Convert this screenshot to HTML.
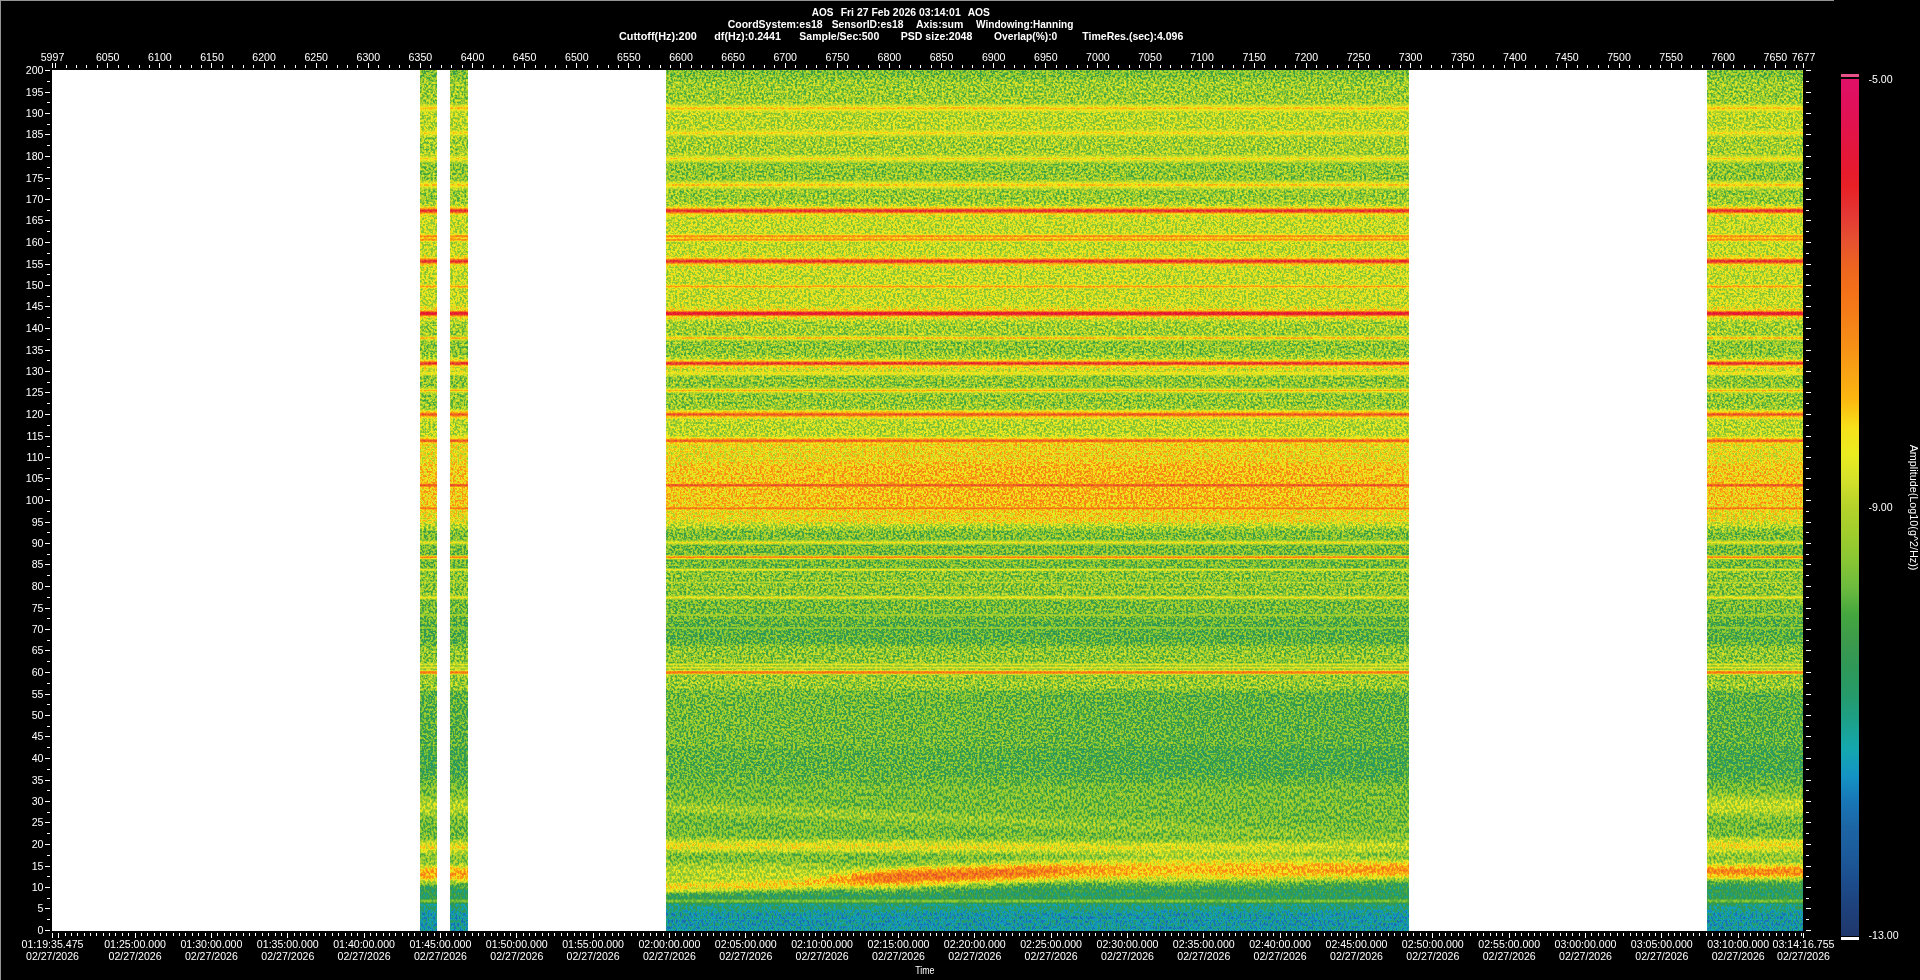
<!DOCTYPE html>
<html lang="en"><head><meta charset="utf-8"><title>AOS spectrogram</title>
<style>html,body{margin:0;padding:0;background:#000;overflow:hidden}svg{display:block;font-family:"Liberation Sans",sans-serif}</style></head>
<body>
<svg width="1920" height="980" viewBox="0 0 1920 980" shape-rendering="crispEdges">
<defs>
<linearGradient id="gU" gradientUnits="userSpaceOnUse" x1="0" y1="70" x2="0" y2="781"><stop offset="0.0007" stop-color="rgb(113,0,0)"/><stop offset="0.0077" stop-color="rgb(113,0,0)"/><stop offset="0.0176" stop-color="rgb(120,0,0)"/><stop offset="0.0359" stop-color="rgb(120,0,0)"/><stop offset="0.0373" stop-color="rgb(120,8,0)"/><stop offset="0.0387" stop-color="rgb(120,29,0)"/><stop offset="0.0401" stop-color="rgb(120,49,0)"/><stop offset="0.0415" stop-color="rgb(120,67,0)"/><stop offset="0.0429" stop-color="rgb(120,83,0)"/><stop offset="0.0443" stop-color="rgb(120,97,0)"/><stop offset="0.0457" stop-color="rgb(120,109,0)"/><stop offset="0.0471" stop-color="rgb(120,119,0)"/><stop offset="0.0485" stop-color="rgb(121,128,0)"/><stop offset="0.0499" stop-color="rgb(122,134,0)"/><stop offset="0.0513" stop-color="rgb(123,138,0)"/><stop offset="0.0527" stop-color="rgb(123,149,0)"/><stop offset="0.0541" stop-color="rgb(124,153,0)"/><stop offset="0.0556" stop-color="rgb(125,143,0)"/><stop offset="0.0584" stop-color="rgb(127,132,0)"/><stop offset="0.0598" stop-color="rgb(127,125,0)"/><stop offset="0.0612" stop-color="rgb(127,116,0)"/><stop offset="0.0626" stop-color="rgb(127,105,0)"/><stop offset="0.0640" stop-color="rgb(127,92,0)"/><stop offset="0.0654" stop-color="rgb(127,77,0)"/><stop offset="0.0668" stop-color="rgb(127,60,0)"/><stop offset="0.0682" stop-color="rgb(127,42,0)"/><stop offset="0.0710" stop-color="rgb(127,0,0)"/><stop offset="0.0724" stop-color="rgb(127,0,0)"/><stop offset="0.0738" stop-color="rgb(127,13,0)"/><stop offset="0.0752" stop-color="rgb(127,36,0)"/><stop offset="0.0767" stop-color="rgb(127,56,0)"/><stop offset="0.0781" stop-color="rgb(127,75,0)"/><stop offset="0.0795" stop-color="rgb(127,91,0)"/><stop offset="0.0809" stop-color="rgb(127,104,0)"/><stop offset="0.0823" stop-color="rgb(127,116,0)"/><stop offset="0.0837" stop-color="rgb(127,125,0)"/><stop offset="0.0851" stop-color="rgb(126,132,0)"/><stop offset="0.0865" stop-color="rgb(125,136,0)"/><stop offset="0.0879" stop-color="rgb(125,146,0)"/><stop offset="0.0893" stop-color="rgb(124,146,0)"/><stop offset="0.0907" stop-color="rgb(123,136,0)"/><stop offset="0.0921" stop-color="rgb(123,132,0)"/><stop offset="0.0935" stop-color="rgb(122,125,0)"/><stop offset="0.0949" stop-color="rgb(122,116,0)"/><stop offset="0.0963" stop-color="rgb(122,104,0)"/><stop offset="0.0977" stop-color="rgb(122,91,0)"/><stop offset="0.0992" stop-color="rgb(122,75,0)"/><stop offset="0.1006" stop-color="rgb(122,56,0)"/><stop offset="0.1020" stop-color="rgb(122,36,0)"/><stop offset="0.1034" stop-color="rgb(122,13,0)"/><stop offset="0.1048" stop-color="rgb(122,0,0)"/><stop offset="0.1076" stop-color="rgb(122,0,0)"/><stop offset="0.1090" stop-color="rgb(122,8,0)"/><stop offset="0.1104" stop-color="rgb(122,30,0)"/><stop offset="0.1118" stop-color="rgb(122,50,0)"/><stop offset="0.1132" stop-color="rgb(122,69,0)"/><stop offset="0.1146" stop-color="rgb(122,85,0)"/><stop offset="0.1160" stop-color="rgb(122,99,0)"/><stop offset="0.1174" stop-color="rgb(122,111,0)"/><stop offset="0.1188" stop-color="rgb(122,121,0)"/><stop offset="0.1203" stop-color="rgb(121,128,0)"/><stop offset="0.1217" stop-color="rgb(120,134,0)"/><stop offset="0.1231" stop-color="rgb(120,137,0)"/><stop offset="0.1245" stop-color="rgb(119,148,0)"/><stop offset="0.1259" stop-color="rgb(119,142,0)"/><stop offset="0.1273" stop-color="rgb(118,136,0)"/><stop offset="0.1287" stop-color="rgb(118,131,0)"/><stop offset="0.1301" stop-color="rgb(117,124,0)"/><stop offset="0.1315" stop-color="rgb(117,115,0)"/><stop offset="0.1329" stop-color="rgb(117,104,0)"/><stop offset="0.1343" stop-color="rgb(117,91,0)"/><stop offset="0.1357" stop-color="rgb(117,75,0)"/><stop offset="0.1371" stop-color="rgb(117,58,0)"/><stop offset="0.1385" stop-color="rgb(117,39,0)"/><stop offset="0.1399" stop-color="rgb(117,17,0)"/><stop offset="0.1414" stop-color="rgb(117,0,0)"/><stop offset="0.1442" stop-color="rgb(117,0,0)"/><stop offset="0.1456" stop-color="rgb(117,3,0)"/><stop offset="0.1470" stop-color="rgb(117,26,0)"/><stop offset="0.1484" stop-color="rgb(117,47,0)"/><stop offset="0.1498" stop-color="rgb(117,66,0)"/><stop offset="0.1512" stop-color="rgb(117,83,0)"/><stop offset="0.1526" stop-color="rgb(117,97,0)"/><stop offset="0.1540" stop-color="rgb(117,110,0)"/><stop offset="0.1554" stop-color="rgb(117,120,0)"/><stop offset="0.1568" stop-color="rgb(117,129,0)"/><stop offset="0.1582" stop-color="rgb(117,135,0)"/><stop offset="0.1596" stop-color="rgb(118,139,0)"/><stop offset="0.1610" stop-color="rgb(118,151,0)"/><stop offset="0.1624" stop-color="rgb(118,151,0)"/><stop offset="0.1639" stop-color="rgb(119,139,0)"/><stop offset="0.1653" stop-color="rgb(119,135,0)"/><stop offset="0.1667" stop-color="rgb(119,129,0)"/><stop offset="0.1681" stop-color="rgb(119,120,0)"/><stop offset="0.1695" stop-color="rgb(119,110,0)"/><stop offset="0.1709" stop-color="rgb(119,97,0)"/><stop offset="0.1723" stop-color="rgb(119,83,0)"/><stop offset="0.1737" stop-color="rgb(119,66,0)"/><stop offset="0.1751" stop-color="rgb(119,47,0)"/><stop offset="0.1765" stop-color="rgb(119,26,0)"/><stop offset="0.1779" stop-color="rgb(119,3,0)"/><stop offset="0.1793" stop-color="rgb(119,0,0)"/><stop offset="0.1835" stop-color="rgb(120,0,0)"/><stop offset="0.1850" stop-color="rgb(120,19,0)"/><stop offset="0.1864" stop-color="rgb(121,49,0)"/><stop offset="0.1878" stop-color="rgb(123,76,0)"/><stop offset="0.1892" stop-color="rgb(126,99,0)"/><stop offset="0.1906" stop-color="rgb(129,119,0)"/><stop offset="0.1920" stop-color="rgb(132,135,0)"/><stop offset="0.1934" stop-color="rgb(136,148,0)"/><stop offset="0.1948" stop-color="rgb(138,160,0)"/><stop offset="0.1962" stop-color="rgb(140,187,0)"/><stop offset="0.1976" stop-color="rgb(141,199,0)"/><stop offset="0.1990" stop-color="rgb(141,196,0)"/><stop offset="0.2004" stop-color="rgb(140,178,0)"/><stop offset="0.2018" stop-color="rgb(139,155,0)"/><stop offset="0.2032" stop-color="rgb(137,144,0)"/><stop offset="0.2046" stop-color="rgb(135,129,0)"/><stop offset="0.2060" stop-color="rgb(134,112,0)"/><stop offset="0.2075" stop-color="rgb(132,90,0)"/><stop offset="0.2089" stop-color="rgb(131,66,0)"/><stop offset="0.2103" stop-color="rgb(131,38,0)"/><stop offset="0.2117" stop-color="rgb(130,6,0)"/><stop offset="0.2131" stop-color="rgb(130,0,0)"/><stop offset="0.2229" stop-color="rgb(130,0,0)"/><stop offset="0.2243" stop-color="rgb(130,34,0)"/><stop offset="0.2257" stop-color="rgb(130,65,0)"/><stop offset="0.2271" stop-color="rgb(130,91,0)"/><stop offset="0.2286" stop-color="rgb(130,112,0)"/><stop offset="0.2300" stop-color="rgb(130,129,0)"/><stop offset="0.2314" stop-color="rgb(130,140,0)"/><stop offset="0.2328" stop-color="rgb(130,161,0)"/><stop offset="0.2342" stop-color="rgb(130,168,0)"/><stop offset="0.2356" stop-color="rgb(130,152,0)"/><stop offset="0.2370" stop-color="rgb(130,152,0)"/><stop offset="0.2384" stop-color="rgb(130,166,0)"/><stop offset="0.2398" stop-color="rgb(130,157,0)"/><stop offset="0.2412" stop-color="rgb(130,136,0)"/><stop offset="0.2426" stop-color="rgb(130,125,0)"/><stop offset="0.2440" stop-color="rgb(130,108,0)"/><stop offset="0.2454" stop-color="rgb(130,86,0)"/><stop offset="0.2468" stop-color="rgb(130,60,0)"/><stop offset="0.2482" stop-color="rgb(130,28,0)"/><stop offset="0.2496" stop-color="rgb(130,0,0)"/><stop offset="0.2539" stop-color="rgb(130,0,0)"/><stop offset="0.2553" stop-color="rgb(130,3,0)"/><stop offset="0.2567" stop-color="rgb(131,35,0)"/><stop offset="0.2581" stop-color="rgb(131,63,0)"/><stop offset="0.2595" stop-color="rgb(132,88,0)"/><stop offset="0.2609" stop-color="rgb(134,110,0)"/><stop offset="0.2623" stop-color="rgb(136,128,0)"/><stop offset="0.2637" stop-color="rgb(138,142,0)"/><stop offset="0.2651" stop-color="rgb(140,154,0)"/><stop offset="0.2665" stop-color="rgb(141,175,0)"/><stop offset="0.2679" stop-color="rgb(142,195,0)"/><stop offset="0.2693" stop-color="rgb(142,200,0)"/><stop offset="0.2707" stop-color="rgb(142,189,0)"/><stop offset="0.2722" stop-color="rgb(141,163,0)"/><stop offset="0.2750" stop-color="rgb(137,137,0)"/><stop offset="0.2764" stop-color="rgb(135,121,0)"/><stop offset="0.2778" stop-color="rgb(133,101,0)"/><stop offset="0.2792" stop-color="rgb(132,78,0)"/><stop offset="0.2806" stop-color="rgb(131,52,0)"/><stop offset="0.2820" stop-color="rgb(130,22,0)"/><stop offset="0.2834" stop-color="rgb(130,0,0)"/><stop offset="0.2932" stop-color="rgb(130,0,0)"/><stop offset="0.2947" stop-color="rgb(130,4,0)"/><stop offset="0.2961" stop-color="rgb(130,41,0)"/><stop offset="0.2975" stop-color="rgb(130,72,0)"/><stop offset="0.2989" stop-color="rgb(130,98,0)"/><stop offset="0.3003" stop-color="rgb(130,117,0)"/><stop offset="0.3017" stop-color="rgb(130,132,0)"/><stop offset="0.3031" stop-color="rgb(130,150,0)"/><stop offset="0.3045" stop-color="rgb(130,163,0)"/><stop offset="0.3059" stop-color="rgb(130,150,0)"/><stop offset="0.3073" stop-color="rgb(130,132,0)"/><stop offset="0.3087" stop-color="rgb(130,117,0)"/><stop offset="0.3101" stop-color="rgb(130,98,0)"/><stop offset="0.3115" stop-color="rgb(130,72,0)"/><stop offset="0.3129" stop-color="rgb(130,41,0)"/><stop offset="0.3143" stop-color="rgb(130,4,0)"/><stop offset="0.3158" stop-color="rgb(130,0,0)"/><stop offset="0.3284" stop-color="rgb(130,0,0)"/><stop offset="0.3298" stop-color="rgb(131,14,0)"/><stop offset="0.3312" stop-color="rgb(132,47,0)"/><stop offset="0.3326" stop-color="rgb(134,76,0)"/><stop offset="0.3340" stop-color="rgb(137,101,0)"/><stop offset="0.3354" stop-color="rgb(140,122,0)"/><stop offset="0.3368" stop-color="rgb(143,139,0)"/><stop offset="0.3383" stop-color="rgb(146,152,0)"/><stop offset="0.3397" stop-color="rgb(148,176,0)"/><stop offset="0.3411" stop-color="rgb(149,202,0)"/><stop offset="0.3425" stop-color="rgb(149,210,0)"/><stop offset="0.3439" stop-color="rgb(149,202,0)"/><stop offset="0.3453" stop-color="rgb(147,176,0)"/><stop offset="0.3467" stop-color="rgb(145,152,0)"/><stop offset="0.3481" stop-color="rgb(141,139,0)"/><stop offset="0.3495" stop-color="rgb(137,122,0)"/><stop offset="0.3509" stop-color="rgb(133,101,0)"/><stop offset="0.3523" stop-color="rgb(129,76,0)"/><stop offset="0.3537" stop-color="rgb(125,47,0)"/><stop offset="0.3551" stop-color="rgb(123,14,0)"/><stop offset="0.3565" stop-color="rgb(122,0,0)"/><stop offset="0.3650" stop-color="rgb(121,0,0)"/><stop offset="0.3664" stop-color="rgb(121,2,0)"/><stop offset="0.3678" stop-color="rgb(121,36,0)"/><stop offset="0.3692" stop-color="rgb(121,66,0)"/><stop offset="0.3706" stop-color="rgb(121,90,0)"/><stop offset="0.3720" stop-color="rgb(120,110,0)"/><stop offset="0.3734" stop-color="rgb(120,125,0)"/><stop offset="0.3748" stop-color="rgb(119,135,0)"/><stop offset="0.3762" stop-color="rgb(119,153,0)"/><stop offset="0.3776" stop-color="rgb(118,153,0)"/><stop offset="0.3790" stop-color="rgb(118,135,0)"/><stop offset="0.3805" stop-color="rgb(118,125,0)"/><stop offset="0.3819" stop-color="rgb(117,110,0)"/><stop offset="0.3833" stop-color="rgb(117,90,0)"/><stop offset="0.3847" stop-color="rgb(117,66,0)"/><stop offset="0.3861" stop-color="rgb(117,36,0)"/><stop offset="0.3875" stop-color="rgb(117,2,0)"/><stop offset="0.3889" stop-color="rgb(117,0,0)"/><stop offset="0.3987" stop-color="rgb(117,0,0)"/><stop offset="0.4001" stop-color="rgb(118,12,0)"/><stop offset="0.4015" stop-color="rgb(120,44,0)"/><stop offset="0.4030" stop-color="rgb(122,72,0)"/><stop offset="0.4044" stop-color="rgb(125,97,0)"/><stop offset="0.4058" stop-color="rgb(128,117,0)"/><stop offset="0.4072" stop-color="rgb(132,134,0)"/><stop offset="0.4086" stop-color="rgb(135,147,0)"/><stop offset="0.4100" stop-color="rgb(138,163,0)"/><stop offset="0.4114" stop-color="rgb(140,191,0)"/><stop offset="0.4128" stop-color="rgb(141,199,0)"/><stop offset="0.4142" stop-color="rgb(141,187,0)"/><stop offset="0.4156" stop-color="rgb(141,156,0)"/><stop offset="0.4170" stop-color="rgb(139,145,0)"/><stop offset="0.4184" stop-color="rgb(138,131,0)"/><stop offset="0.4198" stop-color="rgb(136,113,0)"/><stop offset="0.4212" stop-color="rgb(134,100,0)"/><stop offset="0.4226" stop-color="rgb(133,116,0)"/><stop offset="0.4241" stop-color="rgb(132,130,0)"/><stop offset="0.4255" stop-color="rgb(129,140,0)"/><stop offset="0.4269" stop-color="rgb(126,143,0)"/><stop offset="0.4283" stop-color="rgb(123,137,0)"/><stop offset="0.4311" stop-color="rgb(118,110,0)"/><stop offset="0.4325" stop-color="rgb(117,92,0)"/><stop offset="0.4339" stop-color="rgb(117,69,0)"/><stop offset="0.4353" stop-color="rgb(117,41,0)"/><stop offset="0.4367" stop-color="rgb(117,8,0)"/><stop offset="0.4381" stop-color="rgb(117,0,0)"/><stop offset="0.4395" stop-color="rgb(117,0,0)"/><stop offset="0.4409" stop-color="rgb(117,20,0)"/><stop offset="0.4423" stop-color="rgb(117,52,0)"/><stop offset="0.4437" stop-color="rgb(117,79,0)"/><stop offset="0.4451" stop-color="rgb(117,101,0)"/><stop offset="0.4466" stop-color="rgb(117,118,0)"/><stop offset="0.4480" stop-color="rgb(117,130,0)"/><stop offset="0.4494" stop-color="rgb(117,144,0)"/><stop offset="0.4508" stop-color="rgb(117,156,0)"/><stop offset="0.4522" stop-color="rgb(118,144,0)"/><stop offset="0.4536" stop-color="rgb(118,130,0)"/><stop offset="0.4550" stop-color="rgb(118,118,0)"/><stop offset="0.4564" stop-color="rgb(118,101,0)"/><stop offset="0.4578" stop-color="rgb(118,79,0)"/><stop offset="0.4592" stop-color="rgb(118,52,0)"/><stop offset="0.4606" stop-color="rgb(118,20,0)"/><stop offset="0.4620" stop-color="rgb(118,0,0)"/><stop offset="0.4705" stop-color="rgb(118,0,0)"/><stop offset="0.4719" stop-color="rgb(119,25,0)"/><stop offset="0.4733" stop-color="rgb(119,54,0)"/><stop offset="0.4747" stop-color="rgb(120,80,0)"/><stop offset="0.4761" stop-color="rgb(121,102,0)"/><stop offset="0.4775" stop-color="rgb(123,121,0)"/><stop offset="0.4789" stop-color="rgb(126,136,0)"/><stop offset="0.4803" stop-color="rgb(128,148,0)"/><stop offset="0.4817" stop-color="rgb(130,156,0)"/><stop offset="0.4831" stop-color="rgb(131,177,0)"/><stop offset="0.4845" stop-color="rgb(132,189,0)"/><stop offset="0.4859" stop-color="rgb(132,177,0)"/><stop offset="0.4873" stop-color="rgb(132,156,0)"/><stop offset="0.4887" stop-color="rgb(131,148,0)"/><stop offset="0.4902" stop-color="rgb(131,136,0)"/><stop offset="0.4916" stop-color="rgb(130,121,0)"/><stop offset="0.4930" stop-color="rgb(129,102,0)"/><stop offset="0.4944" stop-color="rgb(128,80,0)"/><stop offset="0.4958" stop-color="rgb(127,54,0)"/><stop offset="0.4972" stop-color="rgb(127,25,0)"/><stop offset="0.4986" stop-color="rgb(127,0,0)"/><stop offset="0.5070" stop-color="rgb(127,0,0)"/><stop offset="0.5084" stop-color="rgb(127,13,0)"/><stop offset="0.5098" stop-color="rgb(127,43,0)"/><stop offset="0.5113" stop-color="rgb(128,70,0)"/><stop offset="0.5127" stop-color="rgb(128,93,0)"/><stop offset="0.5141" stop-color="rgb(129,113,0)"/><stop offset="0.5155" stop-color="rgb(130,129,0)"/><stop offset="0.5169" stop-color="rgb(132,142,0)"/><stop offset="0.5183" stop-color="rgb(134,152,0)"/><stop offset="0.5197" stop-color="rgb(135,167,0)"/><stop offset="0.5211" stop-color="rgb(137,185,0)"/><stop offset="0.5225" stop-color="rgb(138,181,0)"/><stop offset="0.5239" stop-color="rgb(139,156,0)"/><stop offset="0.5253" stop-color="rgb(139,148,0)"/><stop offset="0.5267" stop-color="rgb(140,137,0)"/><stop offset="0.5281" stop-color="rgb(141,123,0)"/><stop offset="0.5295" stop-color="rgb(140,105,0)"/><stop offset="0.5309" stop-color="rgb(140,84,0)"/><stop offset="0.5323" stop-color="rgb(140,59,0)"/><stop offset="0.5338" stop-color="rgb(140,31,0)"/><stop offset="0.5352" stop-color="rgb(140,0,0)"/><stop offset="0.5478" stop-color="rgb(140,0,0)"/><stop offset="0.5577" stop-color="rgb(149,0,0)"/><stop offset="0.5717" stop-color="rgb(149,0,0)"/><stop offset="0.5731" stop-color="rgb(149,17,0)"/><stop offset="0.5745" stop-color="rgb(149,53,0)"/><stop offset="0.5759" stop-color="rgb(149,83,0)"/><stop offset="0.5774" stop-color="rgb(149,109,0)"/><stop offset="0.5788" stop-color="rgb(150,130,0)"/><stop offset="0.5802" stop-color="rgb(150,145,0)"/><stop offset="0.5816" stop-color="rgb(150,156,0)"/><stop offset="0.5830" stop-color="rgb(150,183,0)"/><stop offset="0.5844" stop-color="rgb(150,188,0)"/><stop offset="0.5858" stop-color="rgb(150,170,0)"/><stop offset="0.5872" stop-color="rgb(150,150,0)"/><stop offset="0.5886" stop-color="rgb(150,136,0)"/><stop offset="0.5900" stop-color="rgb(149,118,0)"/><stop offset="0.5914" stop-color="rgb(149,94,0)"/><stop offset="0.5928" stop-color="rgb(149,66,0)"/><stop offset="0.5942" stop-color="rgb(149,32,0)"/><stop offset="0.5956" stop-color="rgb(149,0,0)"/><stop offset="0.6069" stop-color="rgb(149,0,0)"/><stop offset="0.6083" stop-color="rgb(149,19,0)"/><stop offset="0.6097" stop-color="rgb(149,61,0)"/><stop offset="0.6111" stop-color="rgb(149,95,0)"/><stop offset="0.6125" stop-color="rgb(148,121,0)"/><stop offset="0.6139" stop-color="rgb(147,139,0)"/><stop offset="0.6153" stop-color="rgb(146,164,0)"/><stop offset="0.6167" stop-color="rgb(144,178,0)"/><stop offset="0.6181" stop-color="rgb(143,156,0)"/><stop offset="0.6210" stop-color="rgb(141,116,0)"/><stop offset="0.6224" stop-color="rgb(141,88,0)"/><stop offset="0.6238" stop-color="rgb(141,53,0)"/><stop offset="0.6252" stop-color="rgb(141,10,0)"/><stop offset="0.6266" stop-color="rgb(141,0,0)"/><stop offset="0.6322" stop-color="rgb(141,0,0)"/><stop offset="0.6336" stop-color="rgb(140,0,0)"/><stop offset="0.6491" stop-color="rgb(114,0,0)"/><stop offset="0.6505" stop-color="rgb(113,0,0)"/><stop offset="0.6547" stop-color="rgb(113,0,0)"/><stop offset="0.6561" stop-color="rgb(113,16,0)"/><stop offset="0.6575" stop-color="rgb(113,52,0)"/><stop offset="0.6589" stop-color="rgb(113,81,0)"/><stop offset="0.6603" stop-color="rgb(113,104,0)"/><stop offset="0.6617" stop-color="rgb(113,121,0)"/><stop offset="0.6632" stop-color="rgb(112,131,0)"/><stop offset="0.6646" stop-color="rgb(112,144,0)"/><stop offset="0.6660" stop-color="rgb(111,131,0)"/><stop offset="0.6674" stop-color="rgb(111,121,0)"/><stop offset="0.6688" stop-color="rgb(111,104,0)"/><stop offset="0.6702" stop-color="rgb(111,81,0)"/><stop offset="0.6716" stop-color="rgb(111,52,0)"/><stop offset="0.6730" stop-color="rgb(111,16,0)"/><stop offset="0.6744" stop-color="rgb(111,0,0)"/><stop offset="0.6772" stop-color="rgb(111,0,0)"/><stop offset="0.6786" stop-color="rgb(111,35,0)"/><stop offset="0.6800" stop-color="rgb(111,74,0)"/><stop offset="0.6814" stop-color="rgb(111,104,0)"/><stop offset="0.6828" stop-color="rgb(111,125,0)"/><stop offset="0.6842" stop-color="rgb(111,159,0)"/><stop offset="0.6857" stop-color="rgb(111,170,0)"/><stop offset="0.6885" stop-color="rgb(111,118,0)"/><stop offset="0.6899" stop-color="rgb(111,93,0)"/><stop offset="0.6913" stop-color="rgb(111,60,0)"/><stop offset="0.6927" stop-color="rgb(111,17,0)"/><stop offset="0.6941" stop-color="rgb(111,0,0)"/><stop offset="0.6955" stop-color="rgb(111,0,0)"/><stop offset="0.6969" stop-color="rgb(111,26,0)"/><stop offset="0.6983" stop-color="rgb(111,69,0)"/><stop offset="0.6997" stop-color="rgb(111,100,0)"/><stop offset="0.7025" stop-color="rgb(113,140,0)"/><stop offset="0.7039" stop-color="rgb(114,134,0)"/><stop offset="0.7053" stop-color="rgb(115,113,0)"/><stop offset="0.7068" stop-color="rgb(116,88,0)"/><stop offset="0.7082" stop-color="rgb(116,53,0)"/><stop offset="0.7096" stop-color="rgb(116,7,0)"/><stop offset="0.7110" stop-color="rgb(116,0,0)"/><stop offset="0.7138" stop-color="rgb(116,0,0)"/><stop offset="0.7152" stop-color="rgb(116,36,0)"/><stop offset="0.7166" stop-color="rgb(116,73,0)"/><stop offset="0.7180" stop-color="rgb(116,100,0)"/><stop offset="0.7194" stop-color="rgb(116,115,0)"/><stop offset="0.7208" stop-color="rgb(116,127,0)"/><stop offset="0.7222" stop-color="rgb(116,113,0)"/><stop offset="0.7236" stop-color="rgb(116,95,0)"/><stop offset="0.7250" stop-color="rgb(116,67,0)"/><stop offset="0.7264" stop-color="rgb(116,27,0)"/><stop offset="0.7278" stop-color="rgb(116,0,0)"/><stop offset="0.7335" stop-color="rgb(116,0,0)"/><stop offset="0.7349" stop-color="rgb(116,38,0)"/><stop offset="0.7363" stop-color="rgb(116,72,0)"/><stop offset="0.7377" stop-color="rgb(116,99,0)"/><stop offset="0.7391" stop-color="rgb(115,119,0)"/><stop offset="0.7419" stop-color="rgb(113,144,0)"/><stop offset="0.7447" stop-color="rgb(112,119,0)"/><stop offset="0.7461" stop-color="rgb(111,99,0)"/><stop offset="0.7475" stop-color="rgb(111,72,0)"/><stop offset="0.7489" stop-color="rgb(111,38,0)"/><stop offset="0.7504" stop-color="rgb(111,0,0)"/><stop offset="0.7588" stop-color="rgb(111,0,0)"/><stop offset="0.7602" stop-color="rgb(111,5,0)"/><stop offset="0.7616" stop-color="rgb(111,50,0)"/><stop offset="0.7630" stop-color="rgb(111,83,0)"/><stop offset="0.7644" stop-color="rgb(111,105,0)"/><stop offset="0.7658" stop-color="rgb(111,121,0)"/><stop offset="0.7672" stop-color="rgb(111,121,0)"/><stop offset="0.7686" stop-color="rgb(111,105,0)"/><stop offset="0.7700" stop-color="rgb(109,83,0)"/><stop offset="0.7714" stop-color="rgb(108,50,0)"/><stop offset="0.7729" stop-color="rgb(107,5,0)"/><stop offset="0.7743" stop-color="rgb(106,0,0)"/><stop offset="0.7785" stop-color="rgb(104,0,0)"/><stop offset="0.7799" stop-color="rgb(104,44,0)"/><stop offset="0.7813" stop-color="rgb(104,78,0)"/><stop offset="0.7827" stop-color="rgb(104,100,0)"/><stop offset="0.7841" stop-color="rgb(104,116,0)"/><stop offset="0.7855" stop-color="rgb(104,116,0)"/><stop offset="0.7869" stop-color="rgb(104,100,0)"/><stop offset="0.7883" stop-color="rgb(104,78,0)"/><stop offset="0.7897" stop-color="rgb(104,44,0)"/><stop offset="0.7911" stop-color="rgb(104,0,0)"/><stop offset="0.8038" stop-color="rgb(104,0,0)"/><stop offset="0.8052" stop-color="rgb(105,0,0)"/><stop offset="0.8122" stop-color="rgb(116,0,0)"/><stop offset="0.8136" stop-color="rgb(117,0,0)"/><stop offset="0.8291" stop-color="rgb(117,0,0)"/><stop offset="0.8305" stop-color="rgb(117,43,0)"/><stop offset="0.8319" stop-color="rgb(117,81,0)"/><stop offset="0.8333" stop-color="rgb(117,108,0)"/><stop offset="0.8347" stop-color="rgb(117,125,0)"/><stop offset="0.8361" stop-color="rgb(117,138,0)"/><stop offset="0.8376" stop-color="rgb(117,121,0)"/><stop offset="0.8390" stop-color="rgb(117,123,0)"/><stop offset="0.8404" stop-color="rgb(117,140,0)"/><stop offset="0.8418" stop-color="rgb(118,128,0)"/><stop offset="0.8432" stop-color="rgb(118,118,0)"/><stop offset="0.8446" stop-color="rgb(118,135,0)"/><stop offset="0.8460" stop-color="rgb(118,167,0)"/><stop offset="0.8474" stop-color="rgb(119,176,0)"/><stop offset="0.8488" stop-color="rgb(119,162,0)"/><stop offset="0.8502" stop-color="rgb(119,131,0)"/><stop offset="0.8516" stop-color="rgb(119,114,0)"/><stop offset="0.8530" stop-color="rgb(119,90,0)"/><stop offset="0.8544" stop-color="rgb(119,60,0)"/><stop offset="0.8558" stop-color="rgb(119,24,0)"/><stop offset="0.8572" stop-color="rgb(119,0,0)"/><stop offset="0.8685" stop-color="rgb(119,0,0)"/><stop offset="0.8699" stop-color="rgb(118,0,0)"/><stop offset="0.8769" stop-color="rgb(105,0,0)"/><stop offset="0.8783" stop-color="rgb(104,0,0)"/><stop offset="0.9487" stop-color="rgb(104,0,0)"/><stop offset="0.9571" stop-color="rgb(99,0,0)"/><stop offset="0.9909" stop-color="rgb(99,0,0)"/><stop offset="0.9993" stop-color="rgb(105,0,0)"/></linearGradient>
<linearGradient id="gS" gradientUnits="userSpaceOnUse" x1="0" y1="780" x2="0" y2="931"><stop offset="0.0033" stop-color="rgb(105,0,0)"/><stop offset="0.0430" stop-color="rgb(111,0,0)"/><stop offset="0.0762" stop-color="rgb(111,0,0)"/><stop offset="0.0960" stop-color="rgb(112,0,0)"/><stop offset="0.1159" stop-color="rgb(116,0,0)"/><stop offset="0.1556" stop-color="rgb(126,0,0)"/><stop offset="0.1755" stop-color="rgb(128,0,0)"/><stop offset="0.1887" stop-color="rgb(127,0,0)"/><stop offset="0.2020" stop-color="rgb(126,0,0)"/><stop offset="0.2483" stop-color="rgb(114,0,0)"/><stop offset="0.2682" stop-color="rgb(111,0,0)"/><stop offset="0.3013" stop-color="rgb(110,0,0)"/><stop offset="0.3742" stop-color="rgb(111,0,0)"/><stop offset="0.3874" stop-color="rgb(113,0,0)"/><stop offset="0.3940" stop-color="rgb(116,0,0)"/><stop offset="0.4205" stop-color="rgb(134,0,0)"/><stop offset="0.4338" stop-color="rgb(140,0,0)"/><stop offset="0.4404" stop-color="rgb(141,0,0)"/><stop offset="0.4470" stop-color="rgb(141,0,0)"/><stop offset="0.4603" stop-color="rgb(138,0,0)"/><stop offset="0.4669" stop-color="rgb(134,0,0)"/><stop offset="0.4868" stop-color="rgb(122,0,0)"/><stop offset="0.4934" stop-color="rgb(118,0,0)"/><stop offset="0.5000" stop-color="rgb(116,0,0)"/><stop offset="0.5132" stop-color="rgb(115,0,0)"/><stop offset="0.5331" stop-color="rgb(116,0,0)"/><stop offset="0.5464" stop-color="rgb(118,0,0)"/><stop offset="0.5530" stop-color="rgb(120,0,0)"/><stop offset="0.5596" stop-color="rgb(124,0,0)"/><stop offset="0.5662" stop-color="rgb(129,0,0)"/><stop offset="0.5861" stop-color="rgb(147,0,0)"/><stop offset="0.5927" stop-color="rgb(152,0,0)"/><stop offset="0.6060" stop-color="rgb(159,0,0)"/><stop offset="0.6192" stop-color="rgb(161,0,0)"/><stop offset="0.6325" stop-color="rgb(159,0,0)"/><stop offset="0.6457" stop-color="rgb(152,0,0)"/><stop offset="0.6589" stop-color="rgb(141,0,0)"/><stop offset="0.6987" stop-color="rgb(103,0,0)"/><stop offset="0.7053" stop-color="rgb(98,0,0)"/><stop offset="0.7119" stop-color="rgb(95,0,0)"/><stop offset="0.7252" stop-color="rgb(91,0,0)"/><stop offset="0.7384" stop-color="rgb(90,0,0)"/><stop offset="0.7583" stop-color="rgb(89,1,0)"/><stop offset="0.7649" stop-color="rgb(89,30,0)"/><stop offset="0.7715" stop-color="rgb(89,55,0)"/><stop offset="0.7781" stop-color="rgb(89,74,0)"/><stop offset="0.7914" stop-color="rgb(87,104,0)"/><stop offset="0.7980" stop-color="rgb(86,111,0)"/><stop offset="0.8046" stop-color="rgb(84,111,0)"/><stop offset="0.8113" stop-color="rgb(82,104,0)"/><stop offset="0.8245" stop-color="rgb(80,74,0)"/><stop offset="0.8311" stop-color="rgb(80,55,0)"/><stop offset="0.8377" stop-color="rgb(80,30,0)"/><stop offset="0.8444" stop-color="rgb(80,1,0)"/><stop offset="0.8576" stop-color="rgb(79,0,0)"/><stop offset="0.8775" stop-color="rgb(72,0,0)"/><stop offset="0.8907" stop-color="rgb(69,0,0)"/><stop offset="0.9967" stop-color="rgb(69,0,0)"/></linearGradient>
<linearGradient id="gR" gradientUnits="userSpaceOnUse" x1="0" y1="780" x2="0" y2="931"><stop offset="0.0033" stop-color="rgb(105,0,0)"/><stop offset="0.0364" stop-color="rgb(110,0,0)"/><stop offset="0.0828" stop-color="rgb(113,0,0)"/><stop offset="0.1026" stop-color="rgb(117,0,0)"/><stop offset="0.1424" stop-color="rgb(127,0,0)"/><stop offset="0.1689" stop-color="rgb(130,0,0)"/><stop offset="0.1821" stop-color="rgb(129,0,0)"/><stop offset="0.2020" stop-color="rgb(127,0,0)"/><stop offset="0.2483" stop-color="rgb(115,0,0)"/><stop offset="0.2682" stop-color="rgb(112,0,0)"/><stop offset="0.3013" stop-color="rgb(111,0,0)"/><stop offset="0.3609" stop-color="rgb(111,0,0)"/><stop offset="0.3742" stop-color="rgb(114,0,0)"/><stop offset="0.3808" stop-color="rgb(118,0,0)"/><stop offset="0.4007" stop-color="rgb(131,0,0)"/><stop offset="0.4139" stop-color="rgb(138,0,0)"/><stop offset="0.4272" stop-color="rgb(142,0,0)"/><stop offset="0.4338" stop-color="rgb(142,0,0)"/><stop offset="0.4404" stop-color="rgb(142,0,0)"/><stop offset="0.4536" stop-color="rgb(138,0,0)"/><stop offset="0.4801" stop-color="rgb(124,0,0)"/><stop offset="0.4934" stop-color="rgb(119,0,0)"/><stop offset="0.5132" stop-color="rgb(118,0,0)"/><stop offset="0.5331" stop-color="rgb(119,0,0)"/><stop offset="0.5464" stop-color="rgb(123,0,0)"/><stop offset="0.5530" stop-color="rgb(127,0,0)"/><stop offset="0.5596" stop-color="rgb(133,0,0)"/><stop offset="0.5795" stop-color="rgb(156,0,0)"/><stop offset="0.5861" stop-color="rgb(161,0,0)"/><stop offset="0.5927" stop-color="rgb(166,0,0)"/><stop offset="0.5993" stop-color="rgb(168,0,0)"/><stop offset="0.6060" stop-color="rgb(169,0,0)"/><stop offset="0.6126" stop-color="rgb(168,0,0)"/><stop offset="0.6192" stop-color="rgb(166,0,0)"/><stop offset="0.6258" stop-color="rgb(161,0,0)"/><stop offset="0.6325" stop-color="rgb(156,0,0)"/><stop offset="0.6589" stop-color="rgb(125,0,0)"/><stop offset="0.6788" stop-color="rgb(104,0,0)"/><stop offset="0.6854" stop-color="rgb(98,0,0)"/><stop offset="0.6921" stop-color="rgb(94,0,0)"/><stop offset="0.6987" stop-color="rgb(92,0,0)"/><stop offset="0.7119" stop-color="rgb(90,0,0)"/><stop offset="0.7583" stop-color="rgb(89,1,0)"/><stop offset="0.7649" stop-color="rgb(89,30,0)"/><stop offset="0.7715" stop-color="rgb(89,55,0)"/><stop offset="0.7781" stop-color="rgb(89,74,0)"/><stop offset="0.7914" stop-color="rgb(87,104,0)"/><stop offset="0.7980" stop-color="rgb(86,111,0)"/><stop offset="0.8046" stop-color="rgb(84,111,0)"/><stop offset="0.8113" stop-color="rgb(82,104,0)"/><stop offset="0.8245" stop-color="rgb(80,74,0)"/><stop offset="0.8311" stop-color="rgb(80,55,0)"/><stop offset="0.8377" stop-color="rgb(80,30,0)"/><stop offset="0.8444" stop-color="rgb(80,1,0)"/><stop offset="0.8576" stop-color="rgb(79,0,0)"/><stop offset="0.8775" stop-color="rgb(72,0,0)"/><stop offset="0.8907" stop-color="rgb(69,0,0)"/><stop offset="0.9967" stop-color="rgb(69,0,0)"/></linearGradient>
<linearGradient id="gM0" gradientUnits="userSpaceOnUse" x1="0" y1="780" x2="0" y2="931"><stop offset="0.0033" stop-color="rgb(105,0,0)"/><stop offset="0.0430" stop-color="rgb(111,0,0)"/><stop offset="0.1026" stop-color="rgb(110,0,0)"/><stop offset="0.1225" stop-color="rgb(111,0,0)"/><stop offset="0.1358" stop-color="rgb(113,0,0)"/><stop offset="0.1689" stop-color="rgb(121,0,0)"/><stop offset="0.1821" stop-color="rgb(122,0,0)"/><stop offset="0.1954" stop-color="rgb(121,0,0)"/><stop offset="0.2285" stop-color="rgb(113,0,0)"/><stop offset="0.2483" stop-color="rgb(111,0,0)"/><stop offset="0.3675" stop-color="rgb(111,0,0)"/><stop offset="0.3808" stop-color="rgb(114,0,0)"/><stop offset="0.3874" stop-color="rgb(117,0,0)"/><stop offset="0.4139" stop-color="rgb(135,0,0)"/><stop offset="0.4272" stop-color="rgb(140,0,0)"/><stop offset="0.4338" stop-color="rgb(141,0,0)"/><stop offset="0.4404" stop-color="rgb(141,0,0)"/><stop offset="0.4536" stop-color="rgb(137,0,0)"/><stop offset="0.4669" stop-color="rgb(130,0,0)"/><stop offset="0.4868" stop-color="rgb(116,0,0)"/><stop offset="0.4934" stop-color="rgb(114,0,0)"/><stop offset="0.5000" stop-color="rgb(112,0,0)"/><stop offset="0.5132" stop-color="rgb(112,0,0)"/><stop offset="0.5331" stop-color="rgb(114,0,0)"/><stop offset="0.5795" stop-color="rgb(124,0,0)"/><stop offset="0.5993" stop-color="rgb(127,0,0)"/><stop offset="0.6192" stop-color="rgb(128,0,0)"/><stop offset="0.6589" stop-color="rgb(124,0,0)"/><stop offset="0.6656" stop-color="rgb(125,0,0)"/><stop offset="0.6722" stop-color="rgb(127,0,0)"/><stop offset="0.6921" stop-color="rgb(139,0,0)"/><stop offset="0.6987" stop-color="rgb(142,0,0)"/><stop offset="0.7053" stop-color="rgb(143,0,0)"/><stop offset="0.7119" stop-color="rgb(143,0,0)"/><stop offset="0.7185" stop-color="rgb(140,0,0)"/><stop offset="0.7252" stop-color="rgb(137,0,0)"/><stop offset="0.7318" stop-color="rgb(131,0,0)"/><stop offset="0.7384" stop-color="rgb(124,0,0)"/><stop offset="0.7517" stop-color="rgb(108,0,0)"/><stop offset="0.7583" stop-color="rgb(100,1,0)"/><stop offset="0.7649" stop-color="rgb(96,30,0)"/><stop offset="0.7715" stop-color="rgb(93,55,0)"/><stop offset="0.7781" stop-color="rgb(91,74,0)"/><stop offset="0.7914" stop-color="rgb(88,104,0)"/><stop offset="0.7980" stop-color="rgb(86,111,0)"/><stop offset="0.8046" stop-color="rgb(84,111,0)"/><stop offset="0.8113" stop-color="rgb(82,104,0)"/><stop offset="0.8245" stop-color="rgb(80,74,0)"/><stop offset="0.8311" stop-color="rgb(80,55,0)"/><stop offset="0.8377" stop-color="rgb(80,30,0)"/><stop offset="0.8444" stop-color="rgb(80,1,0)"/><stop offset="0.8576" stop-color="rgb(79,0,0)"/><stop offset="0.8841" stop-color="rgb(70,0,0)"/><stop offset="0.8907" stop-color="rgb(69,0,0)"/><stop offset="0.9967" stop-color="rgb(69,0,0)"/></linearGradient>
<linearGradient id="gM1" gradientUnits="userSpaceOnUse" x1="0" y1="780" x2="0" y2="931"><stop offset="0.0033" stop-color="rgb(105,0,0)"/><stop offset="0.0430" stop-color="rgb(111,0,0)"/><stop offset="0.1093" stop-color="rgb(110,0,0)"/><stop offset="0.1291" stop-color="rgb(111,0,0)"/><stop offset="0.1424" stop-color="rgb(113,0,0)"/><stop offset="0.1755" stop-color="rgb(121,0,0)"/><stop offset="0.1887" stop-color="rgb(122,0,0)"/><stop offset="0.2020" stop-color="rgb(121,0,0)"/><stop offset="0.2351" stop-color="rgb(113,0,0)"/><stop offset="0.2550" stop-color="rgb(111,0,0)"/><stop offset="0.3675" stop-color="rgb(111,0,0)"/><stop offset="0.3808" stop-color="rgb(114,0,0)"/><stop offset="0.3874" stop-color="rgb(117,0,0)"/><stop offset="0.4139" stop-color="rgb(135,0,0)"/><stop offset="0.4272" stop-color="rgb(140,0,0)"/><stop offset="0.4338" stop-color="rgb(141,0,0)"/><stop offset="0.4404" stop-color="rgb(141,0,0)"/><stop offset="0.4536" stop-color="rgb(137,0,0)"/><stop offset="0.4669" stop-color="rgb(130,0,0)"/><stop offset="0.4868" stop-color="rgb(117,0,0)"/><stop offset="0.4934" stop-color="rgb(114,0,0)"/><stop offset="0.5000" stop-color="rgb(112,0,0)"/><stop offset="0.5132" stop-color="rgb(112,0,0)"/><stop offset="0.5331" stop-color="rgb(114,0,0)"/><stop offset="0.5795" stop-color="rgb(124,0,0)"/><stop offset="0.5993" stop-color="rgb(127,0,0)"/><stop offset="0.6192" stop-color="rgb(128,0,0)"/><stop offset="0.6589" stop-color="rgb(125,0,0)"/><stop offset="0.6656" stop-color="rgb(127,0,0)"/><stop offset="0.6921" stop-color="rgb(142,0,0)"/><stop offset="0.6987" stop-color="rgb(144,0,0)"/><stop offset="0.7053" stop-color="rgb(144,0,0)"/><stop offset="0.7119" stop-color="rgb(142,0,0)"/><stop offset="0.7185" stop-color="rgb(139,0,0)"/><stop offset="0.7252" stop-color="rgb(135,0,0)"/><stop offset="0.7318" stop-color="rgb(129,0,0)"/><stop offset="0.7517" stop-color="rgb(105,0,0)"/><stop offset="0.7583" stop-color="rgb(98,1,0)"/><stop offset="0.7649" stop-color="rgb(94,30,0)"/><stop offset="0.7715" stop-color="rgb(92,55,0)"/><stop offset="0.7781" stop-color="rgb(91,74,0)"/><stop offset="0.7914" stop-color="rgb(88,104,0)"/><stop offset="0.7980" stop-color="rgb(86,111,0)"/><stop offset="0.8046" stop-color="rgb(84,111,0)"/><stop offset="0.8113" stop-color="rgb(82,104,0)"/><stop offset="0.8245" stop-color="rgb(80,74,0)"/><stop offset="0.8311" stop-color="rgb(80,55,0)"/><stop offset="0.8377" stop-color="rgb(80,30,0)"/><stop offset="0.8444" stop-color="rgb(80,1,0)"/><stop offset="0.8576" stop-color="rgb(79,0,0)"/><stop offset="0.8841" stop-color="rgb(70,0,0)"/><stop offset="0.8907" stop-color="rgb(69,0,0)"/><stop offset="0.9967" stop-color="rgb(69,0,0)"/></linearGradient>
<linearGradient id="gM2" gradientUnits="userSpaceOnUse" x1="0" y1="780" x2="0" y2="931"><stop offset="0.0033" stop-color="rgb(105,0,0)"/><stop offset="0.0430" stop-color="rgb(111,0,0)"/><stop offset="0.1159" stop-color="rgb(110,0,0)"/><stop offset="0.1358" stop-color="rgb(111,0,0)"/><stop offset="0.1490" stop-color="rgb(113,0,0)"/><stop offset="0.1821" stop-color="rgb(121,0,0)"/><stop offset="0.1954" stop-color="rgb(122,0,0)"/><stop offset="0.2086" stop-color="rgb(121,0,0)"/><stop offset="0.2417" stop-color="rgb(113,0,0)"/><stop offset="0.2550" stop-color="rgb(111,0,0)"/><stop offset="0.2881" stop-color="rgb(110,0,0)"/><stop offset="0.3675" stop-color="rgb(111,0,0)"/><stop offset="0.3808" stop-color="rgb(114,0,0)"/><stop offset="0.3874" stop-color="rgb(117,0,0)"/><stop offset="0.4139" stop-color="rgb(134,0,0)"/><stop offset="0.4272" stop-color="rgb(139,0,0)"/><stop offset="0.4338" stop-color="rgb(140,0,0)"/><stop offset="0.4404" stop-color="rgb(140,0,0)"/><stop offset="0.4536" stop-color="rgb(137,0,0)"/><stop offset="0.4669" stop-color="rgb(130,0,0)"/><stop offset="0.4868" stop-color="rgb(117,0,0)"/><stop offset="0.4934" stop-color="rgb(114,0,0)"/><stop offset="0.5000" stop-color="rgb(112,0,0)"/><stop offset="0.5132" stop-color="rgb(112,0,0)"/><stop offset="0.5331" stop-color="rgb(114,0,0)"/><stop offset="0.5795" stop-color="rgb(124,0,0)"/><stop offset="0.5993" stop-color="rgb(127,0,0)"/><stop offset="0.6192" stop-color="rgb(128,0,0)"/><stop offset="0.6523" stop-color="rgb(126,0,0)"/><stop offset="0.6589" stop-color="rgb(127,0,0)"/><stop offset="0.6656" stop-color="rgb(130,0,0)"/><stop offset="0.6854" stop-color="rgb(141,0,0)"/><stop offset="0.6921" stop-color="rgb(144,0,0)"/><stop offset="0.6987" stop-color="rgb(145,0,0)"/><stop offset="0.7053" stop-color="rgb(144,0,0)"/><stop offset="0.7119" stop-color="rgb(142,0,0)"/><stop offset="0.7185" stop-color="rgb(138,0,0)"/><stop offset="0.7252" stop-color="rgb(133,0,0)"/><stop offset="0.7318" stop-color="rgb(126,0,0)"/><stop offset="0.7517" stop-color="rgb(102,0,0)"/><stop offset="0.7583" stop-color="rgb(97,1,0)"/><stop offset="0.7649" stop-color="rgb(94,30,0)"/><stop offset="0.7715" stop-color="rgb(92,55,0)"/><stop offset="0.7781" stop-color="rgb(90,74,0)"/><stop offset="0.7914" stop-color="rgb(88,104,0)"/><stop offset="0.7980" stop-color="rgb(86,111,0)"/><stop offset="0.8046" stop-color="rgb(84,111,0)"/><stop offset="0.8113" stop-color="rgb(82,104,0)"/><stop offset="0.8245" stop-color="rgb(80,74,0)"/><stop offset="0.8311" stop-color="rgb(80,55,0)"/><stop offset="0.8377" stop-color="rgb(80,30,0)"/><stop offset="0.8444" stop-color="rgb(80,1,0)"/><stop offset="0.8576" stop-color="rgb(79,0,0)"/><stop offset="0.8841" stop-color="rgb(70,0,0)"/><stop offset="0.8907" stop-color="rgb(69,0,0)"/><stop offset="0.9967" stop-color="rgb(69,0,0)"/></linearGradient>
<linearGradient id="gM3" gradientUnits="userSpaceOnUse" x1="0" y1="780" x2="0" y2="931"><stop offset="0.0033" stop-color="rgb(105,0,0)"/><stop offset="0.0430" stop-color="rgb(111,0,0)"/><stop offset="0.1159" stop-color="rgb(110,0,0)"/><stop offset="0.1424" stop-color="rgb(111,0,0)"/><stop offset="0.1556" stop-color="rgb(113,0,0)"/><stop offset="0.1887" stop-color="rgb(121,0,0)"/><stop offset="0.2020" stop-color="rgb(121,0,0)"/><stop offset="0.2152" stop-color="rgb(120,0,0)"/><stop offset="0.2483" stop-color="rgb(113,0,0)"/><stop offset="0.2616" stop-color="rgb(111,0,0)"/><stop offset="0.2881" stop-color="rgb(110,0,0)"/><stop offset="0.3675" stop-color="rgb(111,0,0)"/><stop offset="0.3808" stop-color="rgb(113,0,0)"/><stop offset="0.3874" stop-color="rgb(116,0,0)"/><stop offset="0.4139" stop-color="rgb(134,0,0)"/><stop offset="0.4272" stop-color="rgb(139,0,0)"/><stop offset="0.4338" stop-color="rgb(140,0,0)"/><stop offset="0.4404" stop-color="rgb(140,0,0)"/><stop offset="0.4536" stop-color="rgb(137,0,0)"/><stop offset="0.4603" stop-color="rgb(134,0,0)"/><stop offset="0.4868" stop-color="rgb(117,0,0)"/><stop offset="0.4934" stop-color="rgb(114,0,0)"/><stop offset="0.5000" stop-color="rgb(112,0,0)"/><stop offset="0.5132" stop-color="rgb(112,0,0)"/><stop offset="0.5331" stop-color="rgb(114,0,0)"/><stop offset="0.5728" stop-color="rgb(123,0,0)"/><stop offset="0.5927" stop-color="rgb(126,0,0)"/><stop offset="0.6126" stop-color="rgb(128,0,0)"/><stop offset="0.6457" stop-color="rgb(127,0,0)"/><stop offset="0.6523" stop-color="rgb(127,0,0)"/><stop offset="0.6589" stop-color="rgb(129,0,0)"/><stop offset="0.6788" stop-color="rgb(141,0,0)"/><stop offset="0.6854" stop-color="rgb(144,0,0)"/><stop offset="0.6921" stop-color="rgb(145,0,0)"/><stop offset="0.6987" stop-color="rgb(145,0,0)"/><stop offset="0.7053" stop-color="rgb(144,0,0)"/><stop offset="0.7119" stop-color="rgb(141,0,0)"/><stop offset="0.7185" stop-color="rgb(136,0,0)"/><stop offset="0.7252" stop-color="rgb(130,0,0)"/><stop offset="0.7318" stop-color="rgb(123,0,0)"/><stop offset="0.7450" stop-color="rgb(106,0,0)"/><stop offset="0.7517" stop-color="rgb(100,0,0)"/><stop offset="0.7583" stop-color="rgb(96,1,0)"/><stop offset="0.7649" stop-color="rgb(93,30,0)"/><stop offset="0.7715" stop-color="rgb(91,55,0)"/><stop offset="0.7781" stop-color="rgb(90,74,0)"/><stop offset="0.7914" stop-color="rgb(87,104,0)"/><stop offset="0.7980" stop-color="rgb(86,111,0)"/><stop offset="0.8046" stop-color="rgb(84,111,0)"/><stop offset="0.8113" stop-color="rgb(82,104,0)"/><stop offset="0.8245" stop-color="rgb(80,74,0)"/><stop offset="0.8311" stop-color="rgb(80,55,0)"/><stop offset="0.8377" stop-color="rgb(80,30,0)"/><stop offset="0.8444" stop-color="rgb(80,1,0)"/><stop offset="0.8576" stop-color="rgb(79,0,0)"/><stop offset="0.8841" stop-color="rgb(70,0,0)"/><stop offset="0.8907" stop-color="rgb(69,0,0)"/><stop offset="0.9967" stop-color="rgb(69,0,0)"/></linearGradient>
<linearGradient id="gM4" gradientUnits="userSpaceOnUse" x1="0" y1="780" x2="0" y2="931"><stop offset="0.0033" stop-color="rgb(105,0,0)"/><stop offset="0.0430" stop-color="rgb(111,0,0)"/><stop offset="0.1225" stop-color="rgb(110,0,0)"/><stop offset="0.1490" stop-color="rgb(111,0,0)"/><stop offset="0.1623" stop-color="rgb(113,0,0)"/><stop offset="0.1954" stop-color="rgb(120,0,0)"/><stop offset="0.2086" stop-color="rgb(121,0,0)"/><stop offset="0.2219" stop-color="rgb(120,0,0)"/><stop offset="0.2550" stop-color="rgb(113,0,0)"/><stop offset="0.2682" stop-color="rgb(111,0,0)"/><stop offset="0.2947" stop-color="rgb(110,0,0)"/><stop offset="0.3675" stop-color="rgb(111,0,0)"/><stop offset="0.3808" stop-color="rgb(113,0,0)"/><stop offset="0.3874" stop-color="rgb(116,0,0)"/><stop offset="0.4073" stop-color="rgb(129,0,0)"/><stop offset="0.4205" stop-color="rgb(137,0,0)"/><stop offset="0.4338" stop-color="rgb(140,0,0)"/><stop offset="0.4404" stop-color="rgb(140,0,0)"/><stop offset="0.4470" stop-color="rgb(139,0,0)"/><stop offset="0.4603" stop-color="rgb(134,0,0)"/><stop offset="0.4868" stop-color="rgb(117,0,0)"/><stop offset="0.4934" stop-color="rgb(114,0,0)"/><stop offset="0.5000" stop-color="rgb(112,0,0)"/><stop offset="0.5132" stop-color="rgb(112,0,0)"/><stop offset="0.5331" stop-color="rgb(114,0,0)"/><stop offset="0.5728" stop-color="rgb(123,0,0)"/><stop offset="0.5927" stop-color="rgb(126,0,0)"/><stop offset="0.6126" stop-color="rgb(128,0,0)"/><stop offset="0.6457" stop-color="rgb(128,0,0)"/><stop offset="0.6523" stop-color="rgb(129,0,0)"/><stop offset="0.6589" stop-color="rgb(132,0,0)"/><stop offset="0.6788" stop-color="rgb(143,0,0)"/><stop offset="0.6854" stop-color="rgb(145,0,0)"/><stop offset="0.6921" stop-color="rgb(146,0,0)"/><stop offset="0.6987" stop-color="rgb(145,0,0)"/><stop offset="0.7053" stop-color="rgb(143,0,0)"/><stop offset="0.7119" stop-color="rgb(139,0,0)"/><stop offset="0.7185" stop-color="rgb(134,0,0)"/><stop offset="0.7252" stop-color="rgb(127,0,0)"/><stop offset="0.7450" stop-color="rgb(104,0,0)"/><stop offset="0.7517" stop-color="rgb(98,0,0)"/><stop offset="0.7583" stop-color="rgb(95,1,0)"/><stop offset="0.7649" stop-color="rgb(92,30,0)"/><stop offset="0.7715" stop-color="rgb(91,55,0)"/><stop offset="0.7781" stop-color="rgb(90,74,0)"/><stop offset="0.7914" stop-color="rgb(87,104,0)"/><stop offset="0.7980" stop-color="rgb(86,111,0)"/><stop offset="0.8046" stop-color="rgb(84,111,0)"/><stop offset="0.8113" stop-color="rgb(82,104,0)"/><stop offset="0.8245" stop-color="rgb(80,74,0)"/><stop offset="0.8311" stop-color="rgb(80,55,0)"/><stop offset="0.8377" stop-color="rgb(80,30,0)"/><stop offset="0.8444" stop-color="rgb(80,1,0)"/><stop offset="0.8576" stop-color="rgb(79,0,0)"/><stop offset="0.8841" stop-color="rgb(70,0,0)"/><stop offset="0.8907" stop-color="rgb(69,0,0)"/><stop offset="0.9967" stop-color="rgb(69,0,0)"/></linearGradient>
<linearGradient id="gM5" gradientUnits="userSpaceOnUse" x1="0" y1="780" x2="0" y2="931"><stop offset="0.0033" stop-color="rgb(105,0,0)"/><stop offset="0.0430" stop-color="rgb(111,0,0)"/><stop offset="0.1291" stop-color="rgb(110,0,0)"/><stop offset="0.1556" stop-color="rgb(111,0,0)"/><stop offset="0.1689" stop-color="rgb(113,0,0)"/><stop offset="0.2020" stop-color="rgb(120,0,0)"/><stop offset="0.2152" stop-color="rgb(121,0,0)"/><stop offset="0.2285" stop-color="rgb(120,0,0)"/><stop offset="0.2616" stop-color="rgb(113,0,0)"/><stop offset="0.2748" stop-color="rgb(111,0,0)"/><stop offset="0.3675" stop-color="rgb(111,0,0)"/><stop offset="0.3808" stop-color="rgb(113,0,0)"/><stop offset="0.3874" stop-color="rgb(116,0,0)"/><stop offset="0.4073" stop-color="rgb(129,0,0)"/><stop offset="0.4205" stop-color="rgb(136,0,0)"/><stop offset="0.4338" stop-color="rgb(140,0,0)"/><stop offset="0.4404" stop-color="rgb(140,0,0)"/><stop offset="0.4470" stop-color="rgb(139,0,0)"/><stop offset="0.4603" stop-color="rgb(135,0,0)"/><stop offset="0.4868" stop-color="rgb(118,0,0)"/><stop offset="0.4934" stop-color="rgb(114,0,0)"/><stop offset="0.5000" stop-color="rgb(113,0,0)"/><stop offset="0.5132" stop-color="rgb(112,0,0)"/><stop offset="0.5331" stop-color="rgb(114,0,0)"/><stop offset="0.5927" stop-color="rgb(126,0,0)"/><stop offset="0.6391" stop-color="rgb(128,0,0)"/><stop offset="0.6457" stop-color="rgb(130,0,0)"/><stop offset="0.6523" stop-color="rgb(133,0,0)"/><stop offset="0.6722" stop-color="rgb(144,0,0)"/><stop offset="0.6788" stop-color="rgb(147,0,0)"/><stop offset="0.6854" stop-color="rgb(148,0,0)"/><stop offset="0.6921" stop-color="rgb(147,0,0)"/><stop offset="0.6987" stop-color="rgb(145,0,0)"/><stop offset="0.7053" stop-color="rgb(142,0,0)"/><stop offset="0.7119" stop-color="rgb(137,0,0)"/><stop offset="0.7185" stop-color="rgb(131,0,0)"/><stop offset="0.7384" stop-color="rgb(108,0,0)"/><stop offset="0.7450" stop-color="rgb(101,0,0)"/><stop offset="0.7517" stop-color="rgb(97,0,0)"/><stop offset="0.7583" stop-color="rgb(94,1,0)"/><stop offset="0.7649" stop-color="rgb(92,30,0)"/><stop offset="0.7715" stop-color="rgb(91,55,0)"/><stop offset="0.7781" stop-color="rgb(90,74,0)"/><stop offset="0.7914" stop-color="rgb(87,104,0)"/><stop offset="0.7980" stop-color="rgb(86,111,0)"/><stop offset="0.8046" stop-color="rgb(84,111,0)"/><stop offset="0.8113" stop-color="rgb(82,104,0)"/><stop offset="0.8245" stop-color="rgb(80,74,0)"/><stop offset="0.8311" stop-color="rgb(80,55,0)"/><stop offset="0.8377" stop-color="rgb(80,30,0)"/><stop offset="0.8444" stop-color="rgb(80,1,0)"/><stop offset="0.8576" stop-color="rgb(79,0,0)"/><stop offset="0.8775" stop-color="rgb(72,0,0)"/><stop offset="0.8907" stop-color="rgb(69,0,0)"/><stop offset="0.9967" stop-color="rgb(69,0,0)"/></linearGradient>
<linearGradient id="gM6" gradientUnits="userSpaceOnUse" x1="0" y1="780" x2="0" y2="931"><stop offset="0.0033" stop-color="rgb(105,0,0)"/><stop offset="0.0430" stop-color="rgb(111,0,0)"/><stop offset="0.1358" stop-color="rgb(110,0,0)"/><stop offset="0.1623" stop-color="rgb(111,0,0)"/><stop offset="0.1755" stop-color="rgb(113,0,0)"/><stop offset="0.2086" stop-color="rgb(120,0,0)"/><stop offset="0.2219" stop-color="rgb(121,0,0)"/><stop offset="0.2351" stop-color="rgb(120,0,0)"/><stop offset="0.2682" stop-color="rgb(113,0,0)"/><stop offset="0.2815" stop-color="rgb(111,0,0)"/><stop offset="0.3675" stop-color="rgb(111,0,0)"/><stop offset="0.3808" stop-color="rgb(113,0,0)"/><stop offset="0.3874" stop-color="rgb(115,0,0)"/><stop offset="0.4139" stop-color="rgb(132,0,0)"/><stop offset="0.4205" stop-color="rgb(136,0,0)"/><stop offset="0.4338" stop-color="rgb(140,0,0)"/><stop offset="0.4404" stop-color="rgb(140,0,0)"/><stop offset="0.4470" stop-color="rgb(139,0,0)"/><stop offset="0.4603" stop-color="rgb(135,0,0)"/><stop offset="0.4868" stop-color="rgb(118,0,0)"/><stop offset="0.4934" stop-color="rgb(114,0,0)"/><stop offset="0.5066" stop-color="rgb(112,0,0)"/><stop offset="0.5199" stop-color="rgb(112,0,0)"/><stop offset="0.5397" stop-color="rgb(114,0,0)"/><stop offset="0.5861" stop-color="rgb(123,0,0)"/><stop offset="0.6192" stop-color="rgb(127,0,0)"/><stop offset="0.6258" stop-color="rgb(129,0,0)"/><stop offset="0.6325" stop-color="rgb(132,0,0)"/><stop offset="0.6523" stop-color="rgb(146,0,0)"/><stop offset="0.6589" stop-color="rgb(149,0,0)"/><stop offset="0.6656" stop-color="rgb(152,0,0)"/><stop offset="0.6722" stop-color="rgb(153,0,0)"/><stop offset="0.6788" stop-color="rgb(152,0,0)"/><stop offset="0.6854" stop-color="rgb(151,0,0)"/><stop offset="0.6921" stop-color="rgb(148,0,0)"/><stop offset="0.6987" stop-color="rgb(143,0,0)"/><stop offset="0.7119" stop-color="rgb(132,0,0)"/><stop offset="0.7318" stop-color="rgb(109,0,0)"/><stop offset="0.7384" stop-color="rgb(102,0,0)"/><stop offset="0.7450" stop-color="rgb(98,0,0)"/><stop offset="0.7583" stop-color="rgb(92,1,0)"/><stop offset="0.7649" stop-color="rgb(91,30,0)"/><stop offset="0.7715" stop-color="rgb(90,55,0)"/><stop offset="0.7781" stop-color="rgb(90,74,0)"/><stop offset="0.7914" stop-color="rgb(87,104,0)"/><stop offset="0.7980" stop-color="rgb(86,111,0)"/><stop offset="0.8046" stop-color="rgb(84,111,0)"/><stop offset="0.8113" stop-color="rgb(82,104,0)"/><stop offset="0.8245" stop-color="rgb(80,74,0)"/><stop offset="0.8311" stop-color="rgb(80,55,0)"/><stop offset="0.8377" stop-color="rgb(80,30,0)"/><stop offset="0.8444" stop-color="rgb(80,1,0)"/><stop offset="0.8576" stop-color="rgb(79,0,0)"/><stop offset="0.8775" stop-color="rgb(72,0,0)"/><stop offset="0.8907" stop-color="rgb(69,0,0)"/><stop offset="0.9967" stop-color="rgb(69,0,0)"/></linearGradient>
<linearGradient id="gM7" gradientUnits="userSpaceOnUse" x1="0" y1="780" x2="0" y2="931"><stop offset="0.0033" stop-color="rgb(105,0,0)"/><stop offset="0.0430" stop-color="rgb(111,0,0)"/><stop offset="0.1424" stop-color="rgb(110,0,0)"/><stop offset="0.1689" stop-color="rgb(111,0,0)"/><stop offset="0.1821" stop-color="rgb(113,0,0)"/><stop offset="0.2152" stop-color="rgb(120,0,0)"/><stop offset="0.2285" stop-color="rgb(121,0,0)"/><stop offset="0.2417" stop-color="rgb(120,0,0)"/><stop offset="0.2748" stop-color="rgb(113,0,0)"/><stop offset="0.2881" stop-color="rgb(111,0,0)"/><stop offset="0.3675" stop-color="rgb(111,0,0)"/><stop offset="0.3808" stop-color="rgb(113,0,0)"/><stop offset="0.3874" stop-color="rgb(115,0,0)"/><stop offset="0.4139" stop-color="rgb(132,0,0)"/><stop offset="0.4205" stop-color="rgb(135,0,0)"/><stop offset="0.4338" stop-color="rgb(139,0,0)"/><stop offset="0.4404" stop-color="rgb(140,0,0)"/><stop offset="0.4470" stop-color="rgb(139,0,0)"/><stop offset="0.4603" stop-color="rgb(135,0,0)"/><stop offset="0.4669" stop-color="rgb(131,0,0)"/><stop offset="0.4868" stop-color="rgb(118,0,0)"/><stop offset="0.4934" stop-color="rgb(115,0,0)"/><stop offset="0.5066" stop-color="rgb(112,0,0)"/><stop offset="0.5265" stop-color="rgb(112,0,0)"/><stop offset="0.5596" stop-color="rgb(117,0,0)"/><stop offset="0.5993" stop-color="rgb(125,0,0)"/><stop offset="0.6060" stop-color="rgb(127,0,0)"/><stop offset="0.6126" stop-color="rgb(131,0,0)"/><stop offset="0.6325" stop-color="rgb(147,0,0)"/><stop offset="0.6457" stop-color="rgb(156,0,0)"/><stop offset="0.6523" stop-color="rgb(158,0,0)"/><stop offset="0.6589" stop-color="rgb(160,0,0)"/><stop offset="0.6656" stop-color="rgb(160,0,0)"/><stop offset="0.6722" stop-color="rgb(159,0,0)"/><stop offset="0.6788" stop-color="rgb(156,0,0)"/><stop offset="0.6854" stop-color="rgb(153,0,0)"/><stop offset="0.6987" stop-color="rgb(142,0,0)"/><stop offset="0.7053" stop-color="rgb(135,0,0)"/><stop offset="0.7252" stop-color="rgb(113,0,0)"/><stop offset="0.7318" stop-color="rgb(106,0,0)"/><stop offset="0.7450" stop-color="rgb(97,0,0)"/><stop offset="0.7583" stop-color="rgb(92,1,0)"/><stop offset="0.7649" stop-color="rgb(91,30,0)"/><stop offset="0.7715" stop-color="rgb(90,55,0)"/><stop offset="0.7781" stop-color="rgb(90,74,0)"/><stop offset="0.7914" stop-color="rgb(87,104,0)"/><stop offset="0.7980" stop-color="rgb(86,111,0)"/><stop offset="0.8046" stop-color="rgb(84,111,0)"/><stop offset="0.8113" stop-color="rgb(82,104,0)"/><stop offset="0.8245" stop-color="rgb(80,74,0)"/><stop offset="0.8311" stop-color="rgb(80,55,0)"/><stop offset="0.8377" stop-color="rgb(80,30,0)"/><stop offset="0.8444" stop-color="rgb(80,1,0)"/><stop offset="0.8576" stop-color="rgb(79,0,0)"/><stop offset="0.8775" stop-color="rgb(72,0,0)"/><stop offset="0.8907" stop-color="rgb(69,0,0)"/><stop offset="0.9967" stop-color="rgb(69,0,0)"/></linearGradient>
<linearGradient id="gM8" gradientUnits="userSpaceOnUse" x1="0" y1="780" x2="0" y2="931"><stop offset="0.0033" stop-color="rgb(105,0,0)"/><stop offset="0.0430" stop-color="rgb(111,0,0)"/><stop offset="0.1490" stop-color="rgb(110,0,0)"/><stop offset="0.1755" stop-color="rgb(111,0,0)"/><stop offset="0.1887" stop-color="rgb(113,0,0)"/><stop offset="0.2219" stop-color="rgb(120,0,0)"/><stop offset="0.2351" stop-color="rgb(121,0,0)"/><stop offset="0.2483" stop-color="rgb(119,0,0)"/><stop offset="0.2748" stop-color="rgb(114,0,0)"/><stop offset="0.2947" stop-color="rgb(111,0,0)"/><stop offset="0.3477" stop-color="rgb(110,0,0)"/><stop offset="0.3742" stop-color="rgb(111,0,0)"/><stop offset="0.3874" stop-color="rgb(115,0,0)"/><stop offset="0.4205" stop-color="rgb(135,0,0)"/><stop offset="0.4338" stop-color="rgb(139,0,0)"/><stop offset="0.4404" stop-color="rgb(140,0,0)"/><stop offset="0.4470" stop-color="rgb(139,0,0)"/><stop offset="0.4603" stop-color="rgb(135,0,0)"/><stop offset="0.4669" stop-color="rgb(131,0,0)"/><stop offset="0.4868" stop-color="rgb(118,0,0)"/><stop offset="0.4934" stop-color="rgb(115,0,0)"/><stop offset="0.5000" stop-color="rgb(113,0,0)"/><stop offset="0.5132" stop-color="rgb(111,0,0)"/><stop offset="0.5331" stop-color="rgb(112,0,0)"/><stop offset="0.5530" stop-color="rgb(115,0,0)"/><stop offset="0.5662" stop-color="rgb(118,0,0)"/><stop offset="0.5795" stop-color="rgb(123,0,0)"/><stop offset="0.5861" stop-color="rgb(126,0,0)"/><stop offset="0.5993" stop-color="rgb(136,0,0)"/><stop offset="0.6192" stop-color="rgb(155,0,0)"/><stop offset="0.6258" stop-color="rgb(161,0,0)"/><stop offset="0.6391" stop-color="rgb(169,0,0)"/><stop offset="0.6523" stop-color="rgb(172,0,0)"/><stop offset="0.6589" stop-color="rgb(172,0,0)"/><stop offset="0.6656" stop-color="rgb(170,0,0)"/><stop offset="0.6722" stop-color="rgb(168,0,0)"/><stop offset="0.6854" stop-color="rgb(159,0,0)"/><stop offset="0.6987" stop-color="rgb(147,0,0)"/><stop offset="0.7185" stop-color="rgb(124,0,0)"/><stop offset="0.7318" stop-color="rgb(111,0,0)"/><stop offset="0.7450" stop-color="rgb(101,0,0)"/><stop offset="0.7583" stop-color="rgb(94,1,0)"/><stop offset="0.7649" stop-color="rgb(92,30,0)"/><stop offset="0.7715" stop-color="rgb(91,55,0)"/><stop offset="0.7781" stop-color="rgb(90,74,0)"/><stop offset="0.7914" stop-color="rgb(87,104,0)"/><stop offset="0.7980" stop-color="rgb(86,111,0)"/><stop offset="0.8046" stop-color="rgb(84,111,0)"/><stop offset="0.8113" stop-color="rgb(82,104,0)"/><stop offset="0.8245" stop-color="rgb(80,74,0)"/><stop offset="0.8311" stop-color="rgb(80,55,0)"/><stop offset="0.8377" stop-color="rgb(80,30,0)"/><stop offset="0.8444" stop-color="rgb(80,1,0)"/><stop offset="0.8576" stop-color="rgb(79,0,0)"/><stop offset="0.8775" stop-color="rgb(72,0,0)"/><stop offset="0.8907" stop-color="rgb(69,0,0)"/><stop offset="0.9967" stop-color="rgb(69,0,0)"/></linearGradient>
<linearGradient id="gM9" gradientUnits="userSpaceOnUse" x1="0" y1="780" x2="0" y2="931"><stop offset="0.0033" stop-color="rgb(105,0,0)"/><stop offset="0.0430" stop-color="rgb(111,0,0)"/><stop offset="0.1556" stop-color="rgb(110,0,0)"/><stop offset="0.1821" stop-color="rgb(111,0,0)"/><stop offset="0.1954" stop-color="rgb(113,0,0)"/><stop offset="0.2219" stop-color="rgb(119,0,0)"/><stop offset="0.2351" stop-color="rgb(120,0,0)"/><stop offset="0.2550" stop-color="rgb(119,0,0)"/><stop offset="0.2815" stop-color="rgb(114,0,0)"/><stop offset="0.3013" stop-color="rgb(111,0,0)"/><stop offset="0.3477" stop-color="rgb(110,0,0)"/><stop offset="0.3742" stop-color="rgb(111,0,0)"/><stop offset="0.3874" stop-color="rgb(114,0,0)"/><stop offset="0.4205" stop-color="rgb(135,0,0)"/><stop offset="0.4338" stop-color="rgb(139,0,0)"/><stop offset="0.4404" stop-color="rgb(140,0,0)"/><stop offset="0.4470" stop-color="rgb(139,0,0)"/><stop offset="0.4603" stop-color="rgb(135,0,0)"/><stop offset="0.4669" stop-color="rgb(132,0,0)"/><stop offset="0.4868" stop-color="rgb(118,0,0)"/><stop offset="0.4934" stop-color="rgb(115,0,0)"/><stop offset="0.5000" stop-color="rgb(113,0,0)"/><stop offset="0.5132" stop-color="rgb(111,0,0)"/><stop offset="0.5397" stop-color="rgb(112,0,0)"/><stop offset="0.5530" stop-color="rgb(114,0,0)"/><stop offset="0.5596" stop-color="rgb(117,0,0)"/><stop offset="0.5728" stop-color="rgb(124,0,0)"/><stop offset="0.5861" stop-color="rgb(135,0,0)"/><stop offset="0.6060" stop-color="rgb(156,0,0)"/><stop offset="0.6192" stop-color="rgb(167,0,0)"/><stop offset="0.6325" stop-color="rgb(175,0,0)"/><stop offset="0.6457" stop-color="rgb(177,0,0)"/><stop offset="0.6589" stop-color="rgb(175,0,0)"/><stop offset="0.6722" stop-color="rgb(169,0,0)"/><stop offset="0.6854" stop-color="rgb(158,0,0)"/><stop offset="0.7119" stop-color="rgb(129,0,0)"/><stop offset="0.7252" stop-color="rgb(116,0,0)"/><stop offset="0.7450" stop-color="rgb(100,0,0)"/><stop offset="0.7583" stop-color="rgb(94,1,0)"/><stop offset="0.7649" stop-color="rgb(92,30,0)"/><stop offset="0.7715" stop-color="rgb(90,55,0)"/><stop offset="0.7781" stop-color="rgb(90,74,0)"/><stop offset="0.7914" stop-color="rgb(87,104,0)"/><stop offset="0.7980" stop-color="rgb(86,111,0)"/><stop offset="0.8046" stop-color="rgb(84,111,0)"/><stop offset="0.8113" stop-color="rgb(82,104,0)"/><stop offset="0.8245" stop-color="rgb(80,74,0)"/><stop offset="0.8311" stop-color="rgb(80,55,0)"/><stop offset="0.8377" stop-color="rgb(80,30,0)"/><stop offset="0.8444" stop-color="rgb(80,1,0)"/><stop offset="0.8576" stop-color="rgb(79,0,0)"/><stop offset="0.8775" stop-color="rgb(72,0,0)"/><stop offset="0.8907" stop-color="rgb(69,0,0)"/><stop offset="0.9967" stop-color="rgb(69,0,0)"/></linearGradient>
<linearGradient id="gM10" gradientUnits="userSpaceOnUse" x1="0" y1="780" x2="0" y2="931"><stop offset="0.0033" stop-color="rgb(105,0,0)"/><stop offset="0.0430" stop-color="rgb(111,0,0)"/><stop offset="0.1623" stop-color="rgb(110,0,0)"/><stop offset="0.1887" stop-color="rgb(111,0,0)"/><stop offset="0.2020" stop-color="rgb(113,0,0)"/><stop offset="0.2285" stop-color="rgb(119,0,0)"/><stop offset="0.2417" stop-color="rgb(120,0,0)"/><stop offset="0.2616" stop-color="rgb(119,0,0)"/><stop offset="0.2881" stop-color="rgb(113,0,0)"/><stop offset="0.3079" stop-color="rgb(111,0,0)"/><stop offset="0.3477" stop-color="rgb(110,0,0)"/><stop offset="0.3742" stop-color="rgb(111,0,0)"/><stop offset="0.3874" stop-color="rgb(114,0,0)"/><stop offset="0.3940" stop-color="rgb(118,0,0)"/><stop offset="0.4205" stop-color="rgb(134,0,0)"/><stop offset="0.4338" stop-color="rgb(139,0,0)"/><stop offset="0.4404" stop-color="rgb(139,0,0)"/><stop offset="0.4470" stop-color="rgb(139,0,0)"/><stop offset="0.4603" stop-color="rgb(135,0,0)"/><stop offset="0.4669" stop-color="rgb(132,0,0)"/><stop offset="0.4868" stop-color="rgb(119,0,0)"/><stop offset="0.4934" stop-color="rgb(115,0,0)"/><stop offset="0.5000" stop-color="rgb(113,0,0)"/><stop offset="0.5132" stop-color="rgb(111,0,0)"/><stop offset="0.5331" stop-color="rgb(112,0,0)"/><stop offset="0.5464" stop-color="rgb(115,0,0)"/><stop offset="0.5596" stop-color="rgb(120,0,0)"/><stop offset="0.5728" stop-color="rgb(130,0,0)"/><stop offset="0.5993" stop-color="rgb(158,0,0)"/><stop offset="0.6126" stop-color="rgb(169,0,0)"/><stop offset="0.6258" stop-color="rgb(176,0,0)"/><stop offset="0.6391" stop-color="rgb(179,0,0)"/><stop offset="0.6523" stop-color="rgb(177,0,0)"/><stop offset="0.6656" stop-color="rgb(170,0,0)"/><stop offset="0.6788" stop-color="rgb(159,0,0)"/><stop offset="0.7119" stop-color="rgb(123,0,0)"/><stop offset="0.7252" stop-color="rgb(111,0,0)"/><stop offset="0.7384" stop-color="rgb(101,0,0)"/><stop offset="0.7450" stop-color="rgb(97,0,0)"/><stop offset="0.7583" stop-color="rgb(92,1,0)"/><stop offset="0.7649" stop-color="rgb(90,30,0)"/><stop offset="0.7715" stop-color="rgb(90,55,0)"/><stop offset="0.7781" stop-color="rgb(89,74,0)"/><stop offset="0.7914" stop-color="rgb(87,104,0)"/><stop offset="0.7980" stop-color="rgb(86,111,0)"/><stop offset="0.8046" stop-color="rgb(84,111,0)"/><stop offset="0.8113" stop-color="rgb(82,104,0)"/><stop offset="0.8245" stop-color="rgb(80,74,0)"/><stop offset="0.8311" stop-color="rgb(80,55,0)"/><stop offset="0.8377" stop-color="rgb(80,30,0)"/><stop offset="0.8444" stop-color="rgb(80,1,0)"/><stop offset="0.8576" stop-color="rgb(79,0,0)"/><stop offset="0.8775" stop-color="rgb(72,0,0)"/><stop offset="0.8907" stop-color="rgb(69,0,0)"/><stop offset="0.9967" stop-color="rgb(69,0,0)"/></linearGradient>
<linearGradient id="gM11" gradientUnits="userSpaceOnUse" x1="0" y1="780" x2="0" y2="931"><stop offset="0.0033" stop-color="rgb(105,0,0)"/><stop offset="0.0430" stop-color="rgb(111,0,0)"/><stop offset="0.1689" stop-color="rgb(110,0,0)"/><stop offset="0.1954" stop-color="rgb(111,0,0)"/><stop offset="0.2086" stop-color="rgb(113,0,0)"/><stop offset="0.2351" stop-color="rgb(118,0,0)"/><stop offset="0.2483" stop-color="rgb(120,0,0)"/><stop offset="0.2682" stop-color="rgb(119,0,0)"/><stop offset="0.2947" stop-color="rgb(113,0,0)"/><stop offset="0.3146" stop-color="rgb(111,0,0)"/><stop offset="0.3742" stop-color="rgb(111,0,0)"/><stop offset="0.3874" stop-color="rgb(114,0,0)"/><stop offset="0.3940" stop-color="rgb(117,0,0)"/><stop offset="0.4205" stop-color="rgb(134,0,0)"/><stop offset="0.4338" stop-color="rgb(139,0,0)"/><stop offset="0.4404" stop-color="rgb(139,0,0)"/><stop offset="0.4470" stop-color="rgb(139,0,0)"/><stop offset="0.4603" stop-color="rgb(135,0,0)"/><stop offset="0.4735" stop-color="rgb(128,0,0)"/><stop offset="0.4868" stop-color="rgb(119,0,0)"/><stop offset="0.4934" stop-color="rgb(115,0,0)"/><stop offset="0.5000" stop-color="rgb(113,0,0)"/><stop offset="0.5132" stop-color="rgb(111,0,0)"/><stop offset="0.5265" stop-color="rgb(112,0,0)"/><stop offset="0.5397" stop-color="rgb(114,0,0)"/><stop offset="0.5464" stop-color="rgb(117,0,0)"/><stop offset="0.5596" stop-color="rgb(124,0,0)"/><stop offset="0.5728" stop-color="rgb(135,0,0)"/><stop offset="0.5927" stop-color="rgb(157,0,0)"/><stop offset="0.6060" stop-color="rgb(168,0,0)"/><stop offset="0.6192" stop-color="rgb(175,0,0)"/><stop offset="0.6325" stop-color="rgb(178,0,0)"/><stop offset="0.6457" stop-color="rgb(176,0,0)"/><stop offset="0.6589" stop-color="rgb(170,0,0)"/><stop offset="0.6722" stop-color="rgb(159,0,0)"/><stop offset="0.7053" stop-color="rgb(123,0,0)"/><stop offset="0.7185" stop-color="rgb(111,0,0)"/><stop offset="0.7318" stop-color="rgb(101,0,0)"/><stop offset="0.7384" stop-color="rgb(97,0,0)"/><stop offset="0.7450" stop-color="rgb(94,0,0)"/><stop offset="0.7583" stop-color="rgb(90,1,0)"/><stop offset="0.7649" stop-color="rgb(90,30,0)"/><stop offset="0.7715" stop-color="rgb(90,55,0)"/><stop offset="0.7781" stop-color="rgb(89,74,0)"/><stop offset="0.7914" stop-color="rgb(87,104,0)"/><stop offset="0.7980" stop-color="rgb(86,111,0)"/><stop offset="0.8046" stop-color="rgb(84,111,0)"/><stop offset="0.8113" stop-color="rgb(82,104,0)"/><stop offset="0.8245" stop-color="rgb(80,74,0)"/><stop offset="0.8311" stop-color="rgb(80,55,0)"/><stop offset="0.8377" stop-color="rgb(80,30,0)"/><stop offset="0.8444" stop-color="rgb(80,1,0)"/><stop offset="0.8576" stop-color="rgb(79,0,0)"/><stop offset="0.8775" stop-color="rgb(72,0,0)"/><stop offset="0.8907" stop-color="rgb(69,0,0)"/><stop offset="0.9967" stop-color="rgb(69,0,0)"/></linearGradient>
<linearGradient id="gM12" gradientUnits="userSpaceOnUse" x1="0" y1="780" x2="0" y2="931"><stop offset="0.0033" stop-color="rgb(105,0,0)"/><stop offset="0.0430" stop-color="rgb(111,0,0)"/><stop offset="0.1954" stop-color="rgb(111,0,0)"/><stop offset="0.2152" stop-color="rgb(113,0,0)"/><stop offset="0.2417" stop-color="rgb(118,0,0)"/><stop offset="0.2550" stop-color="rgb(120,0,0)"/><stop offset="0.2748" stop-color="rgb(119,0,0)"/><stop offset="0.3013" stop-color="rgb(113,0,0)"/><stop offset="0.3146" stop-color="rgb(111,0,0)"/><stop offset="0.3411" stop-color="rgb(110,0,0)"/><stop offset="0.3742" stop-color="rgb(111,0,0)"/><stop offset="0.3874" stop-color="rgb(114,0,0)"/><stop offset="0.3940" stop-color="rgb(117,0,0)"/><stop offset="0.4139" stop-color="rgb(130,0,0)"/><stop offset="0.4272" stop-color="rgb(136,0,0)"/><stop offset="0.4404" stop-color="rgb(139,0,0)"/><stop offset="0.4470" stop-color="rgb(139,0,0)"/><stop offset="0.4603" stop-color="rgb(135,0,0)"/><stop offset="0.4735" stop-color="rgb(128,0,0)"/><stop offset="0.4868" stop-color="rgb(119,0,0)"/><stop offset="0.4934" stop-color="rgb(116,0,0)"/><stop offset="0.5000" stop-color="rgb(113,0,0)"/><stop offset="0.5066" stop-color="rgb(112,0,0)"/><stop offset="0.5199" stop-color="rgb(112,0,0)"/><stop offset="0.5331" stop-color="rgb(114,0,0)"/><stop offset="0.5397" stop-color="rgb(116,0,0)"/><stop offset="0.5530" stop-color="rgb(123,0,0)"/><stop offset="0.5662" stop-color="rgb(134,0,0)"/><stop offset="0.5861" stop-color="rgb(156,0,0)"/><stop offset="0.5993" stop-color="rgb(167,0,0)"/><stop offset="0.6126" stop-color="rgb(175,0,0)"/><stop offset="0.6258" stop-color="rgb(178,0,0)"/><stop offset="0.6391" stop-color="rgb(176,0,0)"/><stop offset="0.6457" stop-color="rgb(173,0,0)"/><stop offset="0.6589" stop-color="rgb(164,0,0)"/><stop offset="0.6722" stop-color="rgb(152,0,0)"/><stop offset="0.6921" stop-color="rgb(130,0,0)"/><stop offset="0.7053" stop-color="rgb(116,0,0)"/><stop offset="0.7119" stop-color="rgb(110,0,0)"/><stop offset="0.7252" stop-color="rgb(101,0,0)"/><stop offset="0.7384" stop-color="rgb(94,0,0)"/><stop offset="0.7450" stop-color="rgb(92,0,0)"/><stop offset="0.7583" stop-color="rgb(90,1,0)"/><stop offset="0.7649" stop-color="rgb(90,30,0)"/><stop offset="0.7715" stop-color="rgb(89,55,0)"/><stop offset="0.7781" stop-color="rgb(89,74,0)"/><stop offset="0.7914" stop-color="rgb(87,104,0)"/><stop offset="0.7980" stop-color="rgb(86,111,0)"/><stop offset="0.8046" stop-color="rgb(84,111,0)"/><stop offset="0.8113" stop-color="rgb(82,104,0)"/><stop offset="0.8245" stop-color="rgb(80,74,0)"/><stop offset="0.8311" stop-color="rgb(80,55,0)"/><stop offset="0.8377" stop-color="rgb(80,30,0)"/><stop offset="0.8444" stop-color="rgb(80,1,0)"/><stop offset="0.8576" stop-color="rgb(79,0,0)"/><stop offset="0.8775" stop-color="rgb(72,0,0)"/><stop offset="0.8907" stop-color="rgb(69,0,0)"/><stop offset="0.9967" stop-color="rgb(69,0,0)"/></linearGradient>
<linearGradient id="gM13" gradientUnits="userSpaceOnUse" x1="0" y1="780" x2="0" y2="931"><stop offset="0.0033" stop-color="rgb(105,0,0)"/><stop offset="0.0430" stop-color="rgb(111,0,0)"/><stop offset="0.2020" stop-color="rgb(111,0,0)"/><stop offset="0.2219" stop-color="rgb(113,0,0)"/><stop offset="0.2483" stop-color="rgb(118,0,0)"/><stop offset="0.2616" stop-color="rgb(120,0,0)"/><stop offset="0.2815" stop-color="rgb(118,0,0)"/><stop offset="0.3079" stop-color="rgb(113,0,0)"/><stop offset="0.3212" stop-color="rgb(111,0,0)"/><stop offset="0.3477" stop-color="rgb(110,0,0)"/><stop offset="0.3742" stop-color="rgb(111,0,0)"/><stop offset="0.3874" stop-color="rgb(113,0,0)"/><stop offset="0.3940" stop-color="rgb(116,0,0)"/><stop offset="0.4205" stop-color="rgb(133,0,0)"/><stop offset="0.4338" stop-color="rgb(138,0,0)"/><stop offset="0.4404" stop-color="rgb(139,0,0)"/><stop offset="0.4470" stop-color="rgb(139,0,0)"/><stop offset="0.4603" stop-color="rgb(135,0,0)"/><stop offset="0.4669" stop-color="rgb(132,0,0)"/><stop offset="0.4934" stop-color="rgb(116,0,0)"/><stop offset="0.5000" stop-color="rgb(113,0,0)"/><stop offset="0.5066" stop-color="rgb(112,0,0)"/><stop offset="0.5199" stop-color="rgb(113,0,0)"/><stop offset="0.5331" stop-color="rgb(116,0,0)"/><stop offset="0.5464" stop-color="rgb(122,0,0)"/><stop offset="0.5596" stop-color="rgb(133,0,0)"/><stop offset="0.5795" stop-color="rgb(155,0,0)"/><stop offset="0.5927" stop-color="rgb(166,0,0)"/><stop offset="0.6060" stop-color="rgb(174,0,0)"/><stop offset="0.6192" stop-color="rgb(177,0,0)"/><stop offset="0.6325" stop-color="rgb(175,0,0)"/><stop offset="0.6391" stop-color="rgb(172,0,0)"/><stop offset="0.6523" stop-color="rgb(164,0,0)"/><stop offset="0.6656" stop-color="rgb(151,0,0)"/><stop offset="0.6987" stop-color="rgb(116,0,0)"/><stop offset="0.7053" stop-color="rgb(110,0,0)"/><stop offset="0.7185" stop-color="rgb(100,0,0)"/><stop offset="0.7318" stop-color="rgb(94,0,0)"/><stop offset="0.7384" stop-color="rgb(92,0,0)"/><stop offset="0.7583" stop-color="rgb(89,1,0)"/><stop offset="0.7649" stop-color="rgb(89,30,0)"/><stop offset="0.7715" stop-color="rgb(89,55,0)"/><stop offset="0.7781" stop-color="rgb(89,74,0)"/><stop offset="0.7914" stop-color="rgb(87,104,0)"/><stop offset="0.7980" stop-color="rgb(86,111,0)"/><stop offset="0.8046" stop-color="rgb(84,111,0)"/><stop offset="0.8113" stop-color="rgb(82,104,0)"/><stop offset="0.8245" stop-color="rgb(80,74,0)"/><stop offset="0.8311" stop-color="rgb(80,55,0)"/><stop offset="0.8377" stop-color="rgb(80,30,0)"/><stop offset="0.8444" stop-color="rgb(80,1,0)"/><stop offset="0.8576" stop-color="rgb(79,0,0)"/><stop offset="0.8775" stop-color="rgb(72,0,0)"/><stop offset="0.8907" stop-color="rgb(69,0,0)"/><stop offset="0.9967" stop-color="rgb(69,0,0)"/></linearGradient>
<linearGradient id="gM14" gradientUnits="userSpaceOnUse" x1="0" y1="780" x2="0" y2="931"><stop offset="0.0033" stop-color="rgb(105,0,0)"/><stop offset="0.0430" stop-color="rgb(111,0,0)"/><stop offset="0.2086" stop-color="rgb(111,0,0)"/><stop offset="0.2285" stop-color="rgb(113,0,0)"/><stop offset="0.2550" stop-color="rgb(118,0,0)"/><stop offset="0.2682" stop-color="rgb(119,0,0)"/><stop offset="0.2881" stop-color="rgb(118,0,0)"/><stop offset="0.3146" stop-color="rgb(113,0,0)"/><stop offset="0.3278" stop-color="rgb(111,0,0)"/><stop offset="0.3742" stop-color="rgb(111,0,0)"/><stop offset="0.3874" stop-color="rgb(113,0,0)"/><stop offset="0.3940" stop-color="rgb(116,0,0)"/><stop offset="0.4205" stop-color="rgb(133,0,0)"/><stop offset="0.4338" stop-color="rgb(138,0,0)"/><stop offset="0.4404" stop-color="rgb(139,0,0)"/><stop offset="0.4470" stop-color="rgb(139,0,0)"/><stop offset="0.4603" stop-color="rgb(136,0,0)"/><stop offset="0.4735" stop-color="rgb(129,0,0)"/><stop offset="0.4934" stop-color="rgb(116,0,0)"/><stop offset="0.5000" stop-color="rgb(114,0,0)"/><stop offset="0.5132" stop-color="rgb(113,0,0)"/><stop offset="0.5265" stop-color="rgb(116,0,0)"/><stop offset="0.5397" stop-color="rgb(122,0,0)"/><stop offset="0.5530" stop-color="rgb(133,0,0)"/><stop offset="0.5728" stop-color="rgb(154,0,0)"/><stop offset="0.5861" stop-color="rgb(165,0,0)"/><stop offset="0.5993" stop-color="rgb(173,0,0)"/><stop offset="0.6126" stop-color="rgb(176,0,0)"/><stop offset="0.6258" stop-color="rgb(175,0,0)"/><stop offset="0.6325" stop-color="rgb(172,0,0)"/><stop offset="0.6457" stop-color="rgb(163,0,0)"/><stop offset="0.6589" stop-color="rgb(151,0,0)"/><stop offset="0.6921" stop-color="rgb(116,0,0)"/><stop offset="0.6987" stop-color="rgb(110,0,0)"/><stop offset="0.7119" stop-color="rgb(100,0,0)"/><stop offset="0.7252" stop-color="rgb(94,0,0)"/><stop offset="0.7318" stop-color="rgb(92,0,0)"/><stop offset="0.7450" stop-color="rgb(90,0,0)"/><stop offset="0.7583" stop-color="rgb(89,1,0)"/><stop offset="0.7649" stop-color="rgb(89,30,0)"/><stop offset="0.7715" stop-color="rgb(89,55,0)"/><stop offset="0.7781" stop-color="rgb(89,74,0)"/><stop offset="0.7914" stop-color="rgb(87,104,0)"/><stop offset="0.7980" stop-color="rgb(86,111,0)"/><stop offset="0.8046" stop-color="rgb(84,111,0)"/><stop offset="0.8113" stop-color="rgb(82,104,0)"/><stop offset="0.8245" stop-color="rgb(80,74,0)"/><stop offset="0.8311" stop-color="rgb(80,55,0)"/><stop offset="0.8377" stop-color="rgb(80,30,0)"/><stop offset="0.8444" stop-color="rgb(80,1,0)"/><stop offset="0.8576" stop-color="rgb(79,0,0)"/><stop offset="0.8775" stop-color="rgb(72,0,0)"/><stop offset="0.8907" stop-color="rgb(69,0,0)"/><stop offset="0.9967" stop-color="rgb(69,0,0)"/></linearGradient>
<linearGradient id="gM15" gradientUnits="userSpaceOnUse" x1="0" y1="780" x2="0" y2="931"><stop offset="0.0033" stop-color="rgb(105,0,0)"/><stop offset="0.0298" stop-color="rgb(109,0,0)"/><stop offset="0.0497" stop-color="rgb(111,0,0)"/><stop offset="0.2152" stop-color="rgb(111,0,0)"/><stop offset="0.2351" stop-color="rgb(113,0,0)"/><stop offset="0.2616" stop-color="rgb(118,0,0)"/><stop offset="0.2748" stop-color="rgb(119,0,0)"/><stop offset="0.2947" stop-color="rgb(118,0,0)"/><stop offset="0.3212" stop-color="rgb(113,0,0)"/><stop offset="0.3344" stop-color="rgb(111,0,0)"/><stop offset="0.3742" stop-color="rgb(111,0,0)"/><stop offset="0.3874" stop-color="rgb(113,0,0)"/><stop offset="0.3940" stop-color="rgb(116,0,0)"/><stop offset="0.4205" stop-color="rgb(132,0,0)"/><stop offset="0.4338" stop-color="rgb(138,0,0)"/><stop offset="0.4404" stop-color="rgb(139,0,0)"/><stop offset="0.4470" stop-color="rgb(139,0,0)"/><stop offset="0.4603" stop-color="rgb(136,0,0)"/><stop offset="0.4735" stop-color="rgb(129,0,0)"/><stop offset="0.4934" stop-color="rgb(117,0,0)"/><stop offset="0.5000" stop-color="rgb(114,0,0)"/><stop offset="0.5066" stop-color="rgb(114,0,0)"/><stop offset="0.5132" stop-color="rgb(114,0,0)"/><stop offset="0.5265" stop-color="rgb(118,0,0)"/><stop offset="0.5397" stop-color="rgb(126,0,0)"/><stop offset="0.5464" stop-color="rgb(132,0,0)"/><stop offset="0.5728" stop-color="rgb(159,0,0)"/><stop offset="0.5861" stop-color="rgb(169,0,0)"/><stop offset="0.5993" stop-color="rgb(174,0,0)"/><stop offset="0.6060" stop-color="rgb(175,0,0)"/><stop offset="0.6192" stop-color="rgb(174,0,0)"/><stop offset="0.6258" stop-color="rgb(171,0,0)"/><stop offset="0.6391" stop-color="rgb(163,0,0)"/><stop offset="0.6523" stop-color="rgb(151,0,0)"/><stop offset="0.6788" stop-color="rgb(123,0,0)"/><stop offset="0.6921" stop-color="rgb(110,0,0)"/><stop offset="0.6987" stop-color="rgb(105,0,0)"/><stop offset="0.7119" stop-color="rgb(96,0,0)"/><stop offset="0.7185" stop-color="rgb(93,0,0)"/><stop offset="0.7318" stop-color="rgb(90,0,0)"/><stop offset="0.7583" stop-color="rgb(89,1,0)"/><stop offset="0.7649" stop-color="rgb(89,30,0)"/><stop offset="0.7715" stop-color="rgb(89,55,0)"/><stop offset="0.7781" stop-color="rgb(89,74,0)"/><stop offset="0.7914" stop-color="rgb(87,104,0)"/><stop offset="0.7980" stop-color="rgb(86,111,0)"/><stop offset="0.8046" stop-color="rgb(84,111,0)"/><stop offset="0.8113" stop-color="rgb(82,104,0)"/><stop offset="0.8245" stop-color="rgb(80,74,0)"/><stop offset="0.8311" stop-color="rgb(80,55,0)"/><stop offset="0.8377" stop-color="rgb(80,30,0)"/><stop offset="0.8444" stop-color="rgb(80,1,0)"/><stop offset="0.8576" stop-color="rgb(79,0,0)"/><stop offset="0.8775" stop-color="rgb(72,0,0)"/><stop offset="0.8907" stop-color="rgb(69,0,0)"/><stop offset="0.9967" stop-color="rgb(69,0,0)"/></linearGradient>
<linearGradient id="gM16" gradientUnits="userSpaceOnUse" x1="0" y1="780" x2="0" y2="931"><stop offset="0.0033" stop-color="rgb(105,0,0)"/><stop offset="0.0298" stop-color="rgb(109,0,0)"/><stop offset="0.0497" stop-color="rgb(111,0,0)"/><stop offset="0.2219" stop-color="rgb(111,0,0)"/><stop offset="0.2417" stop-color="rgb(113,0,0)"/><stop offset="0.2682" stop-color="rgb(118,0,0)"/><stop offset="0.2815" stop-color="rgb(119,0,0)"/><stop offset="0.3013" stop-color="rgb(118,0,0)"/><stop offset="0.3278" stop-color="rgb(113,0,0)"/><stop offset="0.3411" stop-color="rgb(111,0,0)"/><stop offset="0.3742" stop-color="rgb(111,0,0)"/><stop offset="0.3874" stop-color="rgb(113,0,0)"/><stop offset="0.3940" stop-color="rgb(115,0,0)"/><stop offset="0.4205" stop-color="rgb(132,0,0)"/><stop offset="0.4338" stop-color="rgb(137,0,0)"/><stop offset="0.4404" stop-color="rgb(138,0,0)"/><stop offset="0.4470" stop-color="rgb(139,0,0)"/><stop offset="0.4603" stop-color="rgb(136,0,0)"/><stop offset="0.4669" stop-color="rgb(133,0,0)"/><stop offset="0.4934" stop-color="rgb(117,0,0)"/><stop offset="0.5000" stop-color="rgb(115,0,0)"/><stop offset="0.5066" stop-color="rgb(115,0,0)"/><stop offset="0.5199" stop-color="rgb(117,0,0)"/><stop offset="0.5331" stop-color="rgb(124,0,0)"/><stop offset="0.5397" stop-color="rgb(129,0,0)"/><stop offset="0.5662" stop-color="rgb(155,0,0)"/><stop offset="0.5795" stop-color="rgb(164,0,0)"/><stop offset="0.5927" stop-color="rgb(170,0,0)"/><stop offset="0.6060" stop-color="rgb(171,0,0)"/><stop offset="0.6192" stop-color="rgb(168,0,0)"/><stop offset="0.6325" stop-color="rgb(162,0,0)"/><stop offset="0.6457" stop-color="rgb(151,0,0)"/><stop offset="0.6854" stop-color="rgb(111,0,0)"/><stop offset="0.6921" stop-color="rgb(106,0,0)"/><stop offset="0.7053" stop-color="rgb(98,0,0)"/><stop offset="0.7119" stop-color="rgb(95,0,0)"/><stop offset="0.7252" stop-color="rgb(91,0,0)"/><stop offset="0.7384" stop-color="rgb(90,0,0)"/><stop offset="0.7583" stop-color="rgb(89,1,0)"/><stop offset="0.7649" stop-color="rgb(89,30,0)"/><stop offset="0.7715" stop-color="rgb(89,55,0)"/><stop offset="0.7781" stop-color="rgb(89,74,0)"/><stop offset="0.7914" stop-color="rgb(87,104,0)"/><stop offset="0.7980" stop-color="rgb(86,111,0)"/><stop offset="0.8046" stop-color="rgb(84,111,0)"/><stop offset="0.8113" stop-color="rgb(82,104,0)"/><stop offset="0.8245" stop-color="rgb(80,74,0)"/><stop offset="0.8311" stop-color="rgb(80,55,0)"/><stop offset="0.8377" stop-color="rgb(80,30,0)"/><stop offset="0.8444" stop-color="rgb(80,1,0)"/><stop offset="0.8576" stop-color="rgb(79,0,0)"/><stop offset="0.8775" stop-color="rgb(72,0,0)"/><stop offset="0.8907" stop-color="rgb(69,0,0)"/><stop offset="0.9967" stop-color="rgb(69,0,0)"/></linearGradient>
<linearGradient id="gM17" gradientUnits="userSpaceOnUse" x1="0" y1="780" x2="0" y2="931"><stop offset="0.0033" stop-color="rgb(105,0,0)"/><stop offset="0.0298" stop-color="rgb(109,0,0)"/><stop offset="0.0497" stop-color="rgb(111,0,0)"/><stop offset="0.2285" stop-color="rgb(111,0,0)"/><stop offset="0.2417" stop-color="rgb(112,0,0)"/><stop offset="0.2748" stop-color="rgb(118,0,0)"/><stop offset="0.2881" stop-color="rgb(119,0,0)"/><stop offset="0.3079" stop-color="rgb(117,0,0)"/><stop offset="0.3411" stop-color="rgb(112,0,0)"/><stop offset="0.3742" stop-color="rgb(111,0,0)"/><stop offset="0.3874" stop-color="rgb(113,0,0)"/><stop offset="0.3940" stop-color="rgb(115,0,0)"/><stop offset="0.4205" stop-color="rgb(131,0,0)"/><stop offset="0.4272" stop-color="rgb(135,0,0)"/><stop offset="0.4404" stop-color="rgb(138,0,0)"/><stop offset="0.4470" stop-color="rgb(138,0,0)"/><stop offset="0.4536" stop-color="rgb(137,0,0)"/><stop offset="0.4669" stop-color="rgb(133,0,0)"/><stop offset="0.4934" stop-color="rgb(118,0,0)"/><stop offset="0.5000" stop-color="rgb(116,0,0)"/><stop offset="0.5066" stop-color="rgb(116,0,0)"/><stop offset="0.5199" stop-color="rgb(119,0,0)"/><stop offset="0.5265" stop-color="rgb(122,0,0)"/><stop offset="0.5397" stop-color="rgb(131,0,0)"/><stop offset="0.5596" stop-color="rgb(148,0,0)"/><stop offset="0.5728" stop-color="rgb(157,0,0)"/><stop offset="0.5861" stop-color="rgb(163,0,0)"/><stop offset="0.5993" stop-color="rgb(165,0,0)"/><stop offset="0.6126" stop-color="rgb(163,0,0)"/><stop offset="0.6192" stop-color="rgb(161,0,0)"/><stop offset="0.6325" stop-color="rgb(154,0,0)"/><stop offset="0.6523" stop-color="rgb(139,0,0)"/><stop offset="0.6788" stop-color="rgb(113,0,0)"/><stop offset="0.6854" stop-color="rgb(108,0,0)"/><stop offset="0.6987" stop-color="rgb(100,0,0)"/><stop offset="0.7119" stop-color="rgb(94,0,0)"/><stop offset="0.7252" stop-color="rgb(91,0,0)"/><stop offset="0.7583" stop-color="rgb(89,1,0)"/><stop offset="0.7649" stop-color="rgb(89,30,0)"/><stop offset="0.7715" stop-color="rgb(89,55,0)"/><stop offset="0.7781" stop-color="rgb(89,74,0)"/><stop offset="0.7914" stop-color="rgb(87,104,0)"/><stop offset="0.7980" stop-color="rgb(86,111,0)"/><stop offset="0.8046" stop-color="rgb(84,111,0)"/><stop offset="0.8113" stop-color="rgb(82,104,0)"/><stop offset="0.8245" stop-color="rgb(80,74,0)"/><stop offset="0.8311" stop-color="rgb(80,55,0)"/><stop offset="0.8377" stop-color="rgb(80,30,0)"/><stop offset="0.8444" stop-color="rgb(80,1,0)"/><stop offset="0.8576" stop-color="rgb(79,0,0)"/><stop offset="0.8775" stop-color="rgb(72,0,0)"/><stop offset="0.8907" stop-color="rgb(69,0,0)"/><stop offset="0.9967" stop-color="rgb(69,0,0)"/></linearGradient>
<linearGradient id="gM18" gradientUnits="userSpaceOnUse" x1="0" y1="780" x2="0" y2="931"><stop offset="0.0033" stop-color="rgb(105,0,0)"/><stop offset="0.0298" stop-color="rgb(109,0,0)"/><stop offset="0.0497" stop-color="rgb(111,0,0)"/><stop offset="0.2351" stop-color="rgb(111,0,0)"/><stop offset="0.2483" stop-color="rgb(112,0,0)"/><stop offset="0.2815" stop-color="rgb(117,0,0)"/><stop offset="0.2947" stop-color="rgb(119,0,0)"/><stop offset="0.3146" stop-color="rgb(117,0,0)"/><stop offset="0.3477" stop-color="rgb(112,0,0)"/><stop offset="0.3742" stop-color="rgb(111,0,0)"/><stop offset="0.3874" stop-color="rgb(113,0,0)"/><stop offset="0.3940" stop-color="rgb(115,0,0)"/><stop offset="0.4272" stop-color="rgb(134,0,0)"/><stop offset="0.4404" stop-color="rgb(138,0,0)"/><stop offset="0.4470" stop-color="rgb(138,0,0)"/><stop offset="0.4536" stop-color="rgb(137,0,0)"/><stop offset="0.4669" stop-color="rgb(133,0,0)"/><stop offset="0.4934" stop-color="rgb(119,0,0)"/><stop offset="0.5000" stop-color="rgb(118,0,0)"/><stop offset="0.5066" stop-color="rgb(117,0,0)"/><stop offset="0.5132" stop-color="rgb(119,0,0)"/><stop offset="0.5265" stop-color="rgb(124,0,0)"/><stop offset="0.5596" stop-color="rgb(148,0,0)"/><stop offset="0.5728" stop-color="rgb(155,0,0)"/><stop offset="0.5861" stop-color="rgb(160,0,0)"/><stop offset="0.5993" stop-color="rgb(161,0,0)"/><stop offset="0.6126" stop-color="rgb(159,0,0)"/><stop offset="0.6192" stop-color="rgb(157,0,0)"/><stop offset="0.6325" stop-color="rgb(151,0,0)"/><stop offset="0.6523" stop-color="rgb(137,0,0)"/><stop offset="0.6788" stop-color="rgb(113,0,0)"/><stop offset="0.6854" stop-color="rgb(108,0,0)"/><stop offset="0.6987" stop-color="rgb(100,0,0)"/><stop offset="0.7119" stop-color="rgb(95,0,0)"/><stop offset="0.7252" stop-color="rgb(92,0,0)"/><stop offset="0.7384" stop-color="rgb(90,0,0)"/><stop offset="0.7583" stop-color="rgb(89,1,0)"/><stop offset="0.7649" stop-color="rgb(89,30,0)"/><stop offset="0.7715" stop-color="rgb(89,55,0)"/><stop offset="0.7781" stop-color="rgb(89,74,0)"/><stop offset="0.7914" stop-color="rgb(87,104,0)"/><stop offset="0.7980" stop-color="rgb(86,111,0)"/><stop offset="0.8046" stop-color="rgb(84,111,0)"/><stop offset="0.8113" stop-color="rgb(82,104,0)"/><stop offset="0.8245" stop-color="rgb(80,74,0)"/><stop offset="0.8311" stop-color="rgb(80,55,0)"/><stop offset="0.8377" stop-color="rgb(80,30,0)"/><stop offset="0.8444" stop-color="rgb(80,1,0)"/><stop offset="0.8576" stop-color="rgb(79,0,0)"/><stop offset="0.8775" stop-color="rgb(72,0,0)"/><stop offset="0.8907" stop-color="rgb(69,0,0)"/><stop offset="0.9967" stop-color="rgb(69,0,0)"/></linearGradient>
<linearGradient id="gM19" gradientUnits="userSpaceOnUse" x1="0" y1="780" x2="0" y2="931"><stop offset="0.0033" stop-color="rgb(105,0,0)"/><stop offset="0.0298" stop-color="rgb(109,0,0)"/><stop offset="0.0497" stop-color="rgb(111,0,0)"/><stop offset="0.2417" stop-color="rgb(111,0,0)"/><stop offset="0.2550" stop-color="rgb(112,0,0)"/><stop offset="0.2881" stop-color="rgb(117,0,0)"/><stop offset="0.3013" stop-color="rgb(118,0,0)"/><stop offset="0.3146" stop-color="rgb(118,0,0)"/><stop offset="0.3543" stop-color="rgb(112,0,0)"/><stop offset="0.3808" stop-color="rgb(111,0,0)"/><stop offset="0.3940" stop-color="rgb(114,0,0)"/><stop offset="0.4272" stop-color="rgb(133,0,0)"/><stop offset="0.4404" stop-color="rgb(137,0,0)"/><stop offset="0.4470" stop-color="rgb(138,0,0)"/><stop offset="0.4603" stop-color="rgb(135,0,0)"/><stop offset="0.4934" stop-color="rgb(120,0,0)"/><stop offset="0.5000" stop-color="rgb(119,0,0)"/><stop offset="0.5066" stop-color="rgb(119,0,0)"/><stop offset="0.5132" stop-color="rgb(121,0,0)"/><stop offset="0.5265" stop-color="rgb(126,0,0)"/><stop offset="0.5596" stop-color="rgb(147,0,0)"/><stop offset="0.5728" stop-color="rgb(154,0,0)"/><stop offset="0.5861" stop-color="rgb(157,0,0)"/><stop offset="0.5993" stop-color="rgb(158,0,0)"/><stop offset="0.6126" stop-color="rgb(157,0,0)"/><stop offset="0.6192" stop-color="rgb(155,0,0)"/><stop offset="0.6325" stop-color="rgb(149,0,0)"/><stop offset="0.6523" stop-color="rgb(136,0,0)"/><stop offset="0.6854" stop-color="rgb(108,0,0)"/><stop offset="0.6921" stop-color="rgb(104,0,0)"/><stop offset="0.7053" stop-color="rgb(98,0,0)"/><stop offset="0.7252" stop-color="rgb(92,0,0)"/><stop offset="0.7384" stop-color="rgb(90,0,0)"/><stop offset="0.7583" stop-color="rgb(89,1,0)"/><stop offset="0.7649" stop-color="rgb(89,30,0)"/><stop offset="0.7715" stop-color="rgb(89,55,0)"/><stop offset="0.7781" stop-color="rgb(89,74,0)"/><stop offset="0.7914" stop-color="rgb(87,104,0)"/><stop offset="0.7980" stop-color="rgb(86,111,0)"/><stop offset="0.8046" stop-color="rgb(84,111,0)"/><stop offset="0.8113" stop-color="rgb(82,104,0)"/><stop offset="0.8245" stop-color="rgb(80,74,0)"/><stop offset="0.8311" stop-color="rgb(80,55,0)"/><stop offset="0.8377" stop-color="rgb(80,30,0)"/><stop offset="0.8444" stop-color="rgb(80,1,0)"/><stop offset="0.8576" stop-color="rgb(79,0,0)"/><stop offset="0.8775" stop-color="rgb(72,0,0)"/><stop offset="0.8907" stop-color="rgb(69,0,0)"/><stop offset="0.9967" stop-color="rgb(69,0,0)"/></linearGradient>
<linearGradient id="gM20" gradientUnits="userSpaceOnUse" x1="0" y1="780" x2="0" y2="931"><stop offset="0.0033" stop-color="rgb(105,0,0)"/><stop offset="0.0298" stop-color="rgb(109,0,0)"/><stop offset="0.0497" stop-color="rgb(111,0,0)"/><stop offset="0.2483" stop-color="rgb(111,0,0)"/><stop offset="0.2616" stop-color="rgb(112,0,0)"/><stop offset="0.2947" stop-color="rgb(117,0,0)"/><stop offset="0.3079" stop-color="rgb(118,0,0)"/><stop offset="0.3212" stop-color="rgb(118,0,0)"/><stop offset="0.3609" stop-color="rgb(112,0,0)"/><stop offset="0.3808" stop-color="rgb(111,0,0)"/><stop offset="0.3940" stop-color="rgb(114,0,0)"/><stop offset="0.4007" stop-color="rgb(117,0,0)"/><stop offset="0.4272" stop-color="rgb(133,0,0)"/><stop offset="0.4404" stop-color="rgb(137,0,0)"/><stop offset="0.4470" stop-color="rgb(137,0,0)"/><stop offset="0.4603" stop-color="rgb(135,0,0)"/><stop offset="0.4868" stop-color="rgb(124,0,0)"/><stop offset="0.4934" stop-color="rgb(122,0,0)"/><stop offset="0.5066" stop-color="rgb(122,0,0)"/><stop offset="0.5132" stop-color="rgb(123,0,0)"/><stop offset="0.5265" stop-color="rgb(128,0,0)"/><stop offset="0.5530" stop-color="rgb(143,0,0)"/><stop offset="0.5662" stop-color="rgb(150,0,0)"/><stop offset="0.5861" stop-color="rgb(155,0,0)"/><stop offset="0.5993" stop-color="rgb(156,0,0)"/><stop offset="0.6060" stop-color="rgb(155,0,0)"/><stop offset="0.6192" stop-color="rgb(152,0,0)"/><stop offset="0.6391" stop-color="rgb(144,0,0)"/><stop offset="0.6589" stop-color="rgb(130,0,0)"/><stop offset="0.6854" stop-color="rgb(109,0,0)"/><stop offset="0.6921" stop-color="rgb(105,0,0)"/><stop offset="0.7053" stop-color="rgb(99,0,0)"/><stop offset="0.7185" stop-color="rgb(94,0,0)"/><stop offset="0.7318" stop-color="rgb(92,0,0)"/><stop offset="0.7583" stop-color="rgb(90,1,0)"/><stop offset="0.7649" stop-color="rgb(89,30,0)"/><stop offset="0.7715" stop-color="rgb(89,55,0)"/><stop offset="0.7781" stop-color="rgb(89,74,0)"/><stop offset="0.7914" stop-color="rgb(87,104,0)"/><stop offset="0.7980" stop-color="rgb(86,111,0)"/><stop offset="0.8046" stop-color="rgb(84,111,0)"/><stop offset="0.8113" stop-color="rgb(82,104,0)"/><stop offset="0.8245" stop-color="rgb(80,74,0)"/><stop offset="0.8311" stop-color="rgb(80,55,0)"/><stop offset="0.8377" stop-color="rgb(80,30,0)"/><stop offset="0.8444" stop-color="rgb(80,1,0)"/><stop offset="0.8576" stop-color="rgb(79,0,0)"/><stop offset="0.8775" stop-color="rgb(72,0,0)"/><stop offset="0.8907" stop-color="rgb(69,0,0)"/><stop offset="0.9967" stop-color="rgb(69,0,0)"/></linearGradient>
<linearGradient id="gM21" gradientUnits="userSpaceOnUse" x1="0" y1="780" x2="0" y2="931"><stop offset="0.0033" stop-color="rgb(105,0,0)"/><stop offset="0.0298" stop-color="rgb(109,0,0)"/><stop offset="0.0497" stop-color="rgb(111,0,0)"/><stop offset="0.2550" stop-color="rgb(111,0,0)"/><stop offset="0.2682" stop-color="rgb(112,0,0)"/><stop offset="0.3013" stop-color="rgb(117,0,0)"/><stop offset="0.3146" stop-color="rgb(118,0,0)"/><stop offset="0.3278" stop-color="rgb(117,0,0)"/><stop offset="0.3609" stop-color="rgb(112,0,0)"/><stop offset="0.3808" stop-color="rgb(112,0,0)"/><stop offset="0.3940" stop-color="rgb(114,0,0)"/><stop offset="0.4007" stop-color="rgb(117,0,0)"/><stop offset="0.4272" stop-color="rgb(132,0,0)"/><stop offset="0.4404" stop-color="rgb(136,0,0)"/><stop offset="0.4536" stop-color="rgb(137,0,0)"/><stop offset="0.4669" stop-color="rgb(133,0,0)"/><stop offset="0.4868" stop-color="rgb(125,0,0)"/><stop offset="0.4934" stop-color="rgb(124,0,0)"/><stop offset="0.5066" stop-color="rgb(124,0,0)"/><stop offset="0.5132" stop-color="rgb(125,0,0)"/><stop offset="0.5265" stop-color="rgb(130,0,0)"/><stop offset="0.5530" stop-color="rgb(143,0,0)"/><stop offset="0.5662" stop-color="rgb(149,0,0)"/><stop offset="0.5861" stop-color="rgb(153,0,0)"/><stop offset="0.5993" stop-color="rgb(154,0,0)"/><stop offset="0.6192" stop-color="rgb(151,0,0)"/><stop offset="0.6391" stop-color="rgb(142,0,0)"/><stop offset="0.6523" stop-color="rgb(135,0,0)"/><stop offset="0.6854" stop-color="rgb(109,0,0)"/><stop offset="0.7053" stop-color="rgb(99,0,0)"/><stop offset="0.7185" stop-color="rgb(95,0,0)"/><stop offset="0.7318" stop-color="rgb(92,0,0)"/><stop offset="0.7583" stop-color="rgb(90,1,0)"/><stop offset="0.7649" stop-color="rgb(90,30,0)"/><stop offset="0.7715" stop-color="rgb(89,55,0)"/><stop offset="0.7781" stop-color="rgb(89,74,0)"/><stop offset="0.7914" stop-color="rgb(87,104,0)"/><stop offset="0.7980" stop-color="rgb(86,111,0)"/><stop offset="0.8046" stop-color="rgb(84,111,0)"/><stop offset="0.8113" stop-color="rgb(82,104,0)"/><stop offset="0.8245" stop-color="rgb(80,74,0)"/><stop offset="0.8311" stop-color="rgb(80,55,0)"/><stop offset="0.8377" stop-color="rgb(80,30,0)"/><stop offset="0.8444" stop-color="rgb(80,1,0)"/><stop offset="0.8576" stop-color="rgb(79,0,0)"/><stop offset="0.8775" stop-color="rgb(72,0,0)"/><stop offset="0.8907" stop-color="rgb(69,0,0)"/><stop offset="0.9967" stop-color="rgb(69,0,0)"/></linearGradient>
<linearGradient id="gM22" gradientUnits="userSpaceOnUse" x1="0" y1="780" x2="0" y2="931"><stop offset="0.0033" stop-color="rgb(105,0,0)"/><stop offset="0.0298" stop-color="rgb(109,0,0)"/><stop offset="0.0497" stop-color="rgb(111,0,0)"/><stop offset="0.2616" stop-color="rgb(111,0,0)"/><stop offset="0.2748" stop-color="rgb(112,0,0)"/><stop offset="0.3079" stop-color="rgb(117,0,0)"/><stop offset="0.3212" stop-color="rgb(118,0,0)"/><stop offset="0.3344" stop-color="rgb(117,0,0)"/><stop offset="0.3675" stop-color="rgb(112,0,0)"/><stop offset="0.3808" stop-color="rgb(112,0,0)"/><stop offset="0.3940" stop-color="rgb(114,0,0)"/><stop offset="0.4007" stop-color="rgb(117,0,0)"/><stop offset="0.4272" stop-color="rgb(132,0,0)"/><stop offset="0.4404" stop-color="rgb(136,0,0)"/><stop offset="0.4470" stop-color="rgb(137,0,0)"/><stop offset="0.4603" stop-color="rgb(135,0,0)"/><stop offset="0.4868" stop-color="rgb(125,0,0)"/><stop offset="0.4934" stop-color="rgb(123,0,0)"/><stop offset="0.5066" stop-color="rgb(123,0,0)"/><stop offset="0.5132" stop-color="rgb(125,0,0)"/><stop offset="0.5265" stop-color="rgb(130,0,0)"/><stop offset="0.5530" stop-color="rgb(144,0,0)"/><stop offset="0.5662" stop-color="rgb(149,0,0)"/><stop offset="0.5861" stop-color="rgb(154,0,0)"/><stop offset="0.5993" stop-color="rgb(155,0,0)"/><stop offset="0.6192" stop-color="rgb(151,0,0)"/><stop offset="0.6391" stop-color="rgb(142,0,0)"/><stop offset="0.6523" stop-color="rgb(134,0,0)"/><stop offset="0.6854" stop-color="rgb(109,0,0)"/><stop offset="0.6921" stop-color="rgb(105,0,0)"/><stop offset="0.7053" stop-color="rgb(99,0,0)"/><stop offset="0.7185" stop-color="rgb(94,0,0)"/><stop offset="0.7318" stop-color="rgb(92,0,0)"/><stop offset="0.7583" stop-color="rgb(90,1,0)"/><stop offset="0.7649" stop-color="rgb(90,30,0)"/><stop offset="0.7715" stop-color="rgb(89,55,0)"/><stop offset="0.7781" stop-color="rgb(89,74,0)"/><stop offset="0.7914" stop-color="rgb(87,104,0)"/><stop offset="0.7980" stop-color="rgb(86,111,0)"/><stop offset="0.8046" stop-color="rgb(84,111,0)"/><stop offset="0.8113" stop-color="rgb(82,104,0)"/><stop offset="0.8245" stop-color="rgb(80,74,0)"/><stop offset="0.8311" stop-color="rgb(80,55,0)"/><stop offset="0.8377" stop-color="rgb(80,30,0)"/><stop offset="0.8444" stop-color="rgb(80,1,0)"/><stop offset="0.8576" stop-color="rgb(79,0,0)"/><stop offset="0.8775" stop-color="rgb(72,0,0)"/><stop offset="0.8907" stop-color="rgb(69,0,0)"/><stop offset="0.9967" stop-color="rgb(69,0,0)"/></linearGradient>
<linearGradient id="gM23" gradientUnits="userSpaceOnUse" x1="0" y1="780" x2="0" y2="931"><stop offset="0.0033" stop-color="rgb(105,0,0)"/><stop offset="0.0298" stop-color="rgb(109,0,0)"/><stop offset="0.0497" stop-color="rgb(111,0,0)"/><stop offset="0.2682" stop-color="rgb(111,0,0)"/><stop offset="0.2815" stop-color="rgb(112,0,0)"/><stop offset="0.3146" stop-color="rgb(117,0,0)"/><stop offset="0.3278" stop-color="rgb(118,0,0)"/><stop offset="0.3411" stop-color="rgb(117,0,0)"/><stop offset="0.3675" stop-color="rgb(113,0,0)"/><stop offset="0.3808" stop-color="rgb(112,0,0)"/><stop offset="0.3940" stop-color="rgb(114,0,0)"/><stop offset="0.4007" stop-color="rgb(117,0,0)"/><stop offset="0.4272" stop-color="rgb(132,0,0)"/><stop offset="0.4404" stop-color="rgb(136,0,0)"/><stop offset="0.4470" stop-color="rgb(136,0,0)"/><stop offset="0.4603" stop-color="rgb(134,0,0)"/><stop offset="0.4868" stop-color="rgb(124,0,0)"/><stop offset="0.5000" stop-color="rgb(122,0,0)"/><stop offset="0.5066" stop-color="rgb(123,0,0)"/><stop offset="0.5199" stop-color="rgb(127,0,0)"/><stop offset="0.5530" stop-color="rgb(144,0,0)"/><stop offset="0.5662" stop-color="rgb(150,0,0)"/><stop offset="0.5861" stop-color="rgb(155,0,0)"/><stop offset="0.5993" stop-color="rgb(155,0,0)"/><stop offset="0.6192" stop-color="rgb(151,0,0)"/><stop offset="0.6391" stop-color="rgb(142,0,0)"/><stop offset="0.6523" stop-color="rgb(134,0,0)"/><stop offset="0.6854" stop-color="rgb(108,0,0)"/><stop offset="0.6921" stop-color="rgb(104,0,0)"/><stop offset="0.7053" stop-color="rgb(98,0,0)"/><stop offset="0.7185" stop-color="rgb(94,0,0)"/><stop offset="0.7318" stop-color="rgb(92,0,0)"/><stop offset="0.7583" stop-color="rgb(90,1,0)"/><stop offset="0.7649" stop-color="rgb(89,30,0)"/><stop offset="0.7715" stop-color="rgb(89,55,0)"/><stop offset="0.7781" stop-color="rgb(89,74,0)"/><stop offset="0.7914" stop-color="rgb(87,104,0)"/><stop offset="0.7980" stop-color="rgb(86,111,0)"/><stop offset="0.8046" stop-color="rgb(84,111,0)"/><stop offset="0.8113" stop-color="rgb(82,104,0)"/><stop offset="0.8245" stop-color="rgb(80,74,0)"/><stop offset="0.8311" stop-color="rgb(80,55,0)"/><stop offset="0.8377" stop-color="rgb(80,30,0)"/><stop offset="0.8444" stop-color="rgb(80,1,0)"/><stop offset="0.8576" stop-color="rgb(79,0,0)"/><stop offset="0.8775" stop-color="rgb(72,0,0)"/><stop offset="0.8907" stop-color="rgb(69,0,0)"/><stop offset="0.9967" stop-color="rgb(69,0,0)"/></linearGradient>
<linearGradient id="gM24" gradientUnits="userSpaceOnUse" x1="0" y1="780" x2="0" y2="931"><stop offset="0.0033" stop-color="rgb(105,0,0)"/><stop offset="0.0430" stop-color="rgb(111,0,0)"/><stop offset="0.2682" stop-color="rgb(111,0,0)"/><stop offset="0.2881" stop-color="rgb(112,0,0)"/><stop offset="0.3212" stop-color="rgb(116,0,0)"/><stop offset="0.3344" stop-color="rgb(117,0,0)"/><stop offset="0.3477" stop-color="rgb(117,0,0)"/><stop offset="0.3742" stop-color="rgb(113,0,0)"/><stop offset="0.3874" stop-color="rgb(113,0,0)"/><stop offset="0.3940" stop-color="rgb(115,0,0)"/><stop offset="0.4007" stop-color="rgb(118,0,0)"/><stop offset="0.4272" stop-color="rgb(132,0,0)"/><stop offset="0.4404" stop-color="rgb(135,0,0)"/><stop offset="0.4470" stop-color="rgb(136,0,0)"/><stop offset="0.4603" stop-color="rgb(133,0,0)"/><stop offset="0.4868" stop-color="rgb(123,0,0)"/><stop offset="0.5000" stop-color="rgb(122,0,0)"/><stop offset="0.5066" stop-color="rgb(123,0,0)"/><stop offset="0.5199" stop-color="rgb(127,0,0)"/><stop offset="0.5530" stop-color="rgb(145,0,0)"/><stop offset="0.5662" stop-color="rgb(151,0,0)"/><stop offset="0.5795" stop-color="rgb(154,0,0)"/><stop offset="0.5927" stop-color="rgb(156,0,0)"/><stop offset="0.5993" stop-color="rgb(156,0,0)"/><stop offset="0.6126" stop-color="rgb(154,0,0)"/><stop offset="0.6325" stop-color="rgb(146,0,0)"/><stop offset="0.6523" stop-color="rgb(134,0,0)"/><stop offset="0.6788" stop-color="rgb(112,0,0)"/><stop offset="0.6854" stop-color="rgb(108,0,0)"/><stop offset="0.6921" stop-color="rgb(104,0,0)"/><stop offset="0.7053" stop-color="rgb(98,0,0)"/><stop offset="0.7185" stop-color="rgb(94,0,0)"/><stop offset="0.7318" stop-color="rgb(91,0,0)"/><stop offset="0.7583" stop-color="rgb(90,1,0)"/><stop offset="0.7649" stop-color="rgb(89,30,0)"/><stop offset="0.7715" stop-color="rgb(89,55,0)"/><stop offset="0.7781" stop-color="rgb(89,74,0)"/><stop offset="0.7914" stop-color="rgb(87,104,0)"/><stop offset="0.7980" stop-color="rgb(86,111,0)"/><stop offset="0.8046" stop-color="rgb(84,111,0)"/><stop offset="0.8113" stop-color="rgb(82,104,0)"/><stop offset="0.8245" stop-color="rgb(80,74,0)"/><stop offset="0.8311" stop-color="rgb(80,55,0)"/><stop offset="0.8377" stop-color="rgb(80,30,0)"/><stop offset="0.8444" stop-color="rgb(80,1,0)"/><stop offset="0.8576" stop-color="rgb(79,0,0)"/><stop offset="0.8775" stop-color="rgb(72,0,0)"/><stop offset="0.8907" stop-color="rgb(69,0,0)"/><stop offset="0.9967" stop-color="rgb(69,0,0)"/></linearGradient>
<linearGradient id="gM25" gradientUnits="userSpaceOnUse" x1="0" y1="780" x2="0" y2="931"><stop offset="0.0033" stop-color="rgb(105,0,0)"/><stop offset="0.0298" stop-color="rgb(109,0,0)"/><stop offset="0.0497" stop-color="rgb(111,0,0)"/><stop offset="0.2748" stop-color="rgb(111,0,0)"/><stop offset="0.2947" stop-color="rgb(112,0,0)"/><stop offset="0.3278" stop-color="rgb(116,0,0)"/><stop offset="0.3411" stop-color="rgb(117,0,0)"/><stop offset="0.3543" stop-color="rgb(116,0,0)"/><stop offset="0.3808" stop-color="rgb(113,0,0)"/><stop offset="0.3874" stop-color="rgb(114,0,0)"/><stop offset="0.3940" stop-color="rgb(115,0,0)"/><stop offset="0.4007" stop-color="rgb(118,0,0)"/><stop offset="0.4272" stop-color="rgb(132,0,0)"/><stop offset="0.4404" stop-color="rgb(135,0,0)"/><stop offset="0.4536" stop-color="rgb(134,0,0)"/><stop offset="0.4603" stop-color="rgb(133,0,0)"/><stop offset="0.4868" stop-color="rgb(123,0,0)"/><stop offset="0.5000" stop-color="rgb(122,0,0)"/><stop offset="0.5066" stop-color="rgb(122,0,0)"/><stop offset="0.5199" stop-color="rgb(127,0,0)"/><stop offset="0.5530" stop-color="rgb(145,0,0)"/><stop offset="0.5662" stop-color="rgb(151,0,0)"/><stop offset="0.5795" stop-color="rgb(155,0,0)"/><stop offset="0.5927" stop-color="rgb(157,0,0)"/><stop offset="0.5993" stop-color="rgb(156,0,0)"/><stop offset="0.6126" stop-color="rgb(154,0,0)"/><stop offset="0.6325" stop-color="rgb(146,0,0)"/><stop offset="0.6523" stop-color="rgb(134,0,0)"/><stop offset="0.6722" stop-color="rgb(117,0,0)"/><stop offset="0.6854" stop-color="rgb(107,0,0)"/><stop offset="0.6921" stop-color="rgb(103,0,0)"/><stop offset="0.7053" stop-color="rgb(97,0,0)"/><stop offset="0.7252" stop-color="rgb(92,0,0)"/><stop offset="0.7384" stop-color="rgb(91,0,0)"/><stop offset="0.7583" stop-color="rgb(90,1,0)"/><stop offset="0.7649" stop-color="rgb(89,30,0)"/><stop offset="0.7715" stop-color="rgb(89,55,0)"/><stop offset="0.7781" stop-color="rgb(89,74,0)"/><stop offset="0.7914" stop-color="rgb(87,104,0)"/><stop offset="0.7980" stop-color="rgb(86,111,0)"/><stop offset="0.8046" stop-color="rgb(84,111,0)"/><stop offset="0.8113" stop-color="rgb(82,104,0)"/><stop offset="0.8245" stop-color="rgb(80,74,0)"/><stop offset="0.8311" stop-color="rgb(80,55,0)"/><stop offset="0.8377" stop-color="rgb(80,30,0)"/><stop offset="0.8444" stop-color="rgb(80,1,0)"/><stop offset="0.8576" stop-color="rgb(79,0,0)"/><stop offset="0.8775" stop-color="rgb(72,0,0)"/><stop offset="0.8907" stop-color="rgb(69,0,0)"/><stop offset="0.9967" stop-color="rgb(69,0,0)"/></linearGradient>
<linearGradient id="gM26" gradientUnits="userSpaceOnUse" x1="0" y1="780" x2="0" y2="931"><stop offset="0.0033" stop-color="rgb(105,0,0)"/><stop offset="0.0298" stop-color="rgb(109,0,0)"/><stop offset="0.0497" stop-color="rgb(111,0,0)"/><stop offset="0.2815" stop-color="rgb(111,0,0)"/><stop offset="0.3013" stop-color="rgb(112,0,0)"/><stop offset="0.3344" stop-color="rgb(116,0,0)"/><stop offset="0.3477" stop-color="rgb(117,0,0)"/><stop offset="0.3874" stop-color="rgb(114,0,0)"/><stop offset="0.3940" stop-color="rgb(115,0,0)"/><stop offset="0.4007" stop-color="rgb(118,0,0)"/><stop offset="0.4272" stop-color="rgb(132,0,0)"/><stop offset="0.4404" stop-color="rgb(135,0,0)"/><stop offset="0.4536" stop-color="rgb(134,0,0)"/><stop offset="0.4603" stop-color="rgb(132,0,0)"/><stop offset="0.4868" stop-color="rgb(122,0,0)"/><stop offset="0.5000" stop-color="rgb(121,0,0)"/><stop offset="0.5066" stop-color="rgb(122,0,0)"/><stop offset="0.5199" stop-color="rgb(127,0,0)"/><stop offset="0.5530" stop-color="rgb(146,0,0)"/><stop offset="0.5662" stop-color="rgb(152,0,0)"/><stop offset="0.5795" stop-color="rgb(156,0,0)"/><stop offset="0.5927" stop-color="rgb(157,0,0)"/><stop offset="0.5993" stop-color="rgb(157,0,0)"/><stop offset="0.6126" stop-color="rgb(154,0,0)"/><stop offset="0.6325" stop-color="rgb(146,0,0)"/><stop offset="0.6523" stop-color="rgb(133,0,0)"/><stop offset="0.6788" stop-color="rgb(111,0,0)"/><stop offset="0.6854" stop-color="rgb(107,0,0)"/><stop offset="0.6987" stop-color="rgb(100,0,0)"/><stop offset="0.7119" stop-color="rgb(95,0,0)"/><stop offset="0.7252" stop-color="rgb(92,0,0)"/><stop offset="0.7583" stop-color="rgb(89,1,0)"/><stop offset="0.7649" stop-color="rgb(89,30,0)"/><stop offset="0.7715" stop-color="rgb(89,55,0)"/><stop offset="0.7781" stop-color="rgb(89,74,0)"/><stop offset="0.7914" stop-color="rgb(87,104,0)"/><stop offset="0.7980" stop-color="rgb(86,111,0)"/><stop offset="0.8046" stop-color="rgb(84,111,0)"/><stop offset="0.8113" stop-color="rgb(82,104,0)"/><stop offset="0.8245" stop-color="rgb(80,74,0)"/><stop offset="0.8311" stop-color="rgb(80,55,0)"/><stop offset="0.8377" stop-color="rgb(80,30,0)"/><stop offset="0.8444" stop-color="rgb(80,1,0)"/><stop offset="0.8576" stop-color="rgb(79,0,0)"/><stop offset="0.8775" stop-color="rgb(72,0,0)"/><stop offset="0.8907" stop-color="rgb(69,0,0)"/><stop offset="0.9967" stop-color="rgb(69,0,0)"/></linearGradient>
<linearGradient id="gM27" gradientUnits="userSpaceOnUse" x1="0" y1="780" x2="0" y2="931"><stop offset="0.0033" stop-color="rgb(105,0,0)"/><stop offset="0.0298" stop-color="rgb(109,0,0)"/><stop offset="0.0497" stop-color="rgb(111,0,0)"/><stop offset="0.2815" stop-color="rgb(110,0,0)"/><stop offset="0.3079" stop-color="rgb(112,0,0)"/><stop offset="0.3477" stop-color="rgb(116,0,0)"/><stop offset="0.3874" stop-color="rgb(115,0,0)"/><stop offset="0.3940" stop-color="rgb(116,0,0)"/><stop offset="0.4007" stop-color="rgb(118,0,0)"/><stop offset="0.4272" stop-color="rgb(131,0,0)"/><stop offset="0.4404" stop-color="rgb(134,0,0)"/><stop offset="0.4470" stop-color="rgb(134,0,0)"/><stop offset="0.4603" stop-color="rgb(131,0,0)"/><stop offset="0.4868" stop-color="rgb(121,0,0)"/><stop offset="0.5000" stop-color="rgb(121,0,0)"/><stop offset="0.5066" stop-color="rgb(122,0,0)"/><stop offset="0.5199" stop-color="rgb(126,0,0)"/><stop offset="0.5530" stop-color="rgb(146,0,0)"/><stop offset="0.5662" stop-color="rgb(153,0,0)"/><stop offset="0.5795" stop-color="rgb(157,0,0)"/><stop offset="0.5927" stop-color="rgb(158,0,0)"/><stop offset="0.5993" stop-color="rgb(158,0,0)"/><stop offset="0.6126" stop-color="rgb(155,0,0)"/><stop offset="0.6192" stop-color="rgb(153,0,0)"/><stop offset="0.6325" stop-color="rgb(146,0,0)"/><stop offset="0.6523" stop-color="rgb(133,0,0)"/><stop offset="0.6788" stop-color="rgb(110,0,0)"/><stop offset="0.6854" stop-color="rgb(106,0,0)"/><stop offset="0.6987" stop-color="rgb(99,0,0)"/><stop offset="0.7119" stop-color="rgb(94,0,0)"/><stop offset="0.7252" stop-color="rgb(92,0,0)"/><stop offset="0.7583" stop-color="rgb(89,1,0)"/><stop offset="0.7649" stop-color="rgb(89,30,0)"/><stop offset="0.7715" stop-color="rgb(89,55,0)"/><stop offset="0.7781" stop-color="rgb(89,74,0)"/><stop offset="0.7914" stop-color="rgb(87,104,0)"/><stop offset="0.7980" stop-color="rgb(86,111,0)"/><stop offset="0.8046" stop-color="rgb(84,111,0)"/><stop offset="0.8113" stop-color="rgb(82,104,0)"/><stop offset="0.8245" stop-color="rgb(80,74,0)"/><stop offset="0.8311" stop-color="rgb(80,55,0)"/><stop offset="0.8377" stop-color="rgb(80,30,0)"/><stop offset="0.8444" stop-color="rgb(80,1,0)"/><stop offset="0.8576" stop-color="rgb(79,0,0)"/><stop offset="0.8775" stop-color="rgb(72,0,0)"/><stop offset="0.8907" stop-color="rgb(69,0,0)"/><stop offset="0.9967" stop-color="rgb(69,0,0)"/></linearGradient>
<linearGradient id="gM28" gradientUnits="userSpaceOnUse" x1="0" y1="780" x2="0" y2="931"><stop offset="0.0033" stop-color="rgb(105,0,0)"/><stop offset="0.0298" stop-color="rgb(109,0,0)"/><stop offset="0.0497" stop-color="rgb(111,0,0)"/><stop offset="0.2947" stop-color="rgb(111,0,0)"/><stop offset="0.3146" stop-color="rgb(111,0,0)"/><stop offset="0.3543" stop-color="rgb(116,0,0)"/><stop offset="0.3874" stop-color="rgb(116,0,0)"/><stop offset="0.4007" stop-color="rgb(118,0,0)"/><stop offset="0.4272" stop-color="rgb(130,0,0)"/><stop offset="0.4404" stop-color="rgb(133,0,0)"/><stop offset="0.4536" stop-color="rgb(132,0,0)"/><stop offset="0.4868" stop-color="rgb(120,0,0)"/><stop offset="0.5000" stop-color="rgb(119,0,0)"/><stop offset="0.5132" stop-color="rgb(122,0,0)"/><stop offset="0.5199" stop-color="rgb(125,0,0)"/><stop offset="0.5265" stop-color="rgb(129,0,0)"/><stop offset="0.5530" stop-color="rgb(147,0,0)"/><stop offset="0.5662" stop-color="rgb(154,0,0)"/><stop offset="0.5795" stop-color="rgb(158,0,0)"/><stop offset="0.5927" stop-color="rgb(160,0,0)"/><stop offset="0.6060" stop-color="rgb(158,0,0)"/><stop offset="0.6126" stop-color="rgb(156,0,0)"/><stop offset="0.6258" stop-color="rgb(151,0,0)"/><stop offset="0.6457" stop-color="rgb(137,0,0)"/><stop offset="0.6788" stop-color="rgb(109,0,0)"/><stop offset="0.6854" stop-color="rgb(104,0,0)"/><stop offset="0.6987" stop-color="rgb(98,0,0)"/><stop offset="0.7119" stop-color="rgb(93,0,0)"/><stop offset="0.7252" stop-color="rgb(91,0,0)"/><stop offset="0.7583" stop-color="rgb(89,1,0)"/><stop offset="0.7649" stop-color="rgb(89,30,0)"/><stop offset="0.7715" stop-color="rgb(89,55,0)"/><stop offset="0.7781" stop-color="rgb(89,74,0)"/><stop offset="0.7914" stop-color="rgb(87,104,0)"/><stop offset="0.7980" stop-color="rgb(86,111,0)"/><stop offset="0.8046" stop-color="rgb(84,111,0)"/><stop offset="0.8113" stop-color="rgb(82,104,0)"/><stop offset="0.8245" stop-color="rgb(80,74,0)"/><stop offset="0.8311" stop-color="rgb(80,55,0)"/><stop offset="0.8377" stop-color="rgb(80,30,0)"/><stop offset="0.8444" stop-color="rgb(80,1,0)"/><stop offset="0.8576" stop-color="rgb(79,0,0)"/><stop offset="0.8775" stop-color="rgb(72,0,0)"/><stop offset="0.8907" stop-color="rgb(69,0,0)"/><stop offset="0.9967" stop-color="rgb(69,0,0)"/></linearGradient>
<linearGradient id="gM29" gradientUnits="userSpaceOnUse" x1="0" y1="780" x2="0" y2="931"><stop offset="0.0033" stop-color="rgb(105,0,0)"/><stop offset="0.0298" stop-color="rgb(109,0,0)"/><stop offset="0.0497" stop-color="rgb(111,0,0)"/><stop offset="0.3146" stop-color="rgb(111,0,0)"/><stop offset="0.3609" stop-color="rgb(116,0,0)"/><stop offset="0.3940" stop-color="rgb(117,0,0)"/><stop offset="0.4007" stop-color="rgb(118,0,0)"/><stop offset="0.4272" stop-color="rgb(129,0,0)"/><stop offset="0.4404" stop-color="rgb(132,0,0)"/><stop offset="0.4536" stop-color="rgb(130,0,0)"/><stop offset="0.4868" stop-color="rgb(119,0,0)"/><stop offset="0.5000" stop-color="rgb(118,0,0)"/><stop offset="0.5132" stop-color="rgb(121,0,0)"/><stop offset="0.5199" stop-color="rgb(123,0,0)"/><stop offset="0.5331" stop-color="rgb(132,0,0)"/><stop offset="0.5530" stop-color="rgb(147,0,0)"/><stop offset="0.5662" stop-color="rgb(155,0,0)"/><stop offset="0.5795" stop-color="rgb(160,0,0)"/><stop offset="0.5927" stop-color="rgb(162,0,0)"/><stop offset="0.6060" stop-color="rgb(160,0,0)"/><stop offset="0.6126" stop-color="rgb(158,0,0)"/><stop offset="0.6258" stop-color="rgb(151,0,0)"/><stop offset="0.6457" stop-color="rgb(137,0,0)"/><stop offset="0.6722" stop-color="rgb(112,0,0)"/><stop offset="0.6788" stop-color="rgb(107,0,0)"/><stop offset="0.6921" stop-color="rgb(99,0,0)"/><stop offset="0.7053" stop-color="rgb(94,0,0)"/><stop offset="0.7185" stop-color="rgb(91,0,0)"/><stop offset="0.7318" stop-color="rgb(90,0,0)"/><stop offset="0.7583" stop-color="rgb(89,1,0)"/><stop offset="0.7649" stop-color="rgb(89,30,0)"/><stop offset="0.7715" stop-color="rgb(89,55,0)"/><stop offset="0.7781" stop-color="rgb(89,74,0)"/><stop offset="0.7914" stop-color="rgb(87,104,0)"/><stop offset="0.7980" stop-color="rgb(86,111,0)"/><stop offset="0.8046" stop-color="rgb(84,111,0)"/><stop offset="0.8113" stop-color="rgb(82,104,0)"/><stop offset="0.8245" stop-color="rgb(80,74,0)"/><stop offset="0.8311" stop-color="rgb(80,55,0)"/><stop offset="0.8377" stop-color="rgb(80,30,0)"/><stop offset="0.8444" stop-color="rgb(80,1,0)"/><stop offset="0.8576" stop-color="rgb(79,0,0)"/><stop offset="0.8775" stop-color="rgb(72,0,0)"/><stop offset="0.8907" stop-color="rgb(69,0,0)"/><stop offset="0.9967" stop-color="rgb(69,0,0)"/></linearGradient>
<linearGradient id="gM30" gradientUnits="userSpaceOnUse" x1="0" y1="780" x2="0" y2="931"><stop offset="0.0033" stop-color="rgb(105,0,0)"/><stop offset="0.0298" stop-color="rgb(109,0,0)"/><stop offset="0.0497" stop-color="rgb(111,0,0)"/><stop offset="0.3212" stop-color="rgb(111,0,0)"/><stop offset="0.3609" stop-color="rgb(115,0,0)"/><stop offset="0.3940" stop-color="rgb(117,0,0)"/><stop offset="0.4073" stop-color="rgb(121,0,0)"/><stop offset="0.4272" stop-color="rgb(128,0,0)"/><stop offset="0.4404" stop-color="rgb(131,0,0)"/><stop offset="0.4536" stop-color="rgb(129,0,0)"/><stop offset="0.4868" stop-color="rgb(117,0,0)"/><stop offset="0.5000" stop-color="rgb(117,0,0)"/><stop offset="0.5132" stop-color="rgb(119,0,0)"/><stop offset="0.5265" stop-color="rgb(125,0,0)"/><stop offset="0.5530" stop-color="rgb(147,0,0)"/><stop offset="0.5662" stop-color="rgb(156,0,0)"/><stop offset="0.5795" stop-color="rgb(162,0,0)"/><stop offset="0.5927" stop-color="rgb(164,0,0)"/><stop offset="0.6060" stop-color="rgb(162,0,0)"/><stop offset="0.6126" stop-color="rgb(159,0,0)"/><stop offset="0.6258" stop-color="rgb(152,0,0)"/><stop offset="0.6457" stop-color="rgb(135,0,0)"/><stop offset="0.6722" stop-color="rgb(110,0,0)"/><stop offset="0.6788" stop-color="rgb(105,0,0)"/><stop offset="0.6921" stop-color="rgb(97,0,0)"/><stop offset="0.7053" stop-color="rgb(93,0,0)"/><stop offset="0.7185" stop-color="rgb(90,0,0)"/><stop offset="0.7583" stop-color="rgb(89,1,0)"/><stop offset="0.7649" stop-color="rgb(89,30,0)"/><stop offset="0.7715" stop-color="rgb(89,55,0)"/><stop offset="0.7781" stop-color="rgb(89,74,0)"/><stop offset="0.7914" stop-color="rgb(87,104,0)"/><stop offset="0.7980" stop-color="rgb(86,111,0)"/><stop offset="0.8046" stop-color="rgb(84,111,0)"/><stop offset="0.8113" stop-color="rgb(82,104,0)"/><stop offset="0.8245" stop-color="rgb(80,74,0)"/><stop offset="0.8311" stop-color="rgb(80,55,0)"/><stop offset="0.8377" stop-color="rgb(80,30,0)"/><stop offset="0.8444" stop-color="rgb(80,1,0)"/><stop offset="0.8576" stop-color="rgb(79,0,0)"/><stop offset="0.8775" stop-color="rgb(72,0,0)"/><stop offset="0.8907" stop-color="rgb(69,0,0)"/><stop offset="0.9967" stop-color="rgb(69,0,0)"/></linearGradient>
<linearGradient id="gM31" gradientUnits="userSpaceOnUse" x1="0" y1="780" x2="0" y2="931"><stop offset="0.0033" stop-color="rgb(105,0,0)"/><stop offset="0.0298" stop-color="rgb(109,0,0)"/><stop offset="0.0497" stop-color="rgb(111,0,0)"/><stop offset="0.3278" stop-color="rgb(111,0,0)"/><stop offset="0.3940" stop-color="rgb(117,0,0)"/><stop offset="0.4073" stop-color="rgb(121,0,0)"/><stop offset="0.4272" stop-color="rgb(128,0,0)"/><stop offset="0.4404" stop-color="rgb(129,0,0)"/><stop offset="0.4536" stop-color="rgb(128,0,0)"/><stop offset="0.4868" stop-color="rgb(116,0,0)"/><stop offset="0.5000" stop-color="rgb(115,0,0)"/><stop offset="0.5132" stop-color="rgb(118,0,0)"/><stop offset="0.5265" stop-color="rgb(123,0,0)"/><stop offset="0.5331" stop-color="rgb(128,0,0)"/><stop offset="0.5530" stop-color="rgb(147,0,0)"/><stop offset="0.5662" stop-color="rgb(157,0,0)"/><stop offset="0.5795" stop-color="rgb(163,0,0)"/><stop offset="0.5927" stop-color="rgb(165,0,0)"/><stop offset="0.6060" stop-color="rgb(163,0,0)"/><stop offset="0.6192" stop-color="rgb(157,0,0)"/><stop offset="0.6325" stop-color="rgb(146,0,0)"/><stop offset="0.6722" stop-color="rgb(107,0,0)"/><stop offset="0.6788" stop-color="rgb(102,0,0)"/><stop offset="0.6921" stop-color="rgb(95,0,0)"/><stop offset="0.6987" stop-color="rgb(93,0,0)"/><stop offset="0.7119" stop-color="rgb(90,0,0)"/><stop offset="0.7583" stop-color="rgb(89,1,0)"/><stop offset="0.7649" stop-color="rgb(89,30,0)"/><stop offset="0.7715" stop-color="rgb(89,55,0)"/><stop offset="0.7781" stop-color="rgb(89,74,0)"/><stop offset="0.7914" stop-color="rgb(87,104,0)"/><stop offset="0.7980" stop-color="rgb(86,111,0)"/><stop offset="0.8046" stop-color="rgb(84,111,0)"/><stop offset="0.8113" stop-color="rgb(82,104,0)"/><stop offset="0.8245" stop-color="rgb(80,74,0)"/><stop offset="0.8311" stop-color="rgb(80,55,0)"/><stop offset="0.8377" stop-color="rgb(80,30,0)"/><stop offset="0.8444" stop-color="rgb(80,1,0)"/><stop offset="0.8576" stop-color="rgb(79,0,0)"/><stop offset="0.8775" stop-color="rgb(72,0,0)"/><stop offset="0.8907" stop-color="rgb(69,0,0)"/><stop offset="0.9967" stop-color="rgb(69,0,0)"/></linearGradient>
<filter id="spec" filterUnits="userSpaceOnUse" x="52" y="70" width="1751" height="710" color-interpolation-filters="sRGB">
<feTurbulence type="fractalNoise" baseFrequency="0.45" numOctaves="2" seed="3" result="t"/>
<feColorMatrix in="t" type="matrix" values="1 0 0 0 0 1 0 0 0 0 1 0 0 0 0 0 0 0 0 1" result="n1"/>
<feComponentTransfer in="n1" result="n2"><feFuncR type="table" tableValues="0.4251 0.4251 0.4251 0.4251 0.4251 0.4251 0.4251 0.4252 0.4252 0.4254 0.4255 0.4257 0.4260 0.4264 0.4269 0.4276 0.4284 0.4296 0.4309 0.4326 0.4346 0.4370 0.4398 0.4431 0.4469 0.4513 0.4564 0.4620 0.4685 0.4757 0.4836 0.4922 0.5008 0.5106 0.5190 0.5267 0.5336 0.5397 0.5451 0.5499 0.5540 0.5576 0.5607 0.5634 0.5657 0.5676 0.5692 0.5705 0.5716 0.5724 0.5731 0.5736 0.5740 0.5742 0.5745 0.5746 0.5747 0.5748 0.5749 0.5749 0.5749 0.5749 0.5749 0.5749 0.5749"/><feFuncG type="table" tableValues="0.4251 0.4251 0.4251 0.4251 0.4251 0.4251 0.4251 0.4252 0.4252 0.4254 0.4255 0.4257 0.4260 0.4264 0.4269 0.4276 0.4284 0.4296 0.4309 0.4326 0.4346 0.4370 0.4398 0.4431 0.4469 0.4513 0.4564 0.4620 0.4685 0.4757 0.4836 0.4922 0.5008 0.5106 0.5190 0.5267 0.5336 0.5397 0.5451 0.5499 0.5540 0.5576 0.5607 0.5634 0.5657 0.5676 0.5692 0.5705 0.5716 0.5724 0.5731 0.5736 0.5740 0.5742 0.5745 0.5746 0.5747 0.5748 0.5749 0.5749 0.5749 0.5749 0.5749 0.5749 0.5749"/><feFuncB type="table" tableValues="0.4251 0.4251 0.4251 0.4251 0.4251 0.4251 0.4251 0.4252 0.4252 0.4254 0.4255 0.4257 0.4260 0.4264 0.4269 0.4276 0.4284 0.4296 0.4309 0.4326 0.4346 0.4370 0.4398 0.4431 0.4469 0.4513 0.4564 0.4620 0.4685 0.4757 0.4836 0.4922 0.5008 0.5106 0.5190 0.5267 0.5336 0.5397 0.5451 0.5499 0.5540 0.5576 0.5607 0.5634 0.5657 0.5676 0.5692 0.5705 0.5716 0.5724 0.5731 0.5736 0.5740 0.5742 0.5745 0.5746 0.5747 0.5748 0.5749 0.5749 0.5749 0.5749 0.5749 0.5749 0.5749"/></feComponentTransfer>
<feColorMatrix in="SourceGraphic" type="matrix" values="1 0 0 0 0 1 0 0 0 0 1 0 0 0 0 0 0 0 0 1" result="base"/>
<feColorMatrix in="SourceGraphic" type="matrix" values="0 1 0 0 0 0 1 0 0 0 0 1 0 0 0 0 0 0 0 1" result="line"/>
<feComposite in="base" in2="n2" operator="arithmetic" k1="0" k2="1" k3="1" k4="-0.5" result="noisy"/>
<feComposite in="line" in2="n2" operator="arithmetic" k1="0" k2="1" k3="0.45" k4="-0.225" result="nline"/>
<feBlend in="noisy" in2="nline" mode="lighten" result="v"/>
<feComponentTransfer in="v"><feFuncR type="table" tableValues="1.000 1.000 1.000 1.000 1.000 1.000 1.000 1.000 1.000 1.000 1.000 1.000 1.000 1.000 1.000 1.000 0.125 0.124 0.122 0.120 0.118 0.116 0.114 0.112 0.110 0.110 0.110 0.110 0.110 0.110 0.110 0.110 0.110 0.106 0.102 0.098 0.094 0.090 0.086 0.082 0.078 0.078 0.078 0.078 0.078 0.086 0.094 0.102 0.110 0.120 0.129 0.139 0.149 0.157 0.165 0.173 0.180 0.194 0.208 0.222 0.235 0.243 0.251 0.259 0.267 0.306 0.345 0.384 0.424 0.451 0.478 0.506 0.533 0.557 0.580 0.604 0.627 0.647 0.667 0.686 0.706 0.737 0.769 0.800 0.831 0.853 0.875 0.896 0.918 0.929 0.941 0.953 0.965 0.971 0.976 0.982 0.988 0.984 0.980 0.976 0.973 0.971 0.969 0.967 0.965 0.963 0.961 0.959 0.957 0.957 0.957 0.957 0.957 0.949 0.941 0.933 0.925 0.920 0.914 0.908 0.902 0.900 0.898 0.896 0.894 0.898 0.902 0.906 0.910 0.906 0.902 0.898 0.894 0.892 0.890 0.888 0.886 0.884 0.882 0.880 0.878 0.878 0.878 0.878 0.878 0.910 0.910 0.910 0.910 0.910 0.910 0.910 0.910 0.910 0.910 0.910 0.910 0.910 0.910 0.910 0.910"/><feFuncG type="table" tableValues="1.000 1.000 1.000 1.000 1.000 1.000 1.000 1.000 1.000 1.000 1.000 1.000 1.000 1.000 1.000 1.000 0.220 0.227 0.235 0.243 0.251 0.263 0.275 0.286 0.298 0.312 0.325 0.339 0.353 0.363 0.373 0.382 0.392 0.410 0.427 0.445 0.463 0.492 0.522 0.551 0.580 0.600 0.620 0.639 0.659 0.651 0.643 0.635 0.627 0.623 0.618 0.613 0.608 0.605 0.602 0.599 0.596 0.598 0.600 0.602 0.604 0.616 0.627 0.639 0.651 0.671 0.690 0.710 0.729 0.741 0.753 0.765 0.776 0.783 0.790 0.797 0.804 0.809 0.814 0.819 0.824 0.837 0.851 0.865 0.878 0.890 0.902 0.914 0.925 0.914 0.902 0.890 0.878 0.839 0.800 0.761 0.722 0.702 0.682 0.663 0.643 0.624 0.604 0.584 0.565 0.549 0.533 0.518 0.502 0.488 0.475 0.461 0.447 0.433 0.420 0.406 0.392 0.373 0.353 0.333 0.314 0.288 0.263 0.237 0.212 0.190 0.169 0.147 0.125 0.118 0.110 0.102 0.094 0.090 0.086 0.082 0.078 0.075 0.071 0.067 0.063 0.063 0.063 0.063 0.063 0.314 0.314 0.314 0.314 0.314 0.314 0.314 0.314 0.314 0.314 0.314 0.314 0.314 0.314 0.314 0.314"/><feFuncB type="table" tableValues="1.000 1.000 1.000 1.000 1.000 1.000 1.000 1.000 1.000 1.000 1.000 1.000 1.000 1.000 1.000 1.000 0.424 0.437 0.451 0.465 0.478 0.496 0.514 0.531 0.549 0.563 0.576 0.590 0.604 0.614 0.624 0.633 0.643 0.661 0.678 0.696 0.714 0.727 0.741 0.755 0.769 0.747 0.725 0.704 0.682 0.647 0.612 0.576 0.541 0.510 0.478 0.447 0.416 0.398 0.380 0.363 0.345 0.333 0.322 0.310 0.298 0.284 0.271 0.257 0.243 0.243 0.243 0.243 0.243 0.233 0.224 0.214 0.204 0.196 0.188 0.180 0.173 0.171 0.169 0.167 0.165 0.165 0.165 0.165 0.165 0.155 0.145 0.135 0.125 0.120 0.114 0.108 0.102 0.092 0.082 0.073 0.063 0.067 0.071 0.075 0.078 0.080 0.082 0.084 0.086 0.088 0.090 0.092 0.094 0.094 0.094 0.094 0.094 0.102 0.110 0.118 0.125 0.141 0.157 0.173 0.188 0.192 0.196 0.200 0.204 0.190 0.176 0.163 0.149 0.163 0.176 0.190 0.204 0.224 0.243 0.263 0.282 0.300 0.318 0.335 0.353 0.367 0.380 0.394 0.408 0.533 0.533 0.533 0.533 0.533 0.533 0.533 0.533 0.533 0.533 0.533 0.533 0.533 0.533 0.533 0.533"/></feComponentTransfer>
</filter>
<filter id="spec2" filterUnits="userSpaceOnUse" x="52" y="780" width="1751" height="151" color-interpolation-filters="sRGB">
<feTurbulence type="fractalNoise" baseFrequency="0.5 0.3" numOctaves="2" seed="7" result="t"/>
<feColorMatrix in="t" type="matrix" values="1 0 0 0 0 1 0 0 0 0 1 0 0 0 0 0 0 0 0 1" result="n1"/>
<feComponentTransfer in="n1" result="n2"><feFuncR type="table" tableValues="0.4372 0.4372 0.4372 0.4372 0.4372 0.4372 0.4372 0.4373 0.4374 0.4375 0.4376 0.4378 0.4380 0.4382 0.4386 0.4391 0.4398 0.4406 0.4419 0.4435 0.4452 0.4473 0.4495 0.4519 0.4545 0.4575 0.4611 0.4651 0.4698 0.4753 0.4815 0.4886 0.4987 0.5112 0.5183 0.5248 0.5307 0.5357 0.5400 0.5437 0.5468 0.5495 0.5518 0.5541 0.5559 0.5575 0.5589 0.5599 0.5607 0.5612 0.5616 0.5619 0.5622 0.5623 0.5625 0.5626 0.5627 0.5627 0.5628 0.5628 0.5628 0.5628 0.5628 0.5628 0.5628"/><feFuncG type="table" tableValues="0.4372 0.4372 0.4372 0.4372 0.4372 0.4372 0.4372 0.4373 0.4374 0.4375 0.4376 0.4378 0.4380 0.4382 0.4386 0.4391 0.4398 0.4406 0.4419 0.4435 0.4452 0.4473 0.4495 0.4519 0.4545 0.4575 0.4611 0.4651 0.4698 0.4753 0.4815 0.4886 0.4987 0.5112 0.5183 0.5248 0.5307 0.5357 0.5400 0.5437 0.5468 0.5495 0.5518 0.5541 0.5559 0.5575 0.5589 0.5599 0.5607 0.5612 0.5616 0.5619 0.5622 0.5623 0.5625 0.5626 0.5627 0.5627 0.5628 0.5628 0.5628 0.5628 0.5628 0.5628 0.5628"/><feFuncB type="table" tableValues="0.4372 0.4372 0.4372 0.4372 0.4372 0.4372 0.4372 0.4373 0.4374 0.4375 0.4376 0.4378 0.4380 0.4382 0.4386 0.4391 0.4398 0.4406 0.4419 0.4435 0.4452 0.4473 0.4495 0.4519 0.4545 0.4575 0.4611 0.4651 0.4698 0.4753 0.4815 0.4886 0.4987 0.5112 0.5183 0.5248 0.5307 0.5357 0.5400 0.5437 0.5468 0.5495 0.5518 0.5541 0.5559 0.5575 0.5589 0.5599 0.5607 0.5612 0.5616 0.5619 0.5622 0.5623 0.5625 0.5626 0.5627 0.5627 0.5628 0.5628 0.5628 0.5628 0.5628 0.5628 0.5628"/></feComponentTransfer>
<feColorMatrix in="SourceGraphic" type="matrix" values="1 0 0 0 0 1 0 0 0 0 1 0 0 0 0 0 0 0 0 1" result="base"/>
<feColorMatrix in="SourceGraphic" type="matrix" values="0 1 0 0 0 0 1 0 0 0 0 1 0 0 0 0 0 0 0 1" result="line"/>
<feComposite in="base" in2="n2" operator="arithmetic" k1="0" k2="1" k3="1" k4="-0.5" result="noisy"/>
<feComposite in="line" in2="n2" operator="arithmetic" k1="0" k2="1" k3="0.45" k4="-0.225" result="nline"/>
<feBlend in="noisy" in2="nline" mode="lighten" result="v"/>
<feComponentTransfer in="v"><feFuncR type="table" tableValues="1.000 1.000 1.000 1.000 1.000 1.000 1.000 1.000 1.000 1.000 1.000 1.000 1.000 1.000 1.000 1.000 0.125 0.124 0.122 0.120 0.118 0.116 0.114 0.112 0.110 0.110 0.110 0.110 0.110 0.110 0.110 0.110 0.110 0.106 0.102 0.098 0.094 0.090 0.086 0.082 0.078 0.078 0.078 0.078 0.078 0.086 0.094 0.102 0.110 0.120 0.129 0.139 0.149 0.157 0.165 0.173 0.180 0.194 0.208 0.222 0.235 0.243 0.251 0.259 0.267 0.306 0.345 0.384 0.424 0.451 0.478 0.506 0.533 0.557 0.580 0.604 0.627 0.647 0.667 0.686 0.706 0.737 0.769 0.800 0.831 0.853 0.875 0.896 0.918 0.929 0.941 0.953 0.965 0.971 0.976 0.982 0.988 0.984 0.980 0.976 0.973 0.971 0.969 0.967 0.965 0.963 0.961 0.959 0.957 0.957 0.957 0.957 0.957 0.949 0.941 0.933 0.925 0.920 0.914 0.908 0.902 0.900 0.898 0.896 0.894 0.898 0.902 0.906 0.910 0.906 0.902 0.898 0.894 0.892 0.890 0.888 0.886 0.884 0.882 0.880 0.878 0.878 0.878 0.878 0.878 0.910 0.910 0.910 0.910 0.910 0.910 0.910 0.910 0.910 0.910 0.910 0.910 0.910 0.910 0.910 0.910"/><feFuncG type="table" tableValues="1.000 1.000 1.000 1.000 1.000 1.000 1.000 1.000 1.000 1.000 1.000 1.000 1.000 1.000 1.000 1.000 0.220 0.227 0.235 0.243 0.251 0.263 0.275 0.286 0.298 0.312 0.325 0.339 0.353 0.363 0.373 0.382 0.392 0.410 0.427 0.445 0.463 0.492 0.522 0.551 0.580 0.600 0.620 0.639 0.659 0.651 0.643 0.635 0.627 0.623 0.618 0.613 0.608 0.605 0.602 0.599 0.596 0.598 0.600 0.602 0.604 0.616 0.627 0.639 0.651 0.671 0.690 0.710 0.729 0.741 0.753 0.765 0.776 0.783 0.790 0.797 0.804 0.809 0.814 0.819 0.824 0.837 0.851 0.865 0.878 0.890 0.902 0.914 0.925 0.914 0.902 0.890 0.878 0.839 0.800 0.761 0.722 0.702 0.682 0.663 0.643 0.624 0.604 0.584 0.565 0.549 0.533 0.518 0.502 0.488 0.475 0.461 0.447 0.433 0.420 0.406 0.392 0.373 0.353 0.333 0.314 0.288 0.263 0.237 0.212 0.190 0.169 0.147 0.125 0.118 0.110 0.102 0.094 0.090 0.086 0.082 0.078 0.075 0.071 0.067 0.063 0.063 0.063 0.063 0.063 0.314 0.314 0.314 0.314 0.314 0.314 0.314 0.314 0.314 0.314 0.314 0.314 0.314 0.314 0.314 0.314"/><feFuncB type="table" tableValues="1.000 1.000 1.000 1.000 1.000 1.000 1.000 1.000 1.000 1.000 1.000 1.000 1.000 1.000 1.000 1.000 0.424 0.437 0.451 0.465 0.478 0.496 0.514 0.531 0.549 0.563 0.576 0.590 0.604 0.614 0.624 0.633 0.643 0.661 0.678 0.696 0.714 0.727 0.741 0.755 0.769 0.747 0.725 0.704 0.682 0.647 0.612 0.576 0.541 0.510 0.478 0.447 0.416 0.398 0.380 0.363 0.345 0.333 0.322 0.310 0.298 0.284 0.271 0.257 0.243 0.243 0.243 0.243 0.243 0.233 0.224 0.214 0.204 0.196 0.188 0.180 0.173 0.171 0.169 0.167 0.165 0.165 0.165 0.165 0.165 0.155 0.145 0.135 0.125 0.120 0.114 0.108 0.102 0.092 0.082 0.073 0.063 0.067 0.071 0.075 0.078 0.080 0.082 0.084 0.086 0.088 0.090 0.092 0.094 0.094 0.094 0.094 0.094 0.102 0.110 0.118 0.125 0.141 0.157 0.173 0.188 0.192 0.196 0.200 0.204 0.190 0.176 0.163 0.149 0.163 0.176 0.190 0.204 0.224 0.243 0.263 0.282 0.300 0.318 0.335 0.353 0.367 0.380 0.394 0.408 0.533 0.533 0.533 0.533 0.533 0.533 0.533 0.533 0.533 0.533 0.533 0.533 0.533 0.533 0.533 0.533"/></feComponentTransfer>
</filter>
<linearGradient id="cb" x1="0" y1="0" x2="0" y2="1"><stop offset="0.0000" stop-color="rgb(224,16,104)"/><stop offset="0.0312" stop-color="rgb(224,16,90)"/><stop offset="0.0625" stop-color="rgb(226,20,72)"/><stop offset="0.0938" stop-color="rgb(228,24,52)"/><stop offset="0.1250" stop-color="rgb(232,32,38)"/><stop offset="0.1562" stop-color="rgb(228,54,52)"/><stop offset="0.1875" stop-color="rgb(230,80,48)"/><stop offset="0.2188" stop-color="rgb(236,100,32)"/><stop offset="0.2500" stop-color="rgb(244,114,24)"/><stop offset="0.2812" stop-color="rgb(244,128,24)"/><stop offset="0.3125" stop-color="rgb(246,144,22)"/><stop offset="0.3438" stop-color="rgb(248,164,20)"/><stop offset="0.3750" stop-color="rgb(252,184,16)"/><stop offset="0.4062" stop-color="rgb(246,224,26)"/><stop offset="0.4375" stop-color="rgb(234,236,32)"/><stop offset="0.4688" stop-color="rgb(212,224,42)"/><stop offset="0.5000" stop-color="rgb(180,210,42)"/><stop offset="0.5312" stop-color="rgb(160,205,44)"/><stop offset="0.5625" stop-color="rgb(136,198,52)"/><stop offset="0.5938" stop-color="rgb(108,186,62)"/><stop offset="0.6250" stop-color="rgb(68,166,62)"/><stop offset="0.6562" stop-color="rgb(60,154,76)"/><stop offset="0.6875" stop-color="rgb(46,152,88)"/><stop offset="0.7188" stop-color="rgb(38,155,106)"/><stop offset="0.7500" stop-color="rgb(28,160,138)"/><stop offset="0.7812" stop-color="rgb(20,168,174)"/><stop offset="0.8125" stop-color="rgb(20,148,196)"/><stop offset="0.8438" stop-color="rgb(24,118,182)"/><stop offset="0.8750" stop-color="rgb(28,100,164)"/><stop offset="0.9062" stop-color="rgb(28,90,154)"/><stop offset="0.9375" stop-color="rgb(28,76,140)"/><stop offset="0.9688" stop-color="rgb(30,64,122)"/><stop offset="1.0000" stop-color="rgb(32,56,108)"/></linearGradient>
<linearGradient id="mA" gradientUnits="userSpaceOnUse" x1="666" y1="0" x2="1409" y2="0"><stop offset="0" stop-color="rgb(0,0,0)"/><stop offset="0.1" stop-color="rgb(3,0,0)"/><stop offset="0.3" stop-color="rgb(11,0,0)"/><stop offset="0.5" stop-color="rgb(15,0,0)"/><stop offset="0.8" stop-color="rgb(13,0,0)"/><stop offset="0.93" stop-color="rgb(5,0,0)"/><stop offset="1" stop-color="rgb(1,0,0)"/></linearGradient>
<linearGradient id="mB" gradientUnits="userSpaceOnUse" x1="666" y1="0" x2="1409" y2="0"><stop offset="0" stop-color="rgb(11,0,0)"/><stop offset="0.35" stop-color="rgb(9,0,0)"/><stop offset="0.6" stop-color="rgb(3,0,0)"/><stop offset="1" stop-color="rgb(0,0,0)"/></linearGradient>
</defs>
<rect x="0" y="0" width="1920" height="980" fill="#000"/>
<rect x="0" y="0" width="1834" height="1" fill="#949494"/>
<rect x="0" y="0" width="1" height="980" fill="#949494"/>
<rect x="52" y="70" width="1751" height="861" fill="#fff"/>
<g filter="url(#spec)"><rect x="420" y="70" width="17" height="711" fill="url(#gU)"/><rect x="450" y="70" width="18" height="711" fill="url(#gU)"/><rect x="666" y="70" width="743" height="711" fill="url(#gU)"/><rect x="1707" y="70" width="96" height="711" fill="url(#gU)"/><rect x="666" y="443" width="743" height="80" fill="url(#mA)" style="mix-blend-mode:screen"/><rect x="666" y="692" width="743" height="89" fill="url(#mB)" style="mix-blend-mode:screen"/></g>
<g filter="url(#spec2)"><rect x="420" y="780" width="17" height="151" fill="url(#gS)"/><rect x="450" y="780" width="18" height="151" fill="url(#gS)"/><rect x="1707" y="780" width="96" height="151" fill="url(#gR)"/><rect x="666.00" y="780" width="23.72" height="151" fill="url(#gM0)"/><rect x="689.22" y="780" width="23.72" height="151" fill="url(#gM1)"/><rect x="712.44" y="780" width="23.72" height="151" fill="url(#gM2)"/><rect x="735.66" y="780" width="23.72" height="151" fill="url(#gM3)"/><rect x="758.88" y="780" width="23.72" height="151" fill="url(#gM4)"/><rect x="782.09" y="780" width="23.72" height="151" fill="url(#gM5)"/><rect x="805.31" y="780" width="23.72" height="151" fill="url(#gM6)"/><rect x="828.53" y="780" width="23.72" height="151" fill="url(#gM7)"/><rect x="851.75" y="780" width="23.72" height="151" fill="url(#gM8)"/><rect x="874.97" y="780" width="23.72" height="151" fill="url(#gM9)"/><rect x="898.19" y="780" width="23.72" height="151" fill="url(#gM10)"/><rect x="921.41" y="780" width="23.72" height="151" fill="url(#gM11)"/><rect x="944.62" y="780" width="23.72" height="151" fill="url(#gM12)"/><rect x="967.84" y="780" width="23.72" height="151" fill="url(#gM13)"/><rect x="991.06" y="780" width="23.72" height="151" fill="url(#gM14)"/><rect x="1014.28" y="780" width="23.72" height="151" fill="url(#gM15)"/><rect x="1037.50" y="780" width="23.72" height="151" fill="url(#gM16)"/><rect x="1060.72" y="780" width="23.72" height="151" fill="url(#gM17)"/><rect x="1083.94" y="780" width="23.72" height="151" fill="url(#gM18)"/><rect x="1107.16" y="780" width="23.72" height="151" fill="url(#gM19)"/><rect x="1130.38" y="780" width="23.72" height="151" fill="url(#gM20)"/><rect x="1153.59" y="780" width="23.72" height="151" fill="url(#gM21)"/><rect x="1176.81" y="780" width="23.72" height="151" fill="url(#gM22)"/><rect x="1200.03" y="780" width="23.72" height="151" fill="url(#gM23)"/><rect x="1223.25" y="780" width="23.72" height="151" fill="url(#gM24)"/><rect x="1246.47" y="780" width="23.72" height="151" fill="url(#gM25)"/><rect x="1269.69" y="780" width="23.72" height="151" fill="url(#gM26)"/><rect x="1292.91" y="780" width="23.72" height="151" fill="url(#gM27)"/><rect x="1316.12" y="780" width="23.72" height="151" fill="url(#gM28)"/><rect x="1339.34" y="780" width="23.72" height="151" fill="url(#gM29)"/><rect x="1362.56" y="780" width="23.72" height="151" fill="url(#gM30)"/><rect x="1385.78" y="780" width="23.72" height="151" fill="url(#gM31)"/></g>
<rect x="52" y="70" width="368" height="861" fill="#fff"/>
<rect x="437" y="70" width="13" height="861" fill="#fff"/>
<rect x="468" y="70" width="198" height="861" fill="#fff"/>
<rect x="1409" y="70" width="298" height="861" fill="#fff"/>
<g fill="#fff"><rect x="52" y="63" width="1" height="5"/><rect x="55" y="63" width="1" height="5"/><rect x="66" y="65" width="1" height="3"/><rect x="76" y="65" width="1" height="3"/><rect x="86" y="65" width="1" height="3"/><rect x="97" y="65" width="1" height="3"/><rect x="107" y="63" width="1" height="5"/><rect x="118" y="65" width="1" height="3"/><rect x="128" y="65" width="1" height="3"/><rect x="139" y="65" width="1" height="3"/><rect x="149" y="65" width="1" height="3"/><rect x="159" y="63" width="1" height="5"/><rect x="170" y="65" width="1" height="3"/><rect x="180" y="65" width="1" height="3"/><rect x="191" y="65" width="1" height="3"/><rect x="201" y="65" width="1" height="3"/><rect x="211" y="63" width="1" height="5"/><rect x="222" y="65" width="1" height="3"/><rect x="232" y="65" width="1" height="3"/><rect x="243" y="65" width="1" height="3"/><rect x="253" y="65" width="1" height="3"/><rect x="264" y="63" width="1" height="5"/><rect x="274" y="65" width="1" height="3"/><rect x="284" y="65" width="1" height="3"/><rect x="295" y="65" width="1" height="3"/><rect x="305" y="65" width="1" height="3"/><rect x="316" y="63" width="1" height="5"/><rect x="326" y="65" width="1" height="3"/><rect x="337" y="65" width="1" height="3"/><rect x="347" y="65" width="1" height="3"/><rect x="357" y="65" width="1" height="3"/><rect x="368" y="63" width="1" height="5"/><rect x="378" y="65" width="1" height="3"/><rect x="389" y="65" width="1" height="3"/><rect x="399" y="65" width="1" height="3"/><rect x="409" y="65" width="1" height="3"/><rect x="420" y="63" width="1" height="5"/><rect x="430" y="65" width="1" height="3"/><rect x="441" y="65" width="1" height="3"/><rect x="451" y="65" width="1" height="3"/><rect x="462" y="65" width="1" height="3"/><rect x="472" y="63" width="1" height="5"/><rect x="482" y="65" width="1" height="3"/><rect x="493" y="65" width="1" height="3"/><rect x="503" y="65" width="1" height="3"/><rect x="514" y="65" width="1" height="3"/><rect x="524" y="63" width="1" height="5"/><rect x="535" y="65" width="1" height="3"/><rect x="545" y="65" width="1" height="3"/><rect x="555" y="65" width="1" height="3"/><rect x="566" y="65" width="1" height="3"/><rect x="576" y="63" width="1" height="5"/><rect x="587" y="65" width="1" height="3"/><rect x="597" y="65" width="1" height="3"/><rect x="608" y="65" width="1" height="3"/><rect x="618" y="65" width="1" height="3"/><rect x="628" y="63" width="1" height="5"/><rect x="639" y="65" width="1" height="3"/><rect x="649" y="65" width="1" height="3"/><rect x="660" y="65" width="1" height="3"/><rect x="670" y="65" width="1" height="3"/><rect x="680" y="63" width="1" height="5"/><rect x="691" y="65" width="1" height="3"/><rect x="701" y="65" width="1" height="3"/><rect x="712" y="65" width="1" height="3"/><rect x="722" y="65" width="1" height="3"/><rect x="733" y="63" width="1" height="5"/><rect x="743" y="65" width="1" height="3"/><rect x="753" y="65" width="1" height="3"/><rect x="764" y="65" width="1" height="3"/><rect x="774" y="65" width="1" height="3"/><rect x="785" y="63" width="1" height="5"/><rect x="795" y="65" width="1" height="3"/><rect x="806" y="65" width="1" height="3"/><rect x="816" y="65" width="1" height="3"/><rect x="826" y="65" width="1" height="3"/><rect x="837" y="63" width="1" height="5"/><rect x="847" y="65" width="1" height="3"/><rect x="858" y="65" width="1" height="3"/><rect x="868" y="65" width="1" height="3"/><rect x="879" y="65" width="1" height="3"/><rect x="889" y="63" width="1" height="5"/><rect x="899" y="65" width="1" height="3"/><rect x="910" y="65" width="1" height="3"/><rect x="920" y="65" width="1" height="3"/><rect x="931" y="65" width="1" height="3"/><rect x="941" y="63" width="1" height="5"/><rect x="951" y="65" width="1" height="3"/><rect x="962" y="65" width="1" height="3"/><rect x="972" y="65" width="1" height="3"/><rect x="983" y="65" width="1" height="3"/><rect x="993" y="63" width="1" height="5"/><rect x="1004" y="65" width="1" height="3"/><rect x="1014" y="65" width="1" height="3"/><rect x="1024" y="65" width="1" height="3"/><rect x="1035" y="65" width="1" height="3"/><rect x="1045" y="63" width="1" height="5"/><rect x="1056" y="65" width="1" height="3"/><rect x="1066" y="65" width="1" height="3"/><rect x="1077" y="65" width="1" height="3"/><rect x="1087" y="65" width="1" height="3"/><rect x="1097" y="63" width="1" height="5"/><rect x="1108" y="65" width="1" height="3"/><rect x="1118" y="65" width="1" height="3"/><rect x="1129" y="65" width="1" height="3"/><rect x="1139" y="65" width="1" height="3"/><rect x="1150" y="63" width="1" height="5"/><rect x="1160" y="65" width="1" height="3"/><rect x="1170" y="65" width="1" height="3"/><rect x="1181" y="65" width="1" height="3"/><rect x="1191" y="65" width="1" height="3"/><rect x="1202" y="63" width="1" height="5"/><rect x="1212" y="65" width="1" height="3"/><rect x="1222" y="65" width="1" height="3"/><rect x="1233" y="65" width="1" height="3"/><rect x="1243" y="65" width="1" height="3"/><rect x="1254" y="63" width="1" height="5"/><rect x="1264" y="65" width="1" height="3"/><rect x="1275" y="65" width="1" height="3"/><rect x="1285" y="65" width="1" height="3"/><rect x="1295" y="65" width="1" height="3"/><rect x="1306" y="63" width="1" height="5"/><rect x="1316" y="65" width="1" height="3"/><rect x="1327" y="65" width="1" height="3"/><rect x="1337" y="65" width="1" height="3"/><rect x="1348" y="65" width="1" height="3"/><rect x="1358" y="63" width="1" height="5"/><rect x="1368" y="65" width="1" height="3"/><rect x="1379" y="65" width="1" height="3"/><rect x="1389" y="65" width="1" height="3"/><rect x="1400" y="65" width="1" height="3"/><rect x="1410" y="63" width="1" height="5"/><rect x="1420" y="65" width="1" height="3"/><rect x="1431" y="65" width="1" height="3"/><rect x="1441" y="65" width="1" height="3"/><rect x="1452" y="65" width="1" height="3"/><rect x="1462" y="63" width="1" height="5"/><rect x="1473" y="65" width="1" height="3"/><rect x="1483" y="65" width="1" height="3"/><rect x="1493" y="65" width="1" height="3"/><rect x="1504" y="65" width="1" height="3"/><rect x="1514" y="63" width="1" height="5"/><rect x="1525" y="65" width="1" height="3"/><rect x="1535" y="65" width="1" height="3"/><rect x="1546" y="65" width="1" height="3"/><rect x="1556" y="65" width="1" height="3"/><rect x="1566" y="63" width="1" height="5"/><rect x="1577" y="65" width="1" height="3"/><rect x="1587" y="65" width="1" height="3"/><rect x="1598" y="65" width="1" height="3"/><rect x="1608" y="65" width="1" height="3"/><rect x="1619" y="63" width="1" height="5"/><rect x="1629" y="65" width="1" height="3"/><rect x="1639" y="65" width="1" height="3"/><rect x="1650" y="65" width="1" height="3"/><rect x="1660" y="65" width="1" height="3"/><rect x="1671" y="63" width="1" height="5"/><rect x="1681" y="65" width="1" height="3"/><rect x="1691" y="65" width="1" height="3"/><rect x="1702" y="65" width="1" height="3"/><rect x="1712" y="65" width="1" height="3"/><rect x="1723" y="63" width="1" height="5"/><rect x="1733" y="65" width="1" height="3"/><rect x="1744" y="65" width="1" height="3"/><rect x="1754" y="65" width="1" height="3"/><rect x="1764" y="65" width="1" height="3"/><rect x="1775" y="63" width="1" height="5"/><rect x="1785" y="65" width="1" height="3"/><rect x="1796" y="65" width="1" height="3"/><rect x="1803" y="63" width="1" height="5"/><rect x="45" y="930" width="5" height="1"/><rect x="1806" y="930" width="5" height="1"/><rect x="47" y="919" width="3" height="1"/><rect x="1806" y="919" width="3" height="1"/><rect x="45" y="908" width="5" height="1"/><rect x="1806" y="908" width="5" height="1"/><rect x="47" y="898" width="3" height="1"/><rect x="1806" y="898" width="3" height="1"/><rect x="45" y="887" width="5" height="1"/><rect x="1806" y="887" width="5" height="1"/><rect x="47" y="876" width="3" height="1"/><rect x="1806" y="876" width="3" height="1"/><rect x="45" y="866" width="5" height="1"/><rect x="1806" y="866" width="5" height="1"/><rect x="47" y="855" width="3" height="1"/><rect x="1806" y="855" width="3" height="1"/><rect x="45" y="844" width="5" height="1"/><rect x="1806" y="844" width="5" height="1"/><rect x="47" y="833" width="3" height="1"/><rect x="1806" y="833" width="3" height="1"/><rect x="45" y="822" width="5" height="1"/><rect x="1806" y="822" width="5" height="1"/><rect x="47" y="812" width="3" height="1"/><rect x="1806" y="812" width="3" height="1"/><rect x="45" y="801" width="5" height="1"/><rect x="1806" y="801" width="5" height="1"/><rect x="47" y="790" width="3" height="1"/><rect x="1806" y="790" width="3" height="1"/><rect x="45" y="780" width="5" height="1"/><rect x="1806" y="780" width="5" height="1"/><rect x="47" y="769" width="3" height="1"/><rect x="1806" y="769" width="3" height="1"/><rect x="45" y="758" width="5" height="1"/><rect x="1806" y="758" width="5" height="1"/><rect x="47" y="747" width="3" height="1"/><rect x="1806" y="747" width="3" height="1"/><rect x="45" y="736" width="5" height="1"/><rect x="1806" y="736" width="5" height="1"/><rect x="47" y="726" width="3" height="1"/><rect x="1806" y="726" width="3" height="1"/><rect x="45" y="715" width="5" height="1"/><rect x="1806" y="715" width="5" height="1"/><rect x="47" y="704" width="3" height="1"/><rect x="1806" y="704" width="3" height="1"/><rect x="45" y="694" width="5" height="1"/><rect x="1806" y="694" width="5" height="1"/><rect x="47" y="683" width="3" height="1"/><rect x="1806" y="683" width="3" height="1"/><rect x="45" y="672" width="5" height="1"/><rect x="1806" y="672" width="5" height="1"/><rect x="47" y="661" width="3" height="1"/><rect x="1806" y="661" width="3" height="1"/><rect x="45" y="650" width="5" height="1"/><rect x="1806" y="650" width="5" height="1"/><rect x="47" y="640" width="3" height="1"/><rect x="1806" y="640" width="3" height="1"/><rect x="45" y="629" width="5" height="1"/><rect x="1806" y="629" width="5" height="1"/><rect x="47" y="618" width="3" height="1"/><rect x="1806" y="618" width="3" height="1"/><rect x="45" y="608" width="5" height="1"/><rect x="1806" y="608" width="5" height="1"/><rect x="47" y="597" width="3" height="1"/><rect x="1806" y="597" width="3" height="1"/><rect x="45" y="586" width="5" height="1"/><rect x="1806" y="586" width="5" height="1"/><rect x="47" y="575" width="3" height="1"/><rect x="1806" y="575" width="3" height="1"/><rect x="45" y="564" width="5" height="1"/><rect x="1806" y="564" width="5" height="1"/><rect x="47" y="554" width="3" height="1"/><rect x="1806" y="554" width="3" height="1"/><rect x="45" y="543" width="5" height="1"/><rect x="1806" y="543" width="5" height="1"/><rect x="47" y="532" width="3" height="1"/><rect x="1806" y="532" width="3" height="1"/><rect x="45" y="522" width="5" height="1"/><rect x="1806" y="522" width="5" height="1"/><rect x="47" y="511" width="3" height="1"/><rect x="1806" y="511" width="3" height="1"/><rect x="45" y="500" width="5" height="1"/><rect x="1806" y="500" width="5" height="1"/><rect x="47" y="489" width="3" height="1"/><rect x="1806" y="489" width="3" height="1"/><rect x="45" y="478" width="5" height="1"/><rect x="1806" y="478" width="5" height="1"/><rect x="47" y="468" width="3" height="1"/><rect x="1806" y="468" width="3" height="1"/><rect x="45" y="457" width="5" height="1"/><rect x="1806" y="457" width="5" height="1"/><rect x="47" y="446" width="3" height="1"/><rect x="1806" y="446" width="3" height="1"/><rect x="45" y="436" width="5" height="1"/><rect x="1806" y="436" width="5" height="1"/><rect x="47" y="425" width="3" height="1"/><rect x="1806" y="425" width="3" height="1"/><rect x="45" y="414" width="5" height="1"/><rect x="1806" y="414" width="5" height="1"/><rect x="47" y="403" width="3" height="1"/><rect x="1806" y="403" width="3" height="1"/><rect x="45" y="392" width="5" height="1"/><rect x="1806" y="392" width="5" height="1"/><rect x="47" y="382" width="3" height="1"/><rect x="1806" y="382" width="3" height="1"/><rect x="45" y="371" width="5" height="1"/><rect x="1806" y="371" width="5" height="1"/><rect x="47" y="360" width="3" height="1"/><rect x="1806" y="360" width="3" height="1"/><rect x="45" y="350" width="5" height="1"/><rect x="1806" y="350" width="5" height="1"/><rect x="47" y="339" width="3" height="1"/><rect x="1806" y="339" width="3" height="1"/><rect x="45" y="328" width="5" height="1"/><rect x="1806" y="328" width="5" height="1"/><rect x="47" y="317" width="3" height="1"/><rect x="1806" y="317" width="3" height="1"/><rect x="45" y="306" width="5" height="1"/><rect x="1806" y="306" width="5" height="1"/><rect x="47" y="296" width="3" height="1"/><rect x="1806" y="296" width="3" height="1"/><rect x="45" y="285" width="5" height="1"/><rect x="1806" y="285" width="5" height="1"/><rect x="47" y="274" width="3" height="1"/><rect x="1806" y="274" width="3" height="1"/><rect x="45" y="264" width="5" height="1"/><rect x="1806" y="264" width="5" height="1"/><rect x="47" y="253" width="3" height="1"/><rect x="1806" y="253" width="3" height="1"/><rect x="45" y="242" width="5" height="1"/><rect x="1806" y="242" width="5" height="1"/><rect x="47" y="231" width="3" height="1"/><rect x="1806" y="231" width="3" height="1"/><rect x="45" y="220" width="5" height="1"/><rect x="1806" y="220" width="5" height="1"/><rect x="47" y="210" width="3" height="1"/><rect x="1806" y="210" width="3" height="1"/><rect x="45" y="199" width="5" height="1"/><rect x="1806" y="199" width="5" height="1"/><rect x="47" y="188" width="3" height="1"/><rect x="1806" y="188" width="3" height="1"/><rect x="45" y="178" width="5" height="1"/><rect x="1806" y="178" width="5" height="1"/><rect x="47" y="167" width="3" height="1"/><rect x="1806" y="167" width="3" height="1"/><rect x="45" y="156" width="5" height="1"/><rect x="1806" y="156" width="5" height="1"/><rect x="47" y="145" width="3" height="1"/><rect x="1806" y="145" width="3" height="1"/><rect x="45" y="134" width="5" height="1"/><rect x="1806" y="134" width="5" height="1"/><rect x="47" y="124" width="3" height="1"/><rect x="1806" y="124" width="3" height="1"/><rect x="45" y="113" width="5" height="1"/><rect x="1806" y="113" width="5" height="1"/><rect x="47" y="102" width="3" height="1"/><rect x="1806" y="102" width="3" height="1"/><rect x="45" y="92" width="5" height="1"/><rect x="1806" y="92" width="5" height="1"/><rect x="47" y="81" width="3" height="1"/><rect x="1806" y="81" width="3" height="1"/><rect x="45" y="70" width="5" height="1"/><rect x="1806" y="70" width="5" height="1"/><rect x="52" y="933" width="1" height="5"/><rect x="1803" y="933" width="1" height="5"/><rect x="58" y="933" width="1" height="5"/><rect x="65" y="933" width="1" height="3"/><rect x="71" y="933" width="1" height="3"/><rect x="77" y="933" width="1" height="3"/><rect x="84" y="933" width="1" height="3"/><rect x="90" y="933" width="1" height="3"/><rect x="96" y="933" width="1" height="3"/><rect x="103" y="933" width="1" height="3"/><rect x="109" y="933" width="1" height="3"/><rect x="115" y="933" width="1" height="3"/><rect x="122" y="933" width="1" height="3"/><rect x="128" y="933" width="1" height="3"/><rect x="135" y="933" width="1" height="5"/><rect x="141" y="933" width="1" height="3"/><rect x="147" y="933" width="1" height="3"/><rect x="154" y="933" width="1" height="3"/><rect x="160" y="933" width="1" height="3"/><rect x="166" y="933" width="1" height="3"/><rect x="173" y="933" width="1" height="3"/><rect x="179" y="933" width="1" height="3"/><rect x="185" y="933" width="1" height="3"/><rect x="192" y="933" width="1" height="3"/><rect x="198" y="933" width="1" height="3"/><rect x="205" y="933" width="1" height="3"/><rect x="211" y="933" width="1" height="5"/><rect x="217" y="933" width="1" height="3"/><rect x="224" y="933" width="1" height="3"/><rect x="230" y="933" width="1" height="3"/><rect x="236" y="933" width="1" height="3"/><rect x="243" y="933" width="1" height="3"/><rect x="249" y="933" width="1" height="3"/><rect x="255" y="933" width="1" height="3"/><rect x="262" y="933" width="1" height="3"/><rect x="268" y="933" width="1" height="3"/><rect x="275" y="933" width="1" height="3"/><rect x="281" y="933" width="1" height="3"/><rect x="287" y="933" width="1" height="5"/><rect x="294" y="933" width="1" height="3"/><rect x="300" y="933" width="1" height="3"/><rect x="306" y="933" width="1" height="3"/><rect x="313" y="933" width="1" height="3"/><rect x="319" y="933" width="1" height="3"/><rect x="325" y="933" width="1" height="3"/><rect x="332" y="933" width="1" height="3"/><rect x="338" y="933" width="1" height="3"/><rect x="345" y="933" width="1" height="3"/><rect x="351" y="933" width="1" height="3"/><rect x="357" y="933" width="1" height="3"/><rect x="364" y="933" width="1" height="5"/><rect x="370" y="933" width="1" height="3"/><rect x="376" y="933" width="1" height="3"/><rect x="383" y="933" width="1" height="3"/><rect x="389" y="933" width="1" height="3"/><rect x="395" y="933" width="1" height="3"/><rect x="402" y="933" width="1" height="3"/><rect x="408" y="933" width="1" height="3"/><rect x="414" y="933" width="1" height="3"/><rect x="421" y="933" width="1" height="3"/><rect x="427" y="933" width="1" height="3"/><rect x="434" y="933" width="1" height="3"/><rect x="440" y="933" width="1" height="5"/><rect x="446" y="933" width="1" height="3"/><rect x="453" y="933" width="1" height="3"/><rect x="459" y="933" width="1" height="3"/><rect x="465" y="933" width="1" height="3"/><rect x="472" y="933" width="1" height="3"/><rect x="478" y="933" width="1" height="3"/><rect x="484" y="933" width="1" height="3"/><rect x="491" y="933" width="1" height="3"/><rect x="497" y="933" width="1" height="3"/><rect x="504" y="933" width="1" height="3"/><rect x="510" y="933" width="1" height="3"/><rect x="516" y="933" width="1" height="5"/><rect x="523" y="933" width="1" height="3"/><rect x="529" y="933" width="1" height="3"/><rect x="535" y="933" width="1" height="3"/><rect x="542" y="933" width="1" height="3"/><rect x="548" y="933" width="1" height="3"/><rect x="554" y="933" width="1" height="3"/><rect x="561" y="933" width="1" height="3"/><rect x="567" y="933" width="1" height="3"/><rect x="574" y="933" width="1" height="3"/><rect x="580" y="933" width="1" height="3"/><rect x="586" y="933" width="1" height="3"/><rect x="593" y="933" width="1" height="5"/><rect x="599" y="933" width="1" height="3"/><rect x="605" y="933" width="1" height="3"/><rect x="612" y="933" width="1" height="3"/><rect x="618" y="933" width="1" height="3"/><rect x="624" y="933" width="1" height="3"/><rect x="631" y="933" width="1" height="3"/><rect x="637" y="933" width="1" height="3"/><rect x="643" y="933" width="1" height="3"/><rect x="650" y="933" width="1" height="3"/><rect x="656" y="933" width="1" height="3"/><rect x="663" y="933" width="1" height="3"/><rect x="669" y="933" width="1" height="5"/><rect x="675" y="933" width="1" height="3"/><rect x="682" y="933" width="1" height="3"/><rect x="688" y="933" width="1" height="3"/><rect x="694" y="933" width="1" height="3"/><rect x="701" y="933" width="1" height="3"/><rect x="707" y="933" width="1" height="3"/><rect x="713" y="933" width="1" height="3"/><rect x="720" y="933" width="1" height="3"/><rect x="726" y="933" width="1" height="3"/><rect x="733" y="933" width="1" height="3"/><rect x="739" y="933" width="1" height="3"/><rect x="745" y="933" width="1" height="5"/><rect x="752" y="933" width="1" height="3"/><rect x="758" y="933" width="1" height="3"/><rect x="764" y="933" width="1" height="3"/><rect x="771" y="933" width="1" height="3"/><rect x="777" y="933" width="1" height="3"/><rect x="783" y="933" width="1" height="3"/><rect x="790" y="933" width="1" height="3"/><rect x="796" y="933" width="1" height="3"/><rect x="803" y="933" width="1" height="3"/><rect x="809" y="933" width="1" height="3"/><rect x="815" y="933" width="1" height="3"/><rect x="822" y="933" width="1" height="5"/><rect x="828" y="933" width="1" height="3"/><rect x="834" y="933" width="1" height="3"/><rect x="841" y="933" width="1" height="3"/><rect x="847" y="933" width="1" height="3"/><rect x="853" y="933" width="1" height="3"/><rect x="860" y="933" width="1" height="3"/><rect x="866" y="933" width="1" height="3"/><rect x="873" y="933" width="1" height="3"/><rect x="879" y="933" width="1" height="3"/><rect x="885" y="933" width="1" height="3"/><rect x="892" y="933" width="1" height="3"/><rect x="898" y="933" width="1" height="5"/><rect x="904" y="933" width="1" height="3"/><rect x="911" y="933" width="1" height="3"/><rect x="917" y="933" width="1" height="3"/><rect x="923" y="933" width="1" height="3"/><rect x="930" y="933" width="1" height="3"/><rect x="936" y="933" width="1" height="3"/><rect x="942" y="933" width="1" height="3"/><rect x="949" y="933" width="1" height="3"/><rect x="955" y="933" width="1" height="3"/><rect x="962" y="933" width="1" height="3"/><rect x="968" y="933" width="1" height="3"/><rect x="974" y="933" width="1" height="5"/><rect x="981" y="933" width="1" height="3"/><rect x="987" y="933" width="1" height="3"/><rect x="993" y="933" width="1" height="3"/><rect x="1000" y="933" width="1" height="3"/><rect x="1006" y="933" width="1" height="3"/><rect x="1012" y="933" width="1" height="3"/><rect x="1019" y="933" width="1" height="3"/><rect x="1025" y="933" width="1" height="3"/><rect x="1032" y="933" width="1" height="3"/><rect x="1038" y="933" width="1" height="3"/><rect x="1044" y="933" width="1" height="3"/><rect x="1051" y="933" width="1" height="5"/><rect x="1057" y="933" width="1" height="3"/><rect x="1063" y="933" width="1" height="3"/><rect x="1070" y="933" width="1" height="3"/><rect x="1076" y="933" width="1" height="3"/><rect x="1082" y="933" width="1" height="3"/><rect x="1089" y="933" width="1" height="3"/><rect x="1095" y="933" width="1" height="3"/><rect x="1102" y="933" width="1" height="3"/><rect x="1108" y="933" width="1" height="3"/><rect x="1114" y="933" width="1" height="3"/><rect x="1121" y="933" width="1" height="3"/><rect x="1127" y="933" width="1" height="5"/><rect x="1133" y="933" width="1" height="3"/><rect x="1140" y="933" width="1" height="3"/><rect x="1146" y="933" width="1" height="3"/><rect x="1152" y="933" width="1" height="3"/><rect x="1159" y="933" width="1" height="3"/><rect x="1165" y="933" width="1" height="3"/><rect x="1171" y="933" width="1" height="3"/><rect x="1178" y="933" width="1" height="3"/><rect x="1184" y="933" width="1" height="3"/><rect x="1191" y="933" width="1" height="3"/><rect x="1197" y="933" width="1" height="3"/><rect x="1203" y="933" width="1" height="5"/><rect x="1210" y="933" width="1" height="3"/><rect x="1216" y="933" width="1" height="3"/><rect x="1222" y="933" width="1" height="3"/><rect x="1229" y="933" width="1" height="3"/><rect x="1235" y="933" width="1" height="3"/><rect x="1241" y="933" width="1" height="3"/><rect x="1248" y="933" width="1" height="3"/><rect x="1254" y="933" width="1" height="3"/><rect x="1261" y="933" width="1" height="3"/><rect x="1267" y="933" width="1" height="3"/><rect x="1273" y="933" width="1" height="3"/><rect x="1280" y="933" width="1" height="5"/><rect x="1286" y="933" width="1" height="3"/><rect x="1292" y="933" width="1" height="3"/><rect x="1299" y="933" width="1" height="3"/><rect x="1305" y="933" width="1" height="3"/><rect x="1311" y="933" width="1" height="3"/><rect x="1318" y="933" width="1" height="3"/><rect x="1324" y="933" width="1" height="3"/><rect x="1331" y="933" width="1" height="3"/><rect x="1337" y="933" width="1" height="3"/><rect x="1343" y="933" width="1" height="3"/><rect x="1350" y="933" width="1" height="3"/><rect x="1356" y="933" width="1" height="5"/><rect x="1362" y="933" width="1" height="3"/><rect x="1369" y="933" width="1" height="3"/><rect x="1375" y="933" width="1" height="3"/><rect x="1381" y="933" width="1" height="3"/><rect x="1388" y="933" width="1" height="3"/><rect x="1394" y="933" width="1" height="3"/><rect x="1401" y="933" width="1" height="3"/><rect x="1407" y="933" width="1" height="3"/><rect x="1413" y="933" width="1" height="3"/><rect x="1420" y="933" width="1" height="3"/><rect x="1426" y="933" width="1" height="3"/><rect x="1432" y="933" width="1" height="5"/><rect x="1439" y="933" width="1" height="3"/><rect x="1445" y="933" width="1" height="3"/><rect x="1451" y="933" width="1" height="3"/><rect x="1458" y="933" width="1" height="3"/><rect x="1464" y="933" width="1" height="3"/><rect x="1470" y="933" width="1" height="3"/><rect x="1477" y="933" width="1" height="3"/><rect x="1483" y="933" width="1" height="3"/><rect x="1490" y="933" width="1" height="3"/><rect x="1496" y="933" width="1" height="3"/><rect x="1502" y="933" width="1" height="3"/><rect x="1509" y="933" width="1" height="5"/><rect x="1515" y="933" width="1" height="3"/><rect x="1521" y="933" width="1" height="3"/><rect x="1528" y="933" width="1" height="3"/><rect x="1534" y="933" width="1" height="3"/><rect x="1540" y="933" width="1" height="3"/><rect x="1547" y="933" width="1" height="3"/><rect x="1553" y="933" width="1" height="3"/><rect x="1560" y="933" width="1" height="3"/><rect x="1566" y="933" width="1" height="3"/><rect x="1572" y="933" width="1" height="3"/><rect x="1579" y="933" width="1" height="3"/><rect x="1585" y="933" width="1" height="5"/><rect x="1591" y="933" width="1" height="3"/><rect x="1598" y="933" width="1" height="3"/><rect x="1604" y="933" width="1" height="3"/><rect x="1610" y="933" width="1" height="3"/><rect x="1617" y="933" width="1" height="3"/><rect x="1623" y="933" width="1" height="3"/><rect x="1630" y="933" width="1" height="3"/><rect x="1636" y="933" width="1" height="3"/><rect x="1642" y="933" width="1" height="3"/><rect x="1649" y="933" width="1" height="3"/><rect x="1655" y="933" width="1" height="3"/><rect x="1661" y="933" width="1" height="5"/><rect x="1668" y="933" width="1" height="3"/><rect x="1674" y="933" width="1" height="3"/><rect x="1680" y="933" width="1" height="3"/><rect x="1687" y="933" width="1" height="3"/><rect x="1693" y="933" width="1" height="3"/><rect x="1699" y="933" width="1" height="3"/><rect x="1706" y="933" width="1" height="3"/><rect x="1712" y="933" width="1" height="3"/><rect x="1719" y="933" width="1" height="3"/><rect x="1725" y="933" width="1" height="3"/><rect x="1731" y="933" width="1" height="3"/><rect x="1738" y="933" width="1" height="5"/><rect x="1744" y="933" width="1" height="3"/><rect x="1750" y="933" width="1" height="3"/><rect x="1757" y="933" width="1" height="3"/><rect x="1763" y="933" width="1" height="3"/><rect x="1769" y="933" width="1" height="3"/><rect x="1776" y="933" width="1" height="3"/><rect x="1782" y="933" width="1" height="3"/><rect x="1789" y="933" width="1" height="3"/><rect x="1795" y="933" width="1" height="3"/><rect x="1801" y="933" width="1" height="3"/></g>
<g fill="#fff" font-size="10.6px" opacity="0.999"><g text-anchor="middle"><text x="52.5" y="61">5997</text><text x="107.7" y="61">6050</text><text x="159.9" y="61">6100</text><text x="212.0" y="61">6150</text><text x="264.1" y="61">6200</text><text x="316.2" y="61">6250</text><text x="368.3" y="61">6300</text><text x="420.4" y="61">6350</text><text x="472.5" y="61">6400</text><text x="524.6" y="61">6450</text><text x="576.8" y="61">6500</text><text x="628.9" y="61">6550</text><text x="681.0" y="61">6600</text><text x="733.1" y="61">6650</text><text x="785.2" y="61">6700</text><text x="837.3" y="61">6750</text><text x="889.4" y="61">6800</text><text x="941.5" y="61">6850</text><text x="993.7" y="61">6900</text><text x="1045.8" y="61">6950</text><text x="1097.9" y="61">7000</text><text x="1150.0" y="61">7050</text><text x="1202.1" y="61">7100</text><text x="1254.2" y="61">7150</text><text x="1306.3" y="61">7200</text><text x="1358.5" y="61">7250</text><text x="1410.6" y="61">7300</text><text x="1462.7" y="61">7350</text><text x="1514.8" y="61">7400</text><text x="1566.9" y="61">7450</text><text x="1619.0" y="61">7500</text><text x="1671.1" y="61">7550</text><text x="1723.2" y="61">7600</text><text x="1775.4" y="61">7650</text><text x="1803.5" y="61">7677</text><text x="52.5" y="948">01:19:35.475</text><text x="52.5" y="960">02/27/2026</text><text x="135.1" y="948">01:25:00.000</text><text x="135.1" y="960">02/27/2026</text><text x="211.4" y="948">01:30:00.000</text><text x="211.4" y="960">02/27/2026</text><text x="287.8" y="948">01:35:00.000</text><text x="287.8" y="960">02/27/2026</text><text x="364.1" y="948">01:40:00.000</text><text x="364.1" y="960">02/27/2026</text><text x="440.4" y="948">01:45:00.000</text><text x="440.4" y="960">02/27/2026</text><text x="516.8" y="948">01:50:00.000</text><text x="516.8" y="960">02/27/2026</text><text x="593.1" y="948">01:55:00.000</text><text x="593.1" y="960">02/27/2026</text><text x="669.4" y="948">02:00:00.000</text><text x="669.4" y="960">02/27/2026</text><text x="745.8" y="948">02:05:00.000</text><text x="745.8" y="960">02/27/2026</text><text x="822.1" y="948">02:10:00.000</text><text x="822.1" y="960">02/27/2026</text><text x="898.5" y="948">02:15:00.000</text><text x="898.5" y="960">02/27/2026</text><text x="974.8" y="948">02:20:00.000</text><text x="974.8" y="960">02/27/2026</text><text x="1051.1" y="948">02:25:00.000</text><text x="1051.1" y="960">02/27/2026</text><text x="1127.5" y="948">02:30:00.000</text><text x="1127.5" y="960">02/27/2026</text><text x="1203.8" y="948">02:35:00.000</text><text x="1203.8" y="960">02/27/2026</text><text x="1280.1" y="948">02:40:00.000</text><text x="1280.1" y="960">02/27/2026</text><text x="1356.5" y="948">02:45:00.000</text><text x="1356.5" y="960">02/27/2026</text><text x="1432.8" y="948">02:50:00.000</text><text x="1432.8" y="960">02/27/2026</text><text x="1509.2" y="948">02:55:00.000</text><text x="1509.2" y="960">02/27/2026</text><text x="1585.5" y="948">03:00:00.000</text><text x="1585.5" y="960">02/27/2026</text><text x="1661.8" y="948">03:05:00.000</text><text x="1661.8" y="960">02/27/2026</text><text x="1738.2" y="948">03:10:00.000</text><text x="1738.2" y="960">02/27/2026</text><text x="1803.5" y="948">03:14:16.755</text><text x="1803.5" y="960">02/27/2026</text></g><g text-anchor="end"><text x="43.5" y="934">0</text><text x="43.5" y="912">5</text><text x="43.5" y="891">10</text><text x="43.5" y="870">15</text><text x="43.5" y="848">20</text><text x="43.5" y="826">25</text><text x="43.5" y="805">30</text><text x="43.5" y="784">35</text><text x="43.5" y="762">40</text><text x="43.5" y="740">45</text><text x="43.5" y="719">50</text><text x="43.5" y="698">55</text><text x="43.5" y="676">60</text><text x="43.5" y="654">65</text><text x="43.5" y="633">70</text><text x="43.5" y="612">75</text><text x="43.5" y="590">80</text><text x="43.5" y="568">85</text><text x="43.5" y="547">90</text><text x="43.5" y="526">95</text><text x="43.5" y="504">100</text><text x="43.5" y="482">105</text><text x="43.5" y="461">110</text><text x="43.5" y="440">115</text><text x="43.5" y="418">120</text><text x="43.5" y="396">125</text><text x="43.5" y="375">130</text><text x="43.5" y="354">135</text><text x="43.5" y="332">140</text><text x="43.5" y="310">145</text><text x="43.5" y="289">150</text><text x="43.5" y="268">155</text><text x="43.5" y="246">160</text><text x="43.5" y="224">165</text><text x="43.5" y="203">170</text><text x="43.5" y="182">175</text><text x="43.5" y="160">180</text><text x="43.5" y="138">185</text><text x="43.5" y="117">190</text><text x="43.5" y="96">195</text><text x="43.5" y="74">200</text></g><text x="1868.5" y="83">-5.00</text><text x="1868.5" y="511">-9.00</text><text x="1868.5" y="939">-13.00</text></g>
<text x="915.2" y="973.6" fill="#fff" font-size="10px" textLength="19.3" lengthAdjust="spacingAndGlyphs" opacity="0.999">Time</text>
<text transform="translate(1909.5 507.5) rotate(90)" fill="#fff" font-size="10.8px" text-anchor="middle" opacity="0.999">Amplitude(Log10(g^2/Hz))</text>
<g fill="#fff" font-size="10.5px" font-weight="bold" opacity="0.999"><text x="811.7" y="16" textLength="21.7" lengthAdjust="spacingAndGlyphs">AOS</text><text x="840.7" y="16" textLength="120.0" lengthAdjust="spacingAndGlyphs">Fri 27 Feb 2026 03:14:01</text><text x="967.7" y="16" textLength="22.3" lengthAdjust="spacingAndGlyphs">AOS</text><text x="727.7" y="28" textLength="95.0" lengthAdjust="spacingAndGlyphs">CoordSystem:es18</text><text x="831.7" y="28" textLength="71.7" lengthAdjust="spacingAndGlyphs">SensorID:es18</text><text x="916.0" y="28" textLength="47.3" lengthAdjust="spacingAndGlyphs">Axis:sum</text><text x="976.0" y="28" textLength="97.3" lengthAdjust="spacingAndGlyphs">Windowing:Hanning</text><text x="619.0" y="40" textLength="77.7" lengthAdjust="spacingAndGlyphs">Cuttoff(Hz):200</text><text x="714.3" y="40" textLength="66.7" lengthAdjust="spacingAndGlyphs">df(Hz):0.2441</text><text x="799.3" y="40" textLength="80.0" lengthAdjust="spacingAndGlyphs">Sample/Sec:500</text><text x="900.7" y="40" textLength="71.7" lengthAdjust="spacingAndGlyphs">PSD size:2048</text><text x="994.0" y="40" textLength="63.3" lengthAdjust="spacingAndGlyphs">Overlap(%):0</text><text x="1082.3" y="40" textLength="101.0" lengthAdjust="spacingAndGlyphs">TimeRes.(sec):4.096</text></g>
<rect x="1841" y="74" width="18" height="3" fill="#e85088"/>
<rect x="1841" y="79" width="18" height="857" fill="url(#cb)"/>
<rect x="1841" y="937" width="18" height="3" fill="#fff"/>
</svg>
</body></html>
